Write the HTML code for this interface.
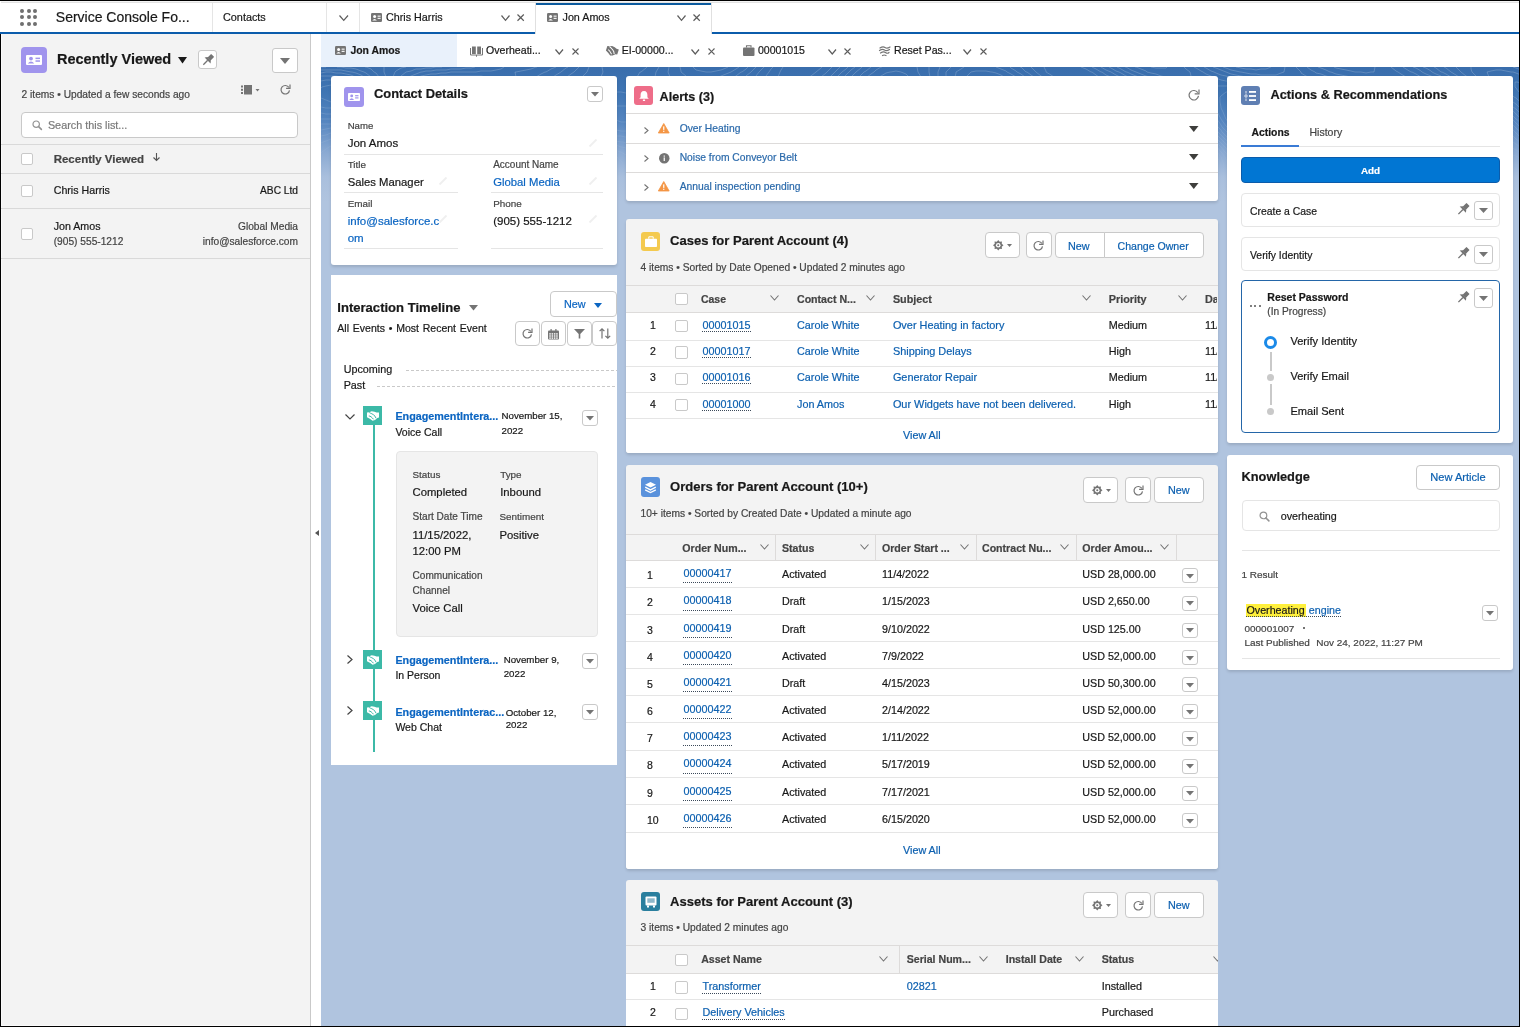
<!DOCTYPE html>
<html><head><meta charset="utf-8"><title>Service Console</title>
<style>
html,body{margin:0;padding:0}
body{width:1520px;height:1027px;overflow:hidden;position:relative;background:#fff;font-family:"Liberation Sans",sans-serif}
#w{position:absolute;left:0;top:0;width:1520px;height:1027px;will-change:transform}
.a{position:absolute}
.t{position:absolute;white-space:nowrap;line-height:1;-webkit-text-stroke:0.2px currentColor}
svg.a{overflow:visible}
</style></head><body>
<div id="w">
<div class="a" style="left:0px;top:0px;width:1520px;height:34px;background:#fff"></div>
<div class="a" style="left:0px;top:0px;width:1520px;height:1px;background:#000"></div>
<div class="a" style="left:1px;top:1px;width:1518px;height:1px;background:#f4f4f4"></div>
<div class="a" style="left:1px;top:2px;width:1518px;height:1px;background:#e2e2e2"></div>
<div class="a" style="left:20.00px;top:9.00px;width:3.8px;height:3.8px;border-radius:50%;background:#707070"></div>
<div class="a" style="left:27.10px;top:9.00px;width:3.8px;height:3.8px;border-radius:50%;background:#707070"></div>
<div class="a" style="left:33.10px;top:9.00px;width:3.8px;height:3.8px;border-radius:50%;background:#707070"></div>
<div class="a" style="left:20.00px;top:15.10px;width:3.8px;height:3.8px;border-radius:50%;background:#707070"></div>
<div class="a" style="left:27.10px;top:15.10px;width:3.8px;height:3.8px;border-radius:50%;background:#707070"></div>
<div class="a" style="left:33.10px;top:15.10px;width:3.8px;height:3.8px;border-radius:50%;background:#707070"></div>
<div class="a" style="left:20.00px;top:22.00px;width:3.8px;height:3.8px;border-radius:50%;background:#707070"></div>
<div class="a" style="left:27.10px;top:22.00px;width:3.8px;height:3.8px;border-radius:50%;background:#707070"></div>
<div class="a" style="left:33.10px;top:22.00px;width:3.8px;height:3.8px;border-radius:50%;background:#707070"></div>
<div class="t" style="left:55.8px;top:10.00px;font-size:14px;font-weight:400;color:#181818;">Service Console Fo...</div>
<div class="a" style="left:212px;top:3px;width:1px;height:29px;background:#e5e5e5"></div>
<div class="t" style="left:223.0px;top:12.00px;font-size:10.85px;font-weight:400;color:#181818;">Contacts</div>
<div class="a" style="left:326px;top:3px;width:1px;height:29px;background:#e5e5e5"></div>
<svg class="a" style="left:339px;top:15px;" width="9.5" height="6.3" viewBox="0 0 9.5 6.3"><path d="M0.5 0.5 L4.75 5.3 L9.0 0.5" fill="none" stroke="#5c5c5c" stroke-width="1.2"/></svg>
<div class="a" style="left:359px;top:3px;width:1px;height:29px;background:#e5e5e5"></div>
<svg class="a" style="left:371px;top:13px;" width="11" height="9" viewBox="0 0 11 9"><rect x="0" y="0" width="11" height="9" rx="1.2" fill="#747474"/><circle cx="3.6" cy="3.4" r="1.5" fill="#fff"/><path d="M1.3 7.6 Q3.6 4.6 5.9 7.6 Z" fill="#fff"/><rect x="6.6" y="2.6" width="3" height="1.1" fill="#fff"/><rect x="6.6" y="4.8" width="3" height="1.1" fill="#fff"/></svg>
<div class="t" style="left:386.0px;top:12.00px;font-size:10.75px;font-weight:400;color:#181818;">Chris Harris</div>
<svg class="a" style="left:500.5px;top:15px;" width="9" height="6.3" viewBox="0 0 9 6.3"><path d="M0.5 0.5 L4.5 5.3 L8.5 0.5" fill="none" stroke="#5c5c5c" stroke-width="1.2"/></svg>
<svg class="a" style="left:517px;top:14.3px;" width="7.3" height="7.3" viewBox="0 0 7.3 7.3"><path d="M0.5 0.5 L6.8 6.8 M6.8 0.5 L0.5 6.8" fill="none" stroke="#5c5c5c" stroke-width="1.2"/></svg>
<div class="a" style="left:0px;top:32px;width:536px;height:2px;background:#0b5cab"></div>
<div class="a" style="left:711px;top:32px;width:809px;height:2px;background:#0b5cab"></div>
<div class="a" style="left:535px;top:3px;width:177px;height:31px;background:#fff;border-left:1px solid #e0e0e0;border-right:1px solid #e0e0e0;box-sizing:border-box"></div>
<div class="a" style="left:536px;top:3px;width:175px;height:2px;background:#0b5a9e"></div>
<svg class="a" style="left:547px;top:13px;" width="11" height="9" viewBox="0 0 11 9"><rect x="0" y="0" width="11" height="9" rx="1.2" fill="#747474"/><circle cx="3.6" cy="3.4" r="1.5" fill="#fff"/><path d="M1.3 7.6 Q3.6 4.6 5.9 7.6 Z" fill="#fff"/><rect x="6.6" y="2.6" width="3" height="1.1" fill="#fff"/><rect x="6.6" y="4.8" width="3" height="1.1" fill="#fff"/></svg>
<div class="t" style="left:562.5px;top:12.00px;font-size:10.75px;font-weight:400;color:#181818;">Jon Amos</div>
<svg class="a" style="left:676.5px;top:15px;" width="9" height="6.3" viewBox="0 0 9 6.3"><path d="M0.5 0.5 L4.5 5.3 L8.5 0.5" fill="none" stroke="#5c5c5c" stroke-width="1.2"/></svg>
<svg class="a" style="left:693px;top:14.3px;" width="7.3" height="7.3" viewBox="0 0 7.3 7.3"><path d="M0.5 0.5 L6.8 6.8 M6.8 0.5 L0.5 6.8" fill="none" stroke="#5c5c5c" stroke-width="1.2"/></svg>
<div class="a" style="left:0px;top:34px;width:1px;height:993px;background:#000"></div>
<div class="a" style="left:1519px;top:0px;width:1px;height:1027px;background:#000"></div>
<div class="a" style="left:1px;top:34px;width:309px;height:993px;background:#f3f3f3"></div>
<div class="a" style="left:1px;top:34px;width:1px;height:991px;background:#fafafa"></div>
<div class="a" style="left:1px;top:1025px;width:309px;height:1px;background:#fafafa"></div>
<div class="a" style="left:310px;top:34px;width:1px;height:993px;background:#c9c9c9"></div>
<div class="a" style="left:311px;top:34px;width:10px;height:993px;background:#fff"></div>
<svg class="a" style="left:314.5px;top:530px;" width="4" height="6" viewBox="0 0 4 6"><path d="M4 0 L4 6 L0 3 Z" fill="#555"/></svg>
<div class="a" style="left:21px;top:47px;width:26px;height:26px;background:#a094ed;border-radius:4px"></div>
<svg class="a" style="left:26px;top:55px;" width="16" height="10" viewBox="0 0 16 10"><rect x="0" y="0" width="16" height="10" rx="1" fill="#fff"/><circle cx="5" cy="3.6" r="1.9" fill="#a094ed"/><path d="M1.8 8.6 Q5 4.6 8.2 8.6 Z" fill="#a094ed"/><rect x="9.5" y="2.6" width="4.5" height="1.5" fill="#a094ed"/><rect x="9.5" y="5.3" width="4.5" height="1.5" fill="#a094ed"/></svg>
<div class="t" style="left:57.0px;top:52.00px;font-size:14.5px;font-weight:700;color:#181818;">Recently Viewed</div>
<svg class="a" style="left:178px;top:57px;" width="9" height="6.5" viewBox="0 0 9 6.5"><path d="M0 0 L9 0 L4.5 6.5 Z" fill="#181818"/></svg>
<div class="a" style="left:198px;top:50px;width:19px;height:19px;background:#fff;border:1px solid #c9c9c9;border-radius:3px;box-sizing:border-box"></div>
<svg class="a" style="left:201.5px;top:53.5px;" width="12" height="12" viewBox="0 0 12 12"><g transform="scale(1.000) rotate(45 6 6)"><rect x="3.9" y="-0.5" width="4.2" height="5" rx="0.4" fill="#747474"/><path d="M1.8 6.6 L10.2 6.6 L8.4 4.3 L3.6 4.3 Z" fill="#747474"/><rect x="5.35" y="6.4" width="1.3" height="6.2" fill="#747474"/></g></svg>
<div class="a" style="left:272px;top:48px;width:26px;height:25px;background:#fff;border:1px solid #c9c9c9;border-radius:3px;box-sizing:border-box"></div>
<svg class="a" style="left:280.0px;top:58.0px;" width="10" height="6" viewBox="0 0 10 6"><path d="M0 0 L10 0 L5.0 6 Z" fill="#747474"/></svg>
<svg class="a" style="left:241px;top:85px;" width="20" height="10" viewBox="0 0 20 10"><rect x="0" y="0.5" width="2" height="2" fill="#747474"/><rect x="0" y="3.8" width="2" height="2" fill="#747474"/><rect x="0" y="7" width="2" height="2" fill="#747474"/><rect x="3" y="0" width="8" height="9.5" fill="#747474"/><path d="M14.5 4 L18.5 4 L16.5 6.5 Z" fill="#747474"/></svg>
<svg class="a" style="left:279.5px;top:84px;" width="10.5" height="10.5" viewBox="0 0 10.5 10.5"><path d="M8.86 3.41 A4.25 4.25 0 1 0 9.50 6.39" fill="none" stroke="#747474" stroke-width="1.2"/><path d="M10.0 0.5 L10.0 4.41 L6.09 4.41" fill="none" stroke="#747474" stroke-width="1.2"/></svg>
<div class="t" style="left:21.6px;top:90.00px;font-size:10.2px;font-weight:400;color:#444;">2 items • Updated a few seconds ago</div>
<div class="a" style="left:21px;top:112px;width:277px;height:26px;background:#fff;border:1px solid #c9c9c9;border-radius:4px;box-sizing:border-box"></div>
<svg class="a" style="left:31.5px;top:119.5px;" width="10" height="10" viewBox="0 0 10 10"><circle cx="4.20" cy="4.20" r="3.20" fill="none" stroke="#939393" stroke-width="1.2"/><path d="M6.60 6.60 L9.4 9.4" stroke="#939393" stroke-width="1.56" stroke-linecap="round"/></svg>
<div class="t" style="left:47.9px;top:120.00px;font-size:10.84px;font-weight:400;color:#7a7a7a;">Search this list...</div>
<div class="a" style="left:1px;top:144px;width:309px;height:1px;background:#d9d9d9"></div>
<div class="a" style="left:21px;top:153px;width:12px;height:12px;background:#fff;border:1px solid #c9c9c9;border-radius:2px;box-sizing:border-box"></div>
<div class="t" style="left:53.7px;top:154.00px;font-size:11.49px;font-weight:700;color:#444;">Recently Viewed</div>
<svg class="a" style="left:153px;top:153px;" width="7" height="8" viewBox="0 0 7 8"><path d="M3.5 0 L3.5 7.5 M0.5 4.5 L3.5 7.5 L6.5 4.5" fill="none" stroke="#555" stroke-width="1.1"/></svg>
<div class="a" style="left:1px;top:173px;width:309px;height:1px;background:#d9d9d9"></div>
<div class="a" style="left:21px;top:185px;width:12px;height:12px;background:#fff;border:1px solid #c9c9c9;border-radius:2px;box-sizing:border-box"></div>
<div class="t" style="left:53.7px;top:185.00px;font-size:10.67px;font-weight:400;color:#181818;">Chris Harris</div>
<div class="t" style="right:1222.0px;top:186.00px;font-size:10.2px;font-weight:400;color:#181818;">ABC Ltd</div>
<div class="a" style="left:1px;top:208px;width:309px;height:1px;background:#d9d9d9"></div>
<div class="a" style="left:21px;top:228px;width:12px;height:12px;background:#fff;border:1px solid #c9c9c9;border-radius:2px;box-sizing:border-box"></div>
<div class="t" style="left:53.7px;top:221.00px;font-size:10.67px;font-weight:400;color:#181818;">Jon Amos</div>
<div class="t" style="left:53.7px;top:237.00px;font-size:10.2px;font-weight:400;color:#444;">(905) 555-1212</div>
<div class="t" style="right:1222.0px;top:222.00px;font-size:10.2px;font-weight:400;color:#444;">Global Media</div>
<div class="t" style="right:1222.0px;top:237.00px;font-size:10.2px;font-weight:400;color:#444;">info@salesforce.com</div>
<div class="a" style="left:1px;top:258px;width:309px;height:1px;background:#d9d9d9"></div>
<div class="a" style="left:321px;top:34px;width:1198px;height:33px;background:#fff"></div>
<div class="a" style="left:321px;top:34px;width:136px;height:33px;background:#e9f1fb"></div>
<svg class="a" style="left:335px;top:46px;" width="11" height="9" viewBox="0 0 11 9"><rect x="0" y="0" width="11" height="9" rx="1.2" fill="#747474"/><circle cx="3.6" cy="3.4" r="1.5" fill="#fff"/><path d="M1.3 7.6 Q3.6 4.6 5.9 7.6 Z" fill="#fff"/><rect x="6.6" y="2.6" width="3" height="1.1" fill="#fff"/><rect x="6.6" y="4.8" width="3" height="1.1" fill="#fff"/></svg>
<div class="t" style="left:350.4px;top:46.00px;font-size:10.42px;font-weight:700;color:#181818;">Jon Amos</div>
<svg class="a" style="left:469.5px;top:45.5px;" width="13" height="10.5" viewBox="0 0 13 10.5"><path d="M0.5 2 L0.5 9 L6.5 9 L6.5 10.5 L6.5 9 L12.5 9 L12.5 2" fill="none" stroke="#747474" stroke-width="1"/><rect x="2" y="0.5" width="3.8" height="7.5" fill="#747474"/><rect x="7.2" y="0.5" width="3.8" height="7.5" fill="#747474"/></svg>
<div class="t" style="left:486.0px;top:45.00px;font-size:10.6px;font-weight:400;color:#181818;">Overheati...</div>
<svg class="a" style="left:555px;top:48.5px;" width="8.5" height="6" viewBox="0 0 8.5 6"><path d="M0.5 0.5 L4.25 5 L8.0 0.5" fill="none" stroke="#5c5c5c" stroke-width="1.2"/></svg>
<svg class="a" style="left:572px;top:47.5px;" width="7" height="7" viewBox="0 0 7 7"><path d="M0.5 0.5 L6.5 6.5 M6.5 0.5 L0.5 6.5" fill="none" stroke="#5c5c5c" stroke-width="1.1"/></svg>
<svg class="a" style="left:606px;top:45.5px;" width="12" height="10.5" viewBox="0 0 12 10.5"><g transform="rotate(18 6 5)"><path d="M0 1.6 L2.3 1.3 L4.6 0.3 L7.5 0.7 L9.6 1.4 L12 1.4 L12 6.6 L10.3 6.9 L8 9.1 L5.6 9.8 L2.8 7.8 L0 6.3 Z" fill="#747474"/><path d="M2.3 1.5 C3.8 2.7 5.6 2.4 8 5.2 L9 7.2" stroke="#fff" stroke-width="1" fill="none"/><path d="M1.8 5 C3.3 4.8 4.8 6.3 6.6 8.3" stroke="#fff" stroke-width="1" fill="none"/></g></svg>
<div class="t" style="left:621.7px;top:45.00px;font-size:10.6px;font-weight:400;color:#181818;">EI-00000...</div>
<svg class="a" style="left:691px;top:48.5px;" width="8.5" height="6" viewBox="0 0 8.5 6"><path d="M0.5 0.5 L4.25 5 L8.0 0.5" fill="none" stroke="#5c5c5c" stroke-width="1.2"/></svg>
<svg class="a" style="left:708px;top:47.5px;" width="7" height="7" viewBox="0 0 7 7"><path d="M0.5 0.5 L6.5 6.5 M6.5 0.5 L0.5 6.5" fill="none" stroke="#5c5c5c" stroke-width="1.1"/></svg>
<svg class="a" style="left:742.5px;top:45px;" width="11.5" height="11" viewBox="0 0 11.5 11"><rect x="0" y="2.5" width="11.5" height="8.5" rx="1" fill="#747474"/><path d="M3.5 2.5 L3.5 0.7 L8 0.7 L8 2.5" fill="none" stroke="#747474" stroke-width="1.1"/></svg>
<div class="t" style="left:758.0px;top:45.00px;font-size:10.56px;font-weight:400;color:#181818;">00001015</div>
<svg class="a" style="left:827.5px;top:48.5px;" width="8.5" height="6" viewBox="0 0 8.5 6"><path d="M0.5 0.5 L4.25 5 L8.0 0.5" fill="none" stroke="#5c5c5c" stroke-width="1.2"/></svg>
<svg class="a" style="left:844px;top:47.5px;" width="7" height="7" viewBox="0 0 7 7"><path d="M0.5 0.5 L6.5 6.5 M6.5 0.5 L0.5 6.5" fill="none" stroke="#5c5c5c" stroke-width="1.1"/></svg>
<svg class="a" style="left:879px;top:45.5px;" width="11.5" height="11" viewBox="0 0 11.5 11"><path d="M1 2 Q4 0 6 1.5 T11 1 M0.5 4.5 Q3.5 2.5 5.5 4 T10.5 3.5 M1.5 7 Q4.5 5 6.5 6.5 T10 6.5 M3.5 9.5 Q5 8.5 7 9.5" fill="none" stroke="#747474" stroke-width="1.2" stroke-linecap="round"/></svg>
<div class="t" style="left:894.0px;top:45.00px;font-size:10.6px;font-weight:400;color:#181818;">Reset Pas...</div>
<svg class="a" style="left:963px;top:48.5px;" width="8.5" height="6" viewBox="0 0 8.5 6"><path d="M0.5 0.5 L4.25 5 L8.0 0.5" fill="none" stroke="#5c5c5c" stroke-width="1.2"/></svg>
<svg class="a" style="left:980px;top:47.5px;" width="7" height="7" viewBox="0 0 7 7"><path d="M0.5 0.5 L6.5 6.5 M6.5 0.5 L0.5 6.5" fill="none" stroke="#5c5c5c" stroke-width="1.1"/></svg>
<div class="a" style="left:321px;top:67px;width:1198px;height:960px;background:linear-gradient(180deg,#396dac 0px,#3f75b3 25px,#5686c0 55px,#8aa9d2 85px,#a9bfdd 110px,#b0c4df 135px,#b0c4df 960px)"></div>
<svg class="a" style="left:321px;top:67px" width="1198" height="120" viewBox="0 0 1198 120"><defs><linearGradient id="cg" x1="0" y1="0" x2="0" y2="1"><stop offset="0" stop-color="#fff" stop-opacity="1"/><stop offset="0.45" stop-color="#fff" stop-opacity="0.6"/><stop offset="0.9" stop-color="#fff" stop-opacity="0"/></linearGradient><mask id="cm"><rect x="0" y="0" width="1198" height="120" fill="url(#cg)"/></mask></defs><path d="M975 95L973 95M980 94L975 95M985 95L980 94M965 98L963 100M970 96L965 98M973 95L970 96M985 95L985 95M990 97L985 95M995 99L990 97M996 100L995 99M960 104L960 105M963 100L960 104M996 100L998 105M960 105L959 110M998 105L996 110M959 110L960 114M960 115L960 114M990 115L989 115M995 111L990 115M996 110L995 111M960 115L965 118M970 119L965 118M975 119L970 119M980 118L975 119M985 117L980 118M989 115L985 117M965 93L962 95M970 92L965 93M975 91L970 92M980 91L975 91M985 92L980 91M990 93L985 92M995 95L990 93M995 95L995 95M960 97L957 100M962 95L960 97M995 95L1000 98M1002 100L1000 98M955 104L955 105M957 100L955 104M1002 100L1003 105M955 105L954 110M1003 105L1001 110M954 110L954 115M1000 111L995 115M1001 110L1000 111M954 115L955 117M958 120L955 117M985 120L985 120M990 118L985 120M995 115L990 118M995 115L995 115M705 54L704 55M710 52L705 54M715 52L710 52M720 52L715 52M725 53L720 52M730 55L725 53M730 55L730 55M704 55L702 60M730 55L735 60M702 60L704 65M735 60L735 61M735 65L735 61M704 65L705 66M710 68L705 66M714 70L710 68M730 70L729 70M735 65L730 70M735 65L735 65M714 70L715 70M720 71L715 70M725 71L720 71M729 70L725 71M965 89L963 90M970 88L965 89M975 88L970 88M980 88L975 88M985 89L980 88M989 90L985 89M960 92L956 95M963 90L960 92M989 90L990 90M995 92L990 90M1000 94L995 92M1002 95L1000 94M955 96L953 100M956 95L955 96M1002 95L1005 98M1006 100L1005 98M953 100L950 105M1006 100L1007 105M950 106L949 110M950 105L950 106M1007 105L1005 110M949 110L949 115M1005 110L1000 115M1005 110L1005 110M949 115L950 119M950 120L950 119M995 118L992 120M1000 115L995 118M1000 115L1000 115M700 50L700 50M705 48L700 50M710 47L705 48M715 47L710 47M720 47L715 47M725 48L720 47M730 49L725 48M732 50L730 49M695 54L695 55M700 50L695 54M732 50L735 52M739 55L735 52M695 55L693 60M739 55L740 56M742 60L740 56M693 60L695 64M695 65L695 64M742 60L743 65M695 65L700 69M702 70L700 69M743 65L741 70M702 70L705 71M710 73L705 71M715 74L710 73M718 75L715 74M735 74L733 75M740 71L735 74M741 70L740 71M718 75L720 75M725 76L720 75M730 76L725 76M733 75L730 76M960 87L955 90M965 86L960 87M970 85L965 86M975 85L970 85M980 86L975 85M985 87L980 86M990 88L985 87M995 89L990 88M997 90L995 89M955 90L951 95M955 90L955 90M997 90L1000 91M1005 94L1000 91M1007 95L1005 94M950 97L948 100M951 95L950 97M1007 95L1010 99M1011 100L1010 99M948 100L947 105M1011 100L1011 105M947 105L945 110M1010 108L1009 110M1011 105L1010 108M945 112L945 115M945 110L945 112M1005 115L1005 115M1009 110L1005 115M945 115L945 120M1000 118L997 120M1005 115L1000 118M5 19L1 20M10 18L5 19M15 19L10 18M20 20L15 19M1 20L0 21M20 20L20 20M24 25L20 20M24 25L23 30M5 33L0 31M10 35L5 33M15 34L10 35M20 32L15 34M23 30L20 32M700 44L698 45M705 43L700 44M710 43L705 43M715 43L710 43M720 43L715 43M725 44L720 43M730 45L725 44M695 47L691 50M698 45L695 47M730 45L730 45M735 47L730 45M740 50L735 47M740 50L740 50M1120 48L1117 50M1125 46L1120 48M1130 46L1125 46M1135 48L1130 46M1140 50L1135 48M1141 50L1140 50M690 51L688 55M691 50L690 51M740 50L745 54M746 55L745 54M1117 50L1117 55M1141 50L1145 53M1147 55L1145 53M688 55L687 60M746 55L748 60M1117 55L1120 60M1120 60L1120 60M1147 55L1148 60M687 60L689 65M748 60L749 65M1120 60L1125 62M1130 64L1125 62M1133 65L1130 64M1145 64L1142 65M1148 60L1145 64M689 65L690 66M694 70L690 66M749 65L748 70M1133 65L1135 65M1140 65L1135 65M1142 65L1140 65M694 70L695 71M700 73L695 71M704 75L700 73M748 70L745 75M704 75L705 75M710 77L705 75M715 78L710 77M720 79L715 78M725 80L720 79M730 80L725 80M735 80L730 80M740 78L735 80M745 75L740 78M745 75L745 75M955 84L954 85M960 82L955 84M965 82L960 82M970 82L965 82M975 82L970 82M980 83L975 82M985 84L980 83M989 85L985 84M950 89L949 90M954 85L950 89M989 85L990 85M995 87L990 85M1000 89L995 87M1004 90L1000 89M949 90L947 95M1004 90L1005 91M1010 94L1005 91M1011 95L1010 94M945 99L945 100M947 95L945 99M1011 95L1014 100M945 100L943 105M1014 100L1015 105M943 105L942 110M1015 105L1013 110M942 110L941 115M1010 113L1008 115M1013 110L1010 113M65 119L63 120M70 118L65 119M75 118L70 118M80 118L75 118M82 120L80 118M941 115L940 120M1005 118L1002 120M1008 115L1005 118M5 13L0 14M10 13L5 13M15 13L10 13M20 14L15 13M24 15L20 14M24 15L25 16M30 19L25 16M31 20L30 19M31 20L34 25M34 25L34 30M34 30L31 35M25 38L21 40M30 35L25 38M31 35L30 35M700 40L699 40M705 39L700 40M710 39L705 39M715 39L710 39M720 40L715 39M722 40L720 40M5 41L0 40M10 41L5 41M15 41L10 41M20 40L15 41M21 40L20 40M690 44L688 45M695 41L690 44M699 40L695 41M722 40L725 40M730 42L725 40M735 43L730 42M739 45L735 43M1115 42L1111 45M1120 41L1115 42M1125 40L1120 41M1130 41L1125 40M1135 42L1130 41M1140 44L1135 42M1142 45L1140 44M685 48L684 50M688 45L685 48M739 45L740 46M745 49L740 46M747 50L745 49M1110 47L1109 50M1111 45L1110 47M1142 45L1145 47M1150 50L1145 47M684 50L682 55M747 50L750 54M751 55L750 54M1109 50L1109 55M1150 50L1150 50M1155 55L1150 50M682 55L681 60M751 55L753 60M1109 55L1110 57M1112 60L1110 57M1155 55L1155 56M1157 60L1155 56M681 60L683 65M753 60L754 65M1112 60L1115 63M1119 65L1115 63M1157 60L1157 65M683 65L685 67M687 70L685 67M754 65L754 70M1119 65L1120 66M1125 67L1120 66M1130 69L1125 67M1135 70L1130 69M1137 70L1135 70M1155 68L1150 70M1157 65L1155 68M687 70L690 72M695 74L690 72M696 75L695 74M754 70L752 75M1137 70L1140 70M1145 70L1140 70M1150 70L1145 70M1150 70L1150 70M696 75L700 76M705 78L700 76M710 80L705 78M711 80L710 80M750 80L750 80M752 75L750 80M955 78L950 80M960 77L955 78M965 78L960 77M970 79L965 78M975 80L970 79M977 80L975 80M711 80L715 81M720 82L715 81M725 83L720 82M730 84L725 83M735 84L730 84M740 84L735 84M745 83L740 84M750 80L745 83M950 80L947 85M950 80L950 80M977 80L980 81M985 82L980 81M990 83L985 82M995 85L990 83M997 85L995 85M945 88L944 90M947 85L945 88M997 85L1000 86M1005 88L1000 86M1009 90L1005 88M944 90L943 95M1009 90L1010 91M1015 95L1010 91M1015 95L1015 95M943 95L941 100M1015 95L1018 100M940 104L940 105M941 100L940 104M1018 100L1018 105M80 110L78 110M85 109L80 110M90 108L85 109M95 108L90 108M100 108L95 108M102 110L100 108M940 105L938 110M1018 105L1016 110M65 114L61 115M70 112L65 114M75 111L70 112M78 110L75 111M100 114L100 115M102 110L100 114M938 110L937 115M1015 111L1012 115M1016 110L1015 111M50 120L50 120M55 118L50 120M60 115L55 118M61 115L60 115M95 120L95 120M100 115L95 120M937 115L936 120M1010 117L1006 120M1012 115L1010 117M5 9L0 9M10 9L5 9M15 9L10 9M20 10L15 9M22 10L20 10M22 10L25 11M30 13L25 11M34 15L30 13M34 15L35 16M39 20L35 16M39 20L40 22M41 25L40 22M41 25L41 30M40 33L39 35M41 30L40 33M35 39L34 40M39 35L35 39M690 38L686 40M695 36L690 38M700 35L695 36M705 35L700 35M710 35L705 35M715 36L710 35M720 36L715 36M725 37L720 36M730 39L725 37M735 40L730 39M920 36L916 40M925 35L920 36M930 35L925 35M935 36L930 35M940 39L935 36M942 40L940 39M1110 38L1107 40M1115 36L1110 38M1120 36L1115 36M1125 36L1120 36M1130 37L1125 36M1135 38L1130 37M1140 40L1135 38M25 44L23 45M30 42L25 44M34 40L30 42M685 40L681 45M686 40L685 40M735 40L735 40M740 42L735 40M745 44L740 42M746 45L745 44M915 44L915 45M916 40L915 44M942 40L945 43M947 45L945 43M1105 42L1104 45M1107 40L1105 42M1140 40L1140 40M1145 42L1140 40M1150 45L1145 42M5 47L0 46M10 47L5 47M15 47L10 47M20 46L15 47M23 45L20 46M680 46L678 50M681 45L680 46M746 45L750 48M752 50L750 48M915 45L915 45M917 50L915 45M947 45L949 50M1104 45L1103 50M1150 45L1150 45M1155 49L1150 45M1156 50L1155 49M678 50L676 55M752 50L755 54M756 55L755 54M917 50L920 55M949 50L950 55M1103 50L1103 55M1156 50L1160 54M1161 55L1160 54M676 55L676 60M756 55L757 60M920 55L920 55M925 60L920 55M950 55L950 57M950 60L950 57M1103 55L1105 59M1105 60L1105 59M1161 55L1164 60M676 60L678 65M757 60L758 65M925 60L925 60M930 64L925 60M932 65L930 64M950 60L952 65M1105 60L1110 64M1111 65L1110 64M1164 60L1165 64M1165 65L1165 64M678 65L680 68M682 70L680 68M758 65L758 70M932 65L935 68M938 70L935 68M952 65L955 68M957 70L955 68M1111 65L1115 67M1120 69L1115 67M1122 70L1120 69M1165 69L1165 70M1165 65L1165 69M682 70L685 72M689 75L685 72M758 70L758 75M938 70L940 73M941 75L940 73M957 70L960 71M965 73L960 71M970 75L965 73M1122 70L1125 71M1130 72L1125 71M1135 73L1130 72M1140 74L1135 73M1145 75L1140 74M1149 75L1145 75M1160 74L1156 75M1165 70L1160 74M689 75L690 75M695 77L690 75M700 79L695 77M702 80L700 79M758 75L757 80M941 75L941 80M970 75L970 75M975 77L970 75M980 78L975 77M985 79L980 78M987 80L985 79M1149 75L1150 75M1155 75L1150 75M1156 75L1155 75M702 80L705 81M710 82L705 81M715 84L710 82M719 85L715 84M757 80L757 85M941 80L941 85M987 80L990 81M995 82L990 81M1000 84L995 82M1003 85L1000 84M719 85L720 85M725 86L720 85M730 88L725 86M735 89L730 88M739 90L735 89M757 85L756 90M941 85L940 90M1003 85L1005 86M1010 88L1005 86M1014 90L1010 88M739 90L740 90M745 92L740 90M750 94L745 92M754 95L750 94M756 90L757 95M940 90L939 95M940 90L940 90M1014 90L1015 91M1019 95L1015 91M100 100L99 100M105 99L100 100M110 98L105 99M115 97L110 98M120 97L115 97M125 98L120 97M127 100L125 98M754 95L754 100M757 95L760 96M765 98L760 96M768 100L765 98M939 95L938 100M1019 95L1020 97M1021 100L1020 97M1190 97L1185 100M1195 97L1190 97M1200 99L1195 97M85 104L81 105M90 102L85 104M95 101L90 102M99 100L95 101M125 102L122 105M127 100L125 102M754 100L754 105M768 100L770 101M775 104L770 101M776 105L775 104M938 100L937 105M1021 100L1021 105M1185 101L1184 105M1185 100L1185 101M65 110L64 110M70 108L65 110M75 107L70 108M80 105L75 107M81 105L80 105M120 107L116 110M122 105L120 107M754 105L754 110M776 105L778 110M937 105L935 110M1020 108L1019 110M1021 105L1020 108M1184 105L1185 107M1186 110L1185 107M55 113L51 115M60 112L55 113M64 110L60 112M110 114L109 115M115 111L110 114M116 110L115 111M754 110L755 115M778 110L777 115M935 110L934 115M935 110L935 110M1019 110L1015 115M1186 110L1190 112M1195 113L1190 112M1200 112L1195 113M45 118L41 120M50 115L45 118M51 115L50 115M105 118L103 120M109 115L105 118M755 115L755 116M759 120L755 116M770 120L768 120M775 117L770 120M777 115L775 117M934 115L932 120M1010 120L1010 120M1015 115L1010 120M1015 115L1015 115M5 5L0 6M10 5L5 5M15 6L10 5M20 6L15 6M25 7L20 6M30 8L25 7M34 10L30 8M34 10L35 10M40 14L35 10M42 15L40 14M42 15L45 19M46 20L45 19M46 20L47 25M47 25L47 30M915 30L914 30M920 29L915 30M925 29L920 29M930 30L925 29M933 30L930 30M47 30L46 35M685 33L682 35M690 32L685 33M695 31L690 32M700 31L695 31M705 31L700 31M710 32L705 31M715 33L710 32M720 33L715 33M725 34L720 33M728 35L725 34M910 32L908 35M914 30L910 32M933 30L935 30M940 32L935 30M945 34L940 32M946 35L945 34M1105 34L1103 35M1110 32L1105 34M1115 32L1110 32M1120 32L1115 32M1125 32L1120 32M1130 33L1125 32M1135 35L1130 33M1136 35L1135 35M45 36L42 40M46 35L45 36M680 36L677 40M682 35L680 36M728 35L730 36M735 37L730 36M740 39L735 37M743 40L740 39M908 35L907 40M946 35L950 39M951 40L950 39M1100 39L1099 40M1103 35L1100 39M1136 35L1140 37M1145 39L1140 37M1147 40L1145 39M40 42L36 45M42 40L40 42M675 43L674 45M677 40L675 43M743 40L745 41M750 44L745 41M752 45L750 44M907 40L907 45M951 40L954 45M1099 40L1098 45M1147 40L1150 41M1155 45L1150 41M1156 45L1155 45M25 49L22 50M30 47L25 49M35 45L30 47M36 45L35 45M674 45L672 50M752 45L755 48M757 50L755 48M907 45L909 50M954 45L955 48M956 50L955 48M1098 45L1097 50M1156 45L1160 49M1162 50L1160 49M5 52L0 52M10 52L5 52M15 51L10 52M20 50L15 51M22 50L20 50M672 50L671 55M757 50L760 55M909 50L910 51M913 55L910 51M956 50L957 55M1097 50L1098 55M1162 50L1165 54M1166 55L1165 54M671 55L671 60M760 55L760 55M762 60L760 55M913 55L915 58M917 60L915 58M957 55L959 60M1098 55L1100 60M1100 60L1100 60M1166 55L1169 60M671 60L672 65M762 60L762 65M917 60L920 63M922 65L920 63M959 60L960 62M962 65L960 62M1100 60L1105 65M1169 60L1170 61M1172 65L1170 61M672 65L675 69M676 70L675 69M762 65L763 70M922 65L925 68M928 70L925 68M962 65L965 68M968 70L965 68M1105 65L1105 65M1110 68L1105 65M1114 70L1110 68M1172 65L1174 70M676 70L680 73M683 75L680 73M763 70L763 75M928 70L930 72M932 75L930 72M968 70L970 71M975 73L970 71M979 75L975 73M1114 70L1115 71M1120 72L1115 71M1125 74L1120 72M1130 75L1125 74M1174 70L1175 75M683 75L685 76M690 78L685 76M694 80L690 78M763 75L764 80M932 75L935 80M979 75L980 75M985 77L980 75M990 79L985 77M994 80L990 79M1130 75L1130 75M1135 76L1130 75M1140 77L1135 76M1145 78L1140 77M1150 79L1145 78M1154 80L1150 79M1175 75L1175 77M1176 80L1175 77M694 80L695 80M700 82L695 80M705 84L700 82M710 85L705 84M764 80L765 85M765 85L765 85M935 80L935 81M936 85L935 81M994 80L995 80M1000 82L995 80M1005 84L1000 82M1009 85L1005 84M1154 80L1155 80M1160 81L1155 80M1165 82L1160 81M1170 84L1165 82M1173 85L1170 84M1176 80L1180 84M1181 85L1180 84M710 85L710 85M715 87L710 85M720 88L715 87M725 90L720 88M725 90L725 90M765 85L768 90M936 85L936 90M1009 85L1010 86M1015 88L1010 86M1018 90L1015 88M1173 85L1174 90M1181 85L1185 86M1190 88L1185 86M1195 89L1190 88M1197 90L1195 89M105 94L101 95M110 93L105 94M115 92L110 93M120 91L115 92M125 90L120 91M130 90L125 90M135 90L130 90M140 92L135 90M143 95L140 92M725 90L730 92M735 94L730 92M736 95L735 94M768 90L770 92M774 95L770 92M936 90L936 95M1018 90L1020 92M1023 95L1020 92M1174 90L1174 95M1197 90L1200 91M85 100L84 100M90 98L85 100M95 97L90 98M100 95L95 97M101 95L100 95M140 100L140 100M143 95L140 100M736 95L740 98M741 100L740 98M774 95L775 96M780 100L775 96M780 100L780 100M935 98L935 100M936 95L935 98M1023 95L1025 100M1174 95L1175 100M70 105L69 105M75 103L70 105M80 102L75 103M84 100L80 102M135 103L133 105M140 100L135 103M520 104L518 105M525 103L520 104M530 102L525 103M535 101L530 102M540 100L535 101M545 101L540 100M550 102L545 101M555 104L550 102M556 105L555 104M741 100L744 105M780 100L785 105M785 105L785 105M935 100L933 105M1025 100L1024 105M1175 100L1175 105M55 110L55 110M60 108L55 110M65 106L60 108M69 105L65 106M125 110L125 110M130 107L125 110M133 105L130 107M510 109L508 110M515 107L510 109M518 105L515 107M556 105L556 110M744 105L744 110M785 105L787 110M933 105L932 110M1024 105L1022 110M1175 105L1175 106M1176 110L1175 106M45 114L43 115M50 112L45 114M55 110L50 112M120 113L117 115M125 110L120 113M505 112L500 115M508 110L505 112M555 111L552 115M556 110L555 111M744 110L745 115M787 110L786 115M932 110L930 115M1020 113L1018 115M1022 110L1020 113M1176 110L1178 115M35 119L34 120M40 117L35 119M43 115L40 117M110 120L110 120M115 116L110 120M117 115L115 116M495 119L493 120M500 115L495 119M500 115L500 115M550 117L546 120M552 115L550 117M745 115L745 117M745 120L745 117M785 117L783 120M786 115L785 117M930 116L928 120M930 115L930 116M1015 118L1013 120M1018 115L1015 118M1178 115L1180 117M1185 120L1180 117M1187 120L1185 120M1200 120L1198 120M5 3L0 3M10 3L5 3M15 3L10 3M20 3L15 3M25 4L20 3M30 5L25 4M31 5L30 5M460 3L459 5M462 0L460 3M500 1L495 5M501 0L500 1M830 0L830 0M835 1L830 0M840 1L835 1M845 1L840 1M846 0L845 1M31 5L35 6M40 8L35 6M43 10L40 8M459 5L457 10M490 9L488 10M495 5L490 9M495 5L495 5M43 10L45 12M48 15L45 12M457 10L458 15M485 12L480 15M488 10L485 12M48 15L50 18M51 20L50 18M458 15L460 17M465 19L460 17M470 18L465 19M475 17L470 18M480 15L475 17M480 15L480 15M51 20L53 25M910 24L906 25M915 24L910 24M920 24L915 24M925 24L920 24M930 25L925 24M53 25L53 30M675 29L674 30M680 26L675 29M685 26L680 26M690 26L685 26M695 26L690 26M700 27L695 26M705 28L700 27M710 28L705 28M715 29L710 28M718 30L715 29M900 29L899 30M905 25L900 29M906 25L905 25M930 25L930 25M935 26L930 25M940 27L935 26M945 29L940 27M947 30L945 29M1100 29L1098 30M1105 27L1100 29M1110 27L1105 27M1115 27L1110 27M1120 28L1115 27M1125 29L1120 28M1130 30L1125 29M53 30L52 35M674 30L671 35M718 30L720 30M725 31L720 30M730 33L725 31M735 34L730 33M738 35L735 34M899 30L899 35M947 30L950 32M954 35L950 32M1095 34L1095 35M1098 30L1095 34M1130 30L1130 30M1135 32L1130 30M1140 33L1135 32M1144 35L1140 33M50 39L49 40M52 35L50 39M295 39L293 40M300 39L295 39M305 39L300 39M310 40L305 39M311 40L310 40M670 39L670 40M671 35L670 39M738 35L740 36M745 38L740 36M750 40L745 38M899 35L900 40M954 35L955 36M958 40L955 36M1095 35L1093 40M1144 35L1145 36M1150 38L1145 36M1153 40L1150 38M45 44L44 45M49 40L45 44M290 42L286 45M293 40L290 42M311 40L315 41M320 44L315 41M322 45L320 44M670 40L668 45M750 40L750 40M755 43L750 40M757 45L755 43M900 40L900 41M902 45L900 41M958 40L960 45M960 45L960 45M1093 40L1093 45M1153 40L1155 41M1160 44L1155 41M1161 45L1160 44M40 48L35 50M44 45L40 48M286 45L288 50M322 45L324 50M668 45L667 50M757 45L760 48M761 50L760 48M902 45L904 50M960 45L961 50M1093 45L1093 50M1161 45L1165 49M1166 50L1165 49M20 55L19 55M25 54L20 55M30 52L25 54M35 50L30 52M35 50L35 50M288 50L290 51M295 53L290 51M300 55L295 53M303 55L300 55M315 54L311 55M320 52L315 54M324 50L320 52M667 50L666 55M761 50L764 55M904 50L905 52M907 55L905 52M961 50L963 55M1093 50L1093 55M1166 50L1170 54M1171 55L1170 54M5 57L0 57M10 57L5 57M15 56L10 57M19 55L15 56M303 55L305 55M310 55L305 55M311 55L310 55M666 55L666 60M764 55L765 58M765 60L765 58M907 55L910 59M911 60L910 59M963 55L965 60M1093 55L1095 59M1095 60L1095 59M1171 55L1175 60M666 60L667 65M765 60L766 65M911 60L915 64M916 65L915 64M965 60L965 60M968 65L965 60M1095 60L1099 65M1175 60L1175 61M1178 65L1175 61M667 65L670 69M671 70L670 69M766 65L767 70M916 65L920 69M921 70L920 69M968 65L970 66M975 70L970 66M975 70L975 70M1099 65L1100 66M1105 69L1100 66M1107 70L1105 69M1178 65L1180 69M1181 70L1180 69M671 70L675 74M677 75L675 74M767 70L768 75M921 70L925 74M926 75L925 74M975 70L980 72M985 74L980 72M986 75L985 74M1107 70L1110 71M1115 73L1110 71M1120 75L1115 73M1120 75L1120 75M1181 70L1184 75M677 75L680 77M685 79L680 77M687 80L685 79M768 75L769 80M926 75L929 80M986 75L990 76M995 78L990 76M1000 80L995 78M1001 80L1000 80M1120 75L1125 76M1130 78L1125 76M1135 79L1130 78M1139 80L1135 79M1184 75L1185 76M1190 80L1185 76M687 80L690 81M695 83L690 81M700 84L695 83M702 85L700 84M769 80L770 82M771 85L770 82M929 80L930 81M931 85L930 81M1001 80L1005 81M1010 83L1005 81M1014 85L1010 83M1139 80L1140 80M1145 82L1140 80M1150 83L1145 82M1155 85L1150 83M1155 85L1155 85M1190 80L1190 80M1195 83L1190 80M1199 85L1195 83M105 90L105 90M110 89L105 90M115 88L110 89M120 87L115 88M125 86L120 87M130 86L125 86M135 86L130 86M140 86L135 86M145 87L140 86M150 88L145 87M154 90L150 88M702 85L705 86M710 88L705 86M715 89L710 88M717 90L715 89M771 85L775 89M776 90L775 89M931 85L932 90M1014 85L1015 85M1020 88L1015 85M1022 90L1020 88M1155 85L1160 88M1163 90L1160 88M1199 85L1200 86M90 95L89 95M95 93L90 95M100 91L95 93M105 90L100 91M154 90L154 95M535 95L535 95M540 95L535 95M545 95L540 95M546 95L545 95M717 90L720 91M725 94L720 91M728 95L725 94M776 90L780 94M781 95L780 94M932 90L932 95M1022 90L1025 93M1026 95L1025 93M1163 90L1165 93M1166 95L1165 93M75 100L74 100M80 98L75 100M85 96L80 98M89 95L85 96M150 99L149 100M154 95L150 99M515 99L513 100M520 98L515 99M525 96L520 98M530 96L525 96M535 95L530 96M546 95L550 95M555 96L550 95M560 98L555 96M565 100L560 98M728 95L730 97M734 100L730 97M781 95L785 98M787 100L785 98M932 95L932 100M1026 95L1028 100M1166 95L1168 100M60 105L60 105M65 103L60 105M70 101L65 103M74 100L70 101M145 102L141 105M149 100L145 102M505 103L502 105M510 101L505 103M513 100L510 101M565 100L565 100M568 105L565 100M734 100L735 102M737 105L735 102M787 100L790 103M791 105L790 103M932 100L930 105M1028 100L1027 105M1168 100L1169 105M50 109L46 110M55 107L50 109M60 105L55 107M135 108L132 110M140 106L135 108M141 105L140 106M495 109L492 110M500 106L495 109M502 105L500 106M568 105L567 110M737 105L738 110M791 105L793 110M930 107L929 110M930 105L930 107M1025 110L1025 110M1027 105L1025 110M1169 105L1169 110M40 113L35 115M45 111L40 113M46 110L45 111M125 114L124 115M130 111L125 114M132 110L130 111M485 114L483 115M490 111L485 114M492 110L490 111M565 113L563 115M567 110L565 113M738 110L738 115M793 110L793 115M929 110L927 115M1025 110L1021 115M1169 110L1170 114M1170 115L1170 114M30 118L28 120M35 115L30 118M35 115L35 115M120 117L116 120M124 115L120 117M475 120L474 120M480 117L475 120M483 115L480 117M560 118L557 120M563 115L560 118M738 115L738 120M793 115L790 120M925 119L925 120M927 115L925 119M1020 117L1017 120M1021 115L1020 117M1170 115L1172 120M5 0L0 0M16 0L20 0M25 1L20 0M30 1L25 1M35 2L30 1M40 4L35 2M43 5L40 4M450 2L448 5M452 0L450 2M510 1L506 5M511 0L510 1M814 0L815 0M820 2L815 0M825 4L820 2M826 5L825 4M863 0L865 2M869 5L865 2M1013 0L1015 1M1020 2L1015 1M1025 3L1020 2M1030 4L1025 3M1034 5L1030 4M1054 0L1053 5M43 5L45 6M50 10L45 6M50 10L50 10M445 9L444 10M448 5L445 9M505 6L500 10M506 5L505 6M826 5L830 6M835 7L830 6M840 9L835 7M845 10L840 9M847 10L845 10M869 5L870 9M871 10L870 9M1034 5L1035 5M1040 5L1035 5M1045 6L1040 5M1050 5L1045 6M1053 5L1050 5M50 10L54 15M444 10L441 15M495 15L495 15M500 10L495 15M500 10L500 10M665 14L662 15M670 14L665 14M675 15L670 14M676 15L675 15M847 10L850 11M855 11L850 11M860 11L855 11M865 12L860 11M870 11L865 12M871 10L870 11M54 15L55 16M57 20L55 16M440 17L439 20M441 15L440 17M490 19L488 20M495 15L490 19M662 15L661 20M676 15L680 16M685 18L680 16M690 20L685 18M691 20L690 20M890 19L889 20M895 19L890 19M900 19L895 19M905 19L900 19M910 19L905 19M915 19L910 19M920 20L915 19M921 20L920 20M57 20L58 25M439 20L437 25M485 22L480 25M488 20L485 22M661 20L662 25M691 20L695 21M700 22L695 21M705 24L700 22M710 25L705 24M710 25L710 25M889 20L888 25M921 20L925 20M930 21L925 20M935 22L930 21M940 23L935 22M945 25L940 23M946 25L945 25M1090 25L1090 25M1095 22L1090 25M1100 22L1095 22M1105 22L1100 22M1110 22L1105 22M1115 23L1110 22M1120 24L1115 23M1123 25L1120 24M58 25L58 30M280 29L278 30M285 27L280 29M290 25L285 27M295 25L290 25M300 25L295 25M305 26L300 25M310 27L305 26M315 28L310 27M320 30L315 28M320 30L320 30M437 25L437 30M475 28L470 30M480 25L475 28M480 25L480 25M662 25L663 30M710 25L715 26M720 27L715 26M725 29L720 27M730 30L725 29M730 30L730 30M888 25L890 30M890 30L890 30M946 25L950 26M955 29L950 26M956 30L955 29M1090 25L1088 30M1123 25L1125 25M1130 27L1125 25M1135 29L1130 27M1139 30L1135 29M58 30L57 35M275 32L271 35M278 30L275 32M320 30L325 32M330 34L325 32M334 35L330 34M437 30L440 33M444 35L440 33M455 35L451 35M460 33L455 35M465 32L460 33M470 30L465 32M470 30L470 30M663 30L663 35M730 30L735 31M740 33L735 31M745 35L740 33M746 35L745 35M890 30L892 35M956 30L960 34M961 35L960 34M1088 30L1088 35M1139 30L1140 30M1145 32L1140 30M1150 35L1145 32M1150 35L1150 35M57 35L55 40M270 37L268 40M271 35L270 37M334 35L335 35M340 38L335 35M345 40L340 38M346 40L345 40M444 35L445 35M450 35L445 35M451 35L450 35M663 35L663 40M746 35L750 37M755 39L750 37M756 40L755 39M892 35L894 40M961 35L964 40M1088 35L1088 40M1150 35L1155 38M1159 40L1155 38M55 40L51 45M55 40L55 40M268 40L266 45M346 40L350 42M354 45L350 42M663 40L662 45M756 40L760 43M762 45L760 43M894 40L895 42M896 45L895 42M964 40L965 44M965 45L965 44M1088 40L1088 45M1159 40L1160 41M1165 45L1160 41M1166 45L1165 45M45 50L45 50M50 46L45 50M51 45L50 46M266 45L267 50M354 45L355 46M357 50L355 46M662 45L662 50M762 45L765 49M766 50L765 49M896 45L899 50M965 45L966 50M1088 45L1088 50M1166 45L1170 49M1171 50L1170 49M35 55L34 55M40 53L35 55M45 50L40 53M267 50L270 55M355 54L354 55M357 50L355 54M662 50L661 55M766 50L768 55M899 50L900 52M902 55L900 52M966 50L968 55M1088 50L1089 55M1171 50L1175 54M1176 55L1175 54M20 59L16 60M25 58L20 59M30 57L25 58M34 55L30 57M270 55L270 55M275 58L270 55M280 60L275 58M280 60L280 60M350 57L345 60M354 55L350 57M661 55L661 60M768 55L769 60M902 55L905 59M906 60L905 59M968 55L970 60M970 60L970 60M1089 55L1090 58M1091 60L1090 58M1176 55L1180 60M5 62L0 63M10 61L5 62M15 60L10 61M16 60L15 60M280 60L285 61M290 62L285 61M295 63L290 62M300 64L295 63M305 64L300 64M310 64L305 64M315 65L310 64M320 65L315 65M325 64L320 65M330 64L325 64M335 63L330 64M340 62L335 63M345 60L340 62M345 60L345 60M661 60L663 65M769 60L770 65M770 65L770 65M906 60L910 65M910 65L910 65M970 60L974 65M1091 60L1094 65M1180 60L1180 61M1183 65L1180 61M663 65L665 69M665 70L665 69M770 65L771 70M910 65L915 69M916 70L915 69M974 65L975 66M980 69L975 66M982 70L980 69M1094 65L1095 66M1100 70L1095 66M1101 70L1100 70M1183 65L1185 67M1187 70L1185 67M665 70L670 74M671 75L670 74M771 70L772 75M916 70L920 74M920 75L920 74M982 70L985 72M990 74L985 72M993 75L990 74M1101 70L1105 72M1110 74L1105 72M1112 75L1110 74M1187 70L1190 73M1192 75L1190 73M671 75L675 77M680 80L675 77M681 80L680 80M772 75L774 80M920 75L925 80M993 75L995 76M1000 77L995 76M1005 79L1000 77M1007 80L1005 79M1112 75L1115 76M1120 77L1115 76M1125 79L1120 77M1130 80L1125 79M1192 75L1195 77M1199 80L1195 77M115 84L112 85M120 84L115 84M125 83L120 84M130 83L125 83M135 82L130 83M140 82L135 82M145 82L140 82M150 83L145 82M155 84L150 83M160 85L155 84M161 85L160 85M681 80L685 82M690 83L685 82M695 85L690 83M774 80L775 82M777 85L775 82M925 80L925 81M927 85L925 81M1007 80L1010 81M1015 83L1010 81M1019 85L1015 83M1130 80L1130 80M1135 81L1130 80M1140 83L1135 81M1145 85L1140 83M1146 85L1145 85M1199 80L1200 81M95 89L93 90M100 88L95 89M105 87L100 88M110 85L105 87M112 85L110 85M161 85L165 90M695 85L695 85M700 87L695 85M705 89L700 87M709 90L705 89M777 85L780 88M782 90L780 88M927 85L929 90M1019 85L1020 85M1025 89L1020 85M1027 90L1025 89M1146 85L1150 87M1155 90L1150 87M1155 90L1155 90M80 95L79 95M85 93L80 95M90 91L85 93M93 90L90 91M165 90L162 95M515 94L510 95M520 92L515 94M525 92L520 92M530 91L525 92M535 91L530 91M540 91L535 91M545 91L540 91M550 91L545 91M555 92L550 91M560 93L555 92M565 94L560 93M568 95L565 94M709 90L710 90M715 92L710 90M720 95L715 92M721 95L720 95M782 90L785 93M787 95L785 93M929 90L929 95M1027 90L1030 95M1030 95L1030 95M1155 90L1160 95M70 98L65 100M75 96L70 98M79 95L75 96M160 97L157 100M162 95L160 97M500 99L498 100M505 97L500 99M510 95L505 97M510 95L510 95M568 95L570 96M575 100L570 96M576 100L575 100M721 95L725 98M727 100L725 98M787 95L790 97M793 100L790 97M929 95L929 100M1030 95L1031 100M1160 95L1160 95M1162 100L1160 95M55 104L51 105M60 102L55 104M65 100L60 102M65 100L65 100M150 104L148 105M155 101L150 104M157 100L155 101M490 104L488 105M495 102L490 104M498 100L495 102M576 100L577 105M727 100L730 104M731 105L730 104M793 100L795 103M797 105L795 103M929 100L927 105M1031 100L1030 105M1162 100L1163 105M40 109L38 110M45 107L40 109M50 105L45 107M51 105L50 105M140 109L139 110M145 107L140 109M148 105L145 107M480 109L478 110M485 107L480 109M488 105L485 107M577 105L575 110M731 105L732 110M797 105L799 110M927 105L926 110M1030 105L1028 110M1030 105L1030 105M1163 105L1164 110M30 114L28 115M35 111L30 114M38 110L35 111M130 115L130 115M135 112L130 115M139 110L135 112M470 114L467 115M475 111L470 114M478 110L475 111M575 110L571 115M575 110L575 110M732 110L732 115M799 110L799 115M925 112L924 115M926 110L925 112M1025 114L1025 115M1028 110L1025 114M1164 110L1164 115M25 117L21 120M28 115L25 117M125 118L121 120M130 115L125 118M460 118L457 120M465 116L460 118M467 115L465 116M570 116L566 120M571 115L570 116M732 115L732 120M799 115L796 120M924 115L921 120M1020 120L1020 120M1025 115L1020 120M1164 115L1165 120M44 0L45 0M50 2L45 0M53 5L50 2M281 0L282 5M320 5L319 5M325 1L320 5M326 0L325 1M440 3L438 5M443 0L440 3M515 4L514 5M519 0L515 4M655 4L650 5M660 4L655 4M665 4L660 4M670 5L665 4M671 5L670 5M804 0L805 0M810 3L805 0M815 5L810 3M873 0L875 1M880 4L875 1M882 5L880 4M997 0L1000 1M1005 3L1000 1M1009 5L1005 3M1070 0L1070 0M1075 4L1070 0M1077 5L1075 4M53 5L55 6M58 10L55 6M282 5L280 10M319 5L316 10M435 9L434 10M438 5L435 9M510 9L509 10M514 5L510 9M645 10L645 10M650 5L645 10M650 5L650 5M671 5L675 6M680 8L675 6M683 10L680 8M815 5L815 5M820 7L815 5M825 9L820 7M829 10L825 9M882 5L885 7M890 9L885 7M892 10L890 9M1009 5L1010 5M1015 7L1010 5M1020 8L1015 7M1025 9L1020 8M1030 10L1025 9M1032 10L1030 10M1077 5L1080 7M1085 10L1080 7M1085 10L1085 10M58 10L60 15M60 15L60 15M275 15L275 15M280 10L275 15M280 10L280 10M316 10L317 15M430 14L429 15M434 10L430 14M505 14L504 15M509 10L505 14M645 10L645 15M683 10L685 11M690 13L685 11M693 15L690 13M829 10L830 10M835 12L830 10M840 13L835 12M845 14L840 13M849 15L845 14M892 10L895 11M900 13L895 11M905 14L900 13M910 14L905 14M913 15L910 14M1032 10L1035 10M1040 11L1035 10M1045 12L1040 11M1050 13L1045 12M1055 14L1050 13M1060 15L1055 14M1061 15L1060 15M1085 10L1090 12M1095 14L1090 12M1099 15L1095 14M60 15L62 20M270 19L268 20M275 15L270 19M317 15L320 18M323 20L320 18M425 19L424 20M429 15L425 19M500 19L499 20M504 15L500 19M645 15L645 15M648 20L645 15M693 15L695 16M700 18L695 16M705 20L700 18M706 20L705 20M849 15L850 15M855 16L850 15M860 18L855 16M865 19L860 18M867 20L865 19M913 15L915 15M920 16L915 15M925 17L920 16M930 18L925 17M935 18L930 18M940 19L935 18M943 20L940 19M1061 15L1065 16M1070 18L1065 16M1073 20L1070 18M1099 15L1100 15M1105 17L1100 15M1110 18L1105 17M1115 19L1110 18M1118 20L1115 19M62 20L63 25M265 23L263 25M268 20L265 23M323 20L325 21M330 24L325 21M333 25L330 24M420 24L419 25M424 20L420 24M495 23L493 25M499 20L495 23M648 20L650 23M651 25L650 23M706 20L710 21M715 23L710 21M720 24L715 23M723 25L720 24M867 20L870 21M875 24L870 21M877 25L875 24M943 20L945 20M950 22L945 20M955 24L950 22M958 25L955 24M1073 20L1075 21M1078 25L1075 21M1118 20L1120 21M1125 22L1120 21M1130 24L1125 22M1134 25L1130 24M63 25L63 30M260 29L259 30M263 25L260 29M333 25L335 26M340 28L335 26M345 30L340 28M346 30L345 30M415 28L412 30M419 25L415 28M490 27L486 30M493 25L490 27M651 25L654 30M723 25L725 26M730 27L725 26M735 28L730 27M740 30L735 28M740 30L740 30M877 25L880 28M882 30L880 28M958 25L960 27M964 30L960 27M1078 25L1080 29M1081 30L1080 29M1134 25L1135 25M1140 27L1135 25M1145 29L1140 27M1146 30L1145 29M63 30L63 35M259 30L257 35M346 30L350 31M355 33L350 31M360 34L355 33M365 35L360 34M405 34L400 35M410 31L405 34M412 30L410 31M480 34L479 35M485 31L480 34M486 30L485 31M654 30L655 33M656 35L655 33M740 30L745 32M750 34L745 32M753 35L750 34M882 30L885 34M886 35L885 34M964 30L965 32M967 35L965 32M1081 30L1082 35M1146 30L1150 32M1155 34L1150 32M1156 35L1155 34M63 35L61 40M255 40L255 40M257 35L255 40M365 35L365 35M370 36L365 35M375 37L370 36M380 37L375 37M385 38L380 37M390 37L385 38M395 37L390 37M400 35L395 37M400 35L400 35M475 37L471 40M479 35L475 37M656 35L657 40M753 35L755 36M760 39L755 36M761 40L760 39M886 35L889 40M967 35L969 40M1082 35L1083 40M1156 35L1160 37M1164 40L1160 37M60 42L58 45M61 40L60 42M255 40L254 45M465 43L460 45M470 40L465 43M471 40L470 40M657 40L657 45M761 40L765 43M767 45L765 43M889 40L890 42M891 45L890 42M969 40L970 45M1083 40L1084 45M1164 40L1165 41M1170 45L1165 41M1170 45L1170 45M55 48L53 50M58 45L55 48M254 45L254 50M445 50L445 50M450 49L445 50M455 47L450 49M460 45L455 47M460 45L460 45M657 45L657 50M767 45L770 50M891 45L894 50M970 45L970 45M971 50L970 45M1084 45L1084 50M1170 45L1175 49M1176 50L1175 49M50 52L45 55M53 50L50 52M254 50L255 55M405 54L401 55M410 54L405 54M415 53L410 54M420 53L415 53M425 52L420 53M430 52L425 52M435 52L430 52M440 51L435 52M445 50L440 51M657 50L657 55M770 50L770 51M772 55L770 51M894 50L895 51M898 55L895 51M971 50L973 55M1084 50L1085 55M1085 55L1085 55M1176 50L1180 55M1180 55L1180 55M35 59L33 60M40 57L35 59M45 55L40 57M45 55L45 55M255 55L255 55M260 60L255 55M260 60L260 60M385 59L382 60M390 57L385 59M395 56L390 57M400 55L395 56M401 55L400 55M657 55L657 60M772 55L773 60M898 55L900 58M901 60L900 58M973 55L975 60M975 60L975 60M1085 55L1086 60M1180 55L1184 60M20 64L15 65M25 62L20 64M30 61L25 62M33 60L30 61M260 60L265 62M270 64L265 62M274 65L270 64M370 65L370 65M375 63L370 65M380 61L375 63M382 60L380 61M657 60L658 65M773 60L774 65M901 60L905 64M906 65L905 64M975 60L980 65M1086 60L1089 65M1184 60L1185 61M1189 65L1185 61M5 68L0 69M10 66L5 68M15 65L10 66M15 65L15 65M274 65L275 65M280 66L275 65M285 67L280 66M290 68L285 67M295 69L290 68M300 69L295 69M304 70L300 69M360 69L357 70M365 67L360 69M370 65L365 67M658 65L660 70M660 70L660 70M774 65L775 70M906 65L910 69M911 70L910 69M980 65L980 65M985 69L980 65M987 70L985 69M1089 65L1090 66M1095 70L1090 66M1189 65L1190 67M1193 70L1190 67M304 70L305 70M310 71L305 70M315 71L310 71M320 72L315 71M325 72L320 72M330 73L325 72M335 73L330 73M340 73L335 73M345 73L340 73M350 72L345 73M355 71L350 72M357 70L355 71M660 70L665 75M665 75L665 75M775 70L775 71M776 75L775 71M911 70L915 74M916 75L915 74M987 70L990 71M995 73L990 71M999 75L995 73M1095 70L1095 70M1100 73L1095 70M1105 75L1100 73M1105 75L1105 75M1193 70L1195 72M1199 75L1195 72M125 80L124 80M130 79L125 80M135 79L130 79M140 79L135 79M145 79L140 79M150 79L145 79M155 79L150 79M160 80L155 79M161 80L160 80M665 75L670 78M674 80L670 78M776 75L778 80M916 75L920 80M920 80L920 80M999 75L1000 75M1005 77L1000 75M1010 79L1005 77M1013 80L1010 79M1105 75L1110 77M1115 78L1110 77M1120 80L1115 78M1122 80L1120 80M1199 75L1200 76M100 85L98 85M105 83L100 85M110 82L105 83M115 81L110 82M120 81L115 81M124 80L120 81M161 80L165 81M170 83L165 81M173 85L170 83M674 80L675 80M680 82L675 80M685 84L680 82M687 85L685 84M778 80L780 83M782 85L780 83M920 80L923 85M1013 80L1015 81M1020 83L1015 81M1024 85L1020 83M1122 80L1125 81M1130 82L1125 81M1135 84L1130 82M1138 85L1135 84M85 89L83 90M90 88L85 89M95 86L90 88M98 85L95 86M173 85L174 90M510 90L508 90M515 88L510 90M520 88L515 88M525 87L520 88M530 87L525 87M535 87L530 87M540 87L535 87M545 87L540 87M550 88L545 87M555 88L550 88M560 89L555 88M565 90L560 89M566 90L565 90M687 85L690 86M695 88L690 86M700 89L695 88M702 90L700 89M782 85L785 88M787 90L785 88M923 85L925 90M925 90L925 90M1024 85L1025 85M1030 89L1025 85M1031 90L1030 89M1138 85L1140 86M1145 88L1140 86M1148 90L1145 88M70 95L70 95M75 93L70 95M80 91L75 93M83 90L80 91M170 95L170 95M174 90L170 95M495 95L495 95M500 93L495 95M505 91L500 93M508 90L505 91M566 90L570 91M575 93L570 91M579 95L575 93M702 90L705 91M710 93L705 91M714 95L710 93M787 90L790 93M793 95L790 93M925 90L926 95M1031 90L1034 95M1148 90L1150 91M1154 95L1150 91M60 99L56 100M65 97L60 99M70 95L65 97M165 99L164 100M170 95L165 99M485 100L485 100M490 97L485 100M495 95L490 97M579 95L580 96M584 100L580 96M714 95L715 96M720 99L715 96M722 100L720 99M793 95L795 97M798 100L795 97M926 95L926 100M1034 95L1034 100M1154 95L1155 96M1157 100L1155 96M45 104L42 105M50 102L45 104M55 100L50 102M56 100L55 100M160 102L155 105M164 100L160 102M475 105L474 105M480 102L475 105M485 100L480 102M584 100L585 105M722 100L725 104M725 105L725 104M798 100L800 103M801 105L800 103M925 103L925 105M926 100L925 103M1034 100L1033 105M1157 100L1159 105M35 108L30 110M40 106L35 108M42 105L40 106M150 108L145 110M155 105L150 108M155 105L155 105M465 109L462 110M470 107L465 109M474 105L470 107M585 105L582 110M725 105L727 110M801 105L803 110M925 105L923 110M1033 105L1031 110M1159 105L1159 110M25 113L21 115M30 110L25 113M30 110L30 110M140 113L136 115M145 110L140 113M145 110L145 110M450 114L448 115M455 113L450 114M460 111L455 113M462 110L460 111M580 113L578 115M582 110L580 113M727 110L727 115M803 110L804 115M923 110L921 115M1030 111L1028 115M1031 110L1030 111M1159 110L1159 115M15 120L15 120M20 116L15 120M21 115L20 116M130 118L127 120M135 115L130 118M136 115L135 115M440 119L437 120M445 116L440 119M448 115L445 116M575 118L573 120M578 115L575 118M727 115L726 120M804 115L802 120M920 116L917 120M921 115L920 116M1025 118L1023 120M1028 115L1025 118M1159 115L1158 120M63 0L63 5M268 0L266 5M335 5L335 5M338 0L335 5M430 5L430 5M435 0L430 5M435 0L435 0M525 2L521 5M527 0L525 2M640 2L635 5M643 0L640 2M675 0L675 0M680 2L675 0M685 4L680 2M686 5L685 4M796 0L800 2M805 5L800 2M806 5L805 5M883 0L885 1M890 4L885 1M893 5L890 4M986 0L990 3M994 5L990 3M1082 0L1085 2M1090 5L1085 2M1091 5L1090 5M63 5L65 10M265 6L261 10M266 5L265 6M335 5L334 10M425 9L424 10M430 5L425 9M520 6L516 10M521 5L520 6M635 6L634 10M635 5L635 6M686 5L690 7M695 10L690 7M806 5L810 7M815 9L810 7M818 10L815 9M893 5L895 6M900 8L895 6M905 9L900 8M908 10L905 9M994 5L995 6M1000 7L995 6M1005 9L1000 7M1009 10L1005 9M1091 5L1095 7M1100 10L1095 7M1101 10L1100 10M65 10L65 12M66 15L65 12M260 11L256 15M261 10L260 11M334 10L335 12M336 15L335 12M420 13L418 15M424 10L420 13M515 12L512 15M516 10L515 12M634 10L635 15M635 15L635 15M695 10L695 10M700 13L695 10M704 15L700 13M818 10L820 11M825 12L820 11M830 14L825 12M834 15L830 14M908 10L910 10M915 12L910 10M920 12L915 12M925 13L920 12M930 14L925 13M935 15L930 14M936 15L935 15M1009 10L1010 10M1015 11L1010 10M1020 12L1015 11M1025 13L1020 12M1030 14L1025 13M1035 14L1030 14M1038 15L1035 14M1101 10L1105 12M1110 14L1105 12M1114 15L1110 14M66 15L67 20M255 16L251 20M256 15L255 16M336 15L340 18M344 20L340 18M410 20L410 20M415 17L410 20M418 15L415 17M510 17L507 20M512 15L510 17M635 15L638 20M704 15L705 15M710 17L705 15M715 19L710 17M717 20L715 19M834 15L835 15M840 17L835 15M845 18L840 17M850 19L845 18M853 20L850 19M936 15L940 16M945 17L940 16M950 18L945 17M955 19L950 18M959 20L955 19M1038 15L1040 15M1045 16L1040 15M1050 17L1045 16M1055 19L1050 17M1059 20L1055 19M1114 15L1115 15M1120 17L1115 15M1125 19L1120 17M1128 20L1125 19M67 20L68 25M250 22L248 25M251 20L250 22M344 20L345 21M350 23L345 21M355 24L350 23M357 25L355 24M400 25L398 25M405 23L400 25M410 20L405 23M505 22L502 25M507 20L505 22M638 20L640 22M642 25L640 22M717 20L720 21M725 23L720 21M730 24L725 23M733 25L730 24M853 20L855 21M860 22L855 21M865 24L860 22M867 25L865 24M959 20L960 21M965 23L960 21M967 25L965 23M1059 20L1060 20M1065 23L1060 20M1068 25L1065 23M1128 20L1130 21M1135 22L1130 21M1140 24L1135 22M1141 25L1140 24M68 25L68 30M248 25L247 30M357 25L360 26M365 27L360 26M370 27L365 27M375 28L370 27M380 28L375 28M385 28L380 28M390 27L385 28M395 26L390 27M398 25L395 26M500 27L497 30M502 25L500 27M642 25L645 28M646 30L645 28M733 25L735 26M740 27L735 26M745 29L740 27M749 30L745 29M867 25L870 27M875 30L870 27M967 25L970 29M971 30L970 29M1068 25L1070 26M1074 30L1070 26M1141 25L1145 27M1150 29L1145 27M1152 30L1150 29M68 30L68 35M247 30L246 35M495 32L491 35M497 30L495 32M646 30L649 35M749 30L750 30M755 32L750 30M760 35L755 32M875 30L875 30M880 35L875 30M971 30L973 35M1074 30L1075 32M1077 35L1075 32M1152 30L1155 31M1160 34L1155 31M1161 35L1160 34M68 35L66 40M245 38L245 40M246 35L245 38M490 36L485 40M491 35L490 36M649 35L650 38M651 40L650 38M760 35L760 35M765 38L760 35M767 40L765 38M880 35L880 35M884 40L880 35M973 35L974 40M1077 35L1078 40M1161 35L1165 38M1168 40L1165 38M65 43L64 45M66 40L65 43M245 40L244 45M480 44L479 45M485 40L480 44M485 40L485 40M651 40L651 45M767 40L770 44M771 45L770 44M884 40L885 42M887 45L885 42M974 40L974 45M1078 40L1079 45M1168 40L1170 41M1175 45L1170 41M64 45L60 50M244 45L243 50M475 48L472 50M479 45L475 48M651 45L652 50M771 45L774 50M887 45L890 50M890 50L890 50M974 45L975 48M975 50L975 48M1079 45L1080 49M1080 50L1080 49M1175 45L1175 45M1180 50L1175 45M55 54L54 55M60 50L55 54M60 50L60 50M243 50L243 55M465 54L463 55M470 51L465 54M472 50L470 51M652 50L652 55M774 50L775 54M775 55L775 54M890 50L893 55M975 50L977 55M1080 50L1081 55M1180 50L1180 50M1185 55L1180 50M45 60L45 60M50 58L45 60M54 55L50 58M243 55L245 60M245 60L245 60M450 59L446 60M455 58L450 59M460 56L455 58M463 55L460 56M652 55L652 60M775 55L776 60M893 55L895 57M897 60L895 57M977 55L980 60M1081 55L1082 60M1185 55L1185 55M1189 60L1185 55M35 64L31 65M40 62L35 64M45 60L40 62M245 60L250 63M253 65L250 63M415 64L412 65M420 64L415 64M425 63L420 64M430 62L425 63M435 62L430 62M440 61L435 62M445 60L440 61M446 60L445 60M652 60L653 65M776 60L777 65M897 60L900 63M901 65L900 63M980 60L980 60M985 65L980 60M1082 60L1084 65M1189 60L1190 61M1194 65L1190 61M20 69L16 70M25 67L20 69M30 65L25 67M31 65L30 65M253 65L255 66M260 67L255 66M265 68L260 67M270 69L265 68M274 70L270 69M395 69L393 70M400 68L395 69M405 66L400 68M410 65L405 66M412 65L410 65M653 65L655 70M777 65L778 70M901 65L905 69M906 70L905 69M985 65L985 65M990 68L985 65M993 70L990 68M1084 65L1085 66M1089 70L1085 66M1194 65L1195 66M1199 70L1195 66M5 74L2 75M10 72L5 74M15 70L10 72M16 70L15 70M274 70L275 70M280 71L275 70M285 72L280 71M290 73L285 72M295 74L290 73M300 75L295 74M302 75L300 75M385 74L383 75M390 71L385 74M393 70L390 71M655 70L655 71M659 75L655 71M778 70L780 75M906 70L910 74M911 75L910 74M993 70L995 71M1000 73L995 71M1005 75L1000 73M1005 75L1005 75M1089 70L1090 71M1095 73L1090 71M1098 75L1095 73M1199 70L1200 71M2 75L0 76M110 79L105 80M115 78L110 79M120 78L115 78M125 77L120 78M130 77L125 77M135 76L130 77M140 76L135 76M145 76L140 76M150 76L145 76M155 76L150 76M160 76L155 76M165 77L160 76M170 77L165 77M175 79L170 77M180 80L175 79M302 75L305 76M310 77L305 76M315 78L310 77M320 79L315 78M323 80L320 79M380 77L376 80M383 75L380 77M659 75L660 76M665 79L660 76M667 80L665 79M780 75L780 75M782 80L780 75M911 75L915 79M916 80L915 79M1005 75L1010 77M1015 78L1010 77M1019 80L1015 78M1098 75L1100 76M1105 77L1100 76M1110 79L1105 77M1114 80L1110 79M90 84L87 85M95 82L90 84M100 81L95 82M105 80L100 81M105 80L105 80M180 80L180 80M184 85L180 80M323 80L325 81M330 82L325 81M335 84L330 82M337 85L335 84M375 81L371 85M376 80L375 81M510 84L505 85M515 84L510 84M520 83L515 84M525 83L520 83M530 83L525 83M535 83L530 83M540 83L535 83M545 84L540 83M550 84L545 84M555 85L550 84M556 85L555 85M667 80L670 81M675 83L670 81M680 85L675 83M680 85L680 85M782 80L785 83M786 85L785 83M916 80L919 85M1019 80L1020 80M1025 83L1020 80M1030 85L1025 83M1114 80L1115 80M1120 82L1115 80M1125 83L1120 82M1130 85L1125 83M1131 85L1130 85M75 89L73 90M80 87L75 89M85 86L80 87M87 85L85 86M184 85L182 90M337 85L340 86M345 88L340 86M349 90L345 88M370 86L366 90M371 85L370 86M495 88L490 90M500 86L495 88M505 85L500 86M505 85L505 85M556 85L560 86M565 86L560 86M570 87L565 86M575 89L570 87M579 90L575 89M680 85L685 87M690 88L685 87M695 90L690 88M695 90L695 90M786 85L790 88M792 90L790 88M919 85L920 86M922 90L920 86M1030 85L1030 85M1035 90L1030 85M1131 85L1135 87M1140 89L1135 87M1142 90L1140 89M65 93L60 95M70 91L65 93M73 90L70 91M180 92L177 95M182 90L180 92M349 90L350 90M355 92L350 90M360 92L355 92M365 90L360 92M366 90L365 90M485 92L480 95M490 90L485 92M490 90L490 90M579 90L580 90M585 93L580 90M588 95L585 93M695 90L700 92M705 94L700 92M708 95L705 94M792 90L795 93M797 95L795 93M922 90L923 95M1035 90L1035 90M1037 95L1035 90M1142 90L1145 92M1149 95L1145 92M50 99L46 100M55 97L50 99M60 95L55 97M60 95L60 95M175 96L170 100M177 95L175 96M475 98L470 100M480 95L475 98M480 95L480 95M588 95L590 97M591 100L590 97M708 95L710 96M715 99L710 96M716 100L715 99M797 95L800 98M802 100L800 98M923 95L923 100M1037 95L1037 100M1149 95L1150 96M1153 100L1150 96M35 104L32 105M40 102L35 104M45 100L40 102M46 100L45 100M165 103L162 105M170 100L165 103M170 100L170 100M460 104L457 105M465 102L460 104M470 100L465 102M470 100L470 100M591 100L591 105M716 100L720 104M720 105L720 104M802 100L805 104M806 105L805 104M923 100L922 105M1037 100L1036 105M1153 100L1154 105M25 108L21 110M30 106L25 108M32 105L30 106M155 108L152 110M160 106L155 108M162 105L160 106M440 110L440 110M445 109L440 110M450 107L445 109M455 106L450 107M457 105L455 106M590 107L589 110M591 105L590 107M720 105L722 110M806 105L808 110M920 110L920 110M922 105L920 110M1035 107L1034 110M1036 105L1035 107M1154 105L1155 110M15 114L13 115M20 111L15 114M21 110L20 111M145 113L142 115M150 111L145 113M152 110L150 111M425 114L423 115M430 113L425 114M435 111L430 113M440 110L435 111M585 115L585 115M589 110L585 115M722 110L722 115M808 110L808 115M920 110L917 115M1034 110L1030 115M1155 110L1154 115M10 118L8 120M13 115L10 118M135 118L132 120M140 116L135 118M142 115L140 116M415 119L413 120M420 116L415 119M423 115L420 116M580 120L580 120M585 115L580 120M722 115L721 120M808 115L807 120M915 118L914 120M917 115L915 118M1030 116L1026 120M1030 115L1030 116M1154 115L1153 120M75 4L74 5M80 1L75 4M85 0L80 1M85 0L85 0M255 3L253 5M258 0L255 3M348 0L347 5M425 2L421 5M427 0L425 2M530 3L528 5M534 0L530 3M630 0L625 5M689 0L690 1M695 4L690 1M696 5L695 4M788 0L790 1M795 4L790 1M798 5L795 4M892 0L895 1M900 3L895 1M905 5L900 3M975 0L980 5M1092 0L1095 1M1100 4L1095 1M1101 5L1100 4M74 5L72 10M250 7L246 10M253 5L250 7M347 5L349 10M415 9L413 10M420 5L415 9M421 5L420 5M525 8L523 10M528 5L525 8M625 9L625 10M625 5L625 9M696 5L700 7M704 10L700 7M798 5L800 6M805 9L800 6M808 10L805 9M905 5L905 5M910 7L905 5M915 8L910 7M920 9L915 8M925 10L920 9M927 10L925 10M980 5L980 6M985 9L980 6M987 10L985 9M1101 5L1105 7M1110 9L1105 7M1112 10L1110 9M72 10L72 15M245 11L241 15M246 10L245 11M349 10L350 11M354 15L350 11M405 14L404 15M410 12L405 14M413 10L410 12M520 14L519 15M523 10L520 14M625 10L625 10M627 15L625 10M704 10L705 11M710 13L705 11M714 15L710 13M808 10L810 11M815 13L810 11M820 14L815 13M822 15L820 14M927 10L930 11M935 11L930 11M940 12L935 11M945 12L940 12M950 13L945 12M955 14L950 13M960 15L955 14M962 15L960 15M987 10L990 11M995 12L990 11M1000 13L995 12M1005 14L1000 13M1010 15L1005 14M1013 15L1010 15M1112 10L1115 11M1120 13L1115 11M1124 15L1120 13M72 15L72 20M240 16L238 20M241 15L240 16M354 15L355 15M360 17L355 15M365 19L360 17M370 20L365 19M371 20L370 20M390 19L386 20M395 18L390 19M400 17L395 18M404 15L400 17M515 20L515 20M519 15L515 20M627 15L630 20M630 20L630 20M714 15L715 16M720 18L715 16M725 19L720 18M727 20L725 19M822 15L825 16M830 17L825 16M835 19L830 17M840 20L835 19M840 20L840 20M962 15L965 16M970 17L965 16M974 20L970 17M1013 15L1015 15M1020 16L1015 15M1025 16L1020 16M1030 17L1025 16M1035 18L1030 17M1040 19L1035 18M1045 20L1040 19M1124 15L1125 15M1130 17L1125 15M1135 19L1130 17M1137 20L1135 19M72 20L73 25M238 20L237 25M371 20L375 20M380 20L375 20M385 20L380 20M386 20L385 20M515 20L510 25M630 20L635 25M727 20L730 21M735 23L730 21M740 24L735 23M743 25L740 24M840 20L845 21M850 23L845 21M855 24L850 23M857 25L855 24M974 20L975 22M977 25L975 22M1045 20L1045 20M1050 21L1045 20M1055 23L1050 21M1059 25L1055 23M1137 20L1140 21M1145 24L1140 21M1148 25L1145 24M73 25L73 30M237 25L236 30M510 25L506 30M510 25L510 25M635 25L635 25M639 30L635 25M743 25L745 26M750 27L745 26M755 29L750 27M757 30L755 29M857 25L860 26M865 29L860 26M867 30L865 29M977 25L978 30M1059 25L1060 25M1065 28L1060 25M1067 30L1065 28M1148 25L1150 26M1155 28L1150 26M1158 30L1155 28M73 30L73 35M236 30L236 35M505 31L501 35M506 30L505 31M639 30L640 32M642 35L640 32M757 30L760 31M765 34L760 31M767 35L765 34M867 30L870 32M874 35L870 32M978 30L978 35M1067 30L1070 33M1071 35L1070 33M1158 30L1160 31M1165 34L1160 31M1166 35L1165 34M73 35L72 40M236 35L236 40M500 36L496 40M501 35L500 36M642 35L645 40M767 35L770 38M772 40L770 38M874 35L875 36M879 40L875 36M978 35L978 40M1071 35L1074 40M1166 35L1170 38M1173 40L1170 38M70 45L70 45M72 40L70 45M235 43L235 45M236 40L235 43M495 41L491 45M496 40L495 41M645 40L645 41M646 45L645 41M772 40L775 44M776 45L775 44M879 40L880 42M882 45L880 42M978 40L979 45M1074 40L1075 44M1075 45L1075 44M1173 40L1175 42M1179 45L1175 42M70 45L67 50M235 45L233 50M490 46L486 50M491 45L490 46M646 45L647 50M776 45L778 50M882 45L885 49M886 50L885 49M979 45L980 50M1075 45L1076 50M1179 45L1180 46M1184 50L1180 46M65 53L63 55M67 50L65 53M233 50L232 55M485 52L482 55M486 50L485 52M647 50L647 55M778 50L779 55M886 50L889 55M980 50L980 51M981 55L980 51M1076 50L1077 55M1184 50L1185 51M1189 55L1185 51M60 57L56 60M63 55L60 57M232 55L232 60M480 57L477 60M482 55L480 57M647 55L647 60M779 55L780 60M889 55L890 56M893 60L890 56M981 55L984 60M1077 55L1078 60M1189 55L1190 56M1194 60L1190 56M50 63L46 65M55 61L50 63M56 60L55 61M232 60L234 65M470 65L469 65M475 62L470 65M477 60L475 62M647 60L647 65M780 60L780 61M781 65L780 61M893 60L895 62M897 65L895 62M984 60L985 61M990 65L985 61M1078 60L1080 65M1194 60L1195 61M1199 65L1195 61M35 69L32 70M40 67L35 69M45 65L40 67M46 65L45 65M234 65L235 65M240 68L235 65M245 69L240 68M248 70L245 69M445 70L444 70M450 69L445 70M455 69L450 69M460 68L455 69M465 67L460 68M469 65L465 67M647 65L649 70M781 65L782 70M897 65L900 68M902 70L900 68M990 65L990 65M995 68L990 65M999 70L995 68M1080 65L1080 66M1083 70L1080 66M1199 65L1200 66M20 74L18 75M25 72L20 74M30 71L25 72M32 70L30 71M120 75L118 75M125 74L120 75M130 74L125 74M135 74L130 74M140 73L135 74M145 73L140 73M150 73L145 73M155 73L150 73M160 73L155 73M165 73L160 73M170 73L165 73M175 74L170 73M180 74L175 74M185 75L180 74M185 75L185 75M248 70L250 70M255 71L250 70M260 72L255 71M265 73L260 72M270 74L265 73M275 74L270 74M278 75L275 74M420 74L416 75M425 73L420 74M430 72L425 73M435 71L430 72M440 71L435 71M444 70L440 71M649 70L650 72M652 75L650 72M782 70L784 75M902 70L905 73M907 75L905 73M999 70L1000 71M1005 73L1000 71M1010 74L1005 73M1011 75L1010 74M1083 70L1085 71M1090 74L1085 71M1091 75L1090 74M10 79L8 80M15 76L10 79M18 75L15 76M95 79L90 80M100 78L95 79M105 77L100 78M110 76L105 77M115 75L110 76M118 75L115 75M185 75L190 77M194 80L190 77M278 75L280 75M285 76L280 75M290 77L285 76M295 78L290 77M300 80L295 78M301 80L300 80M410 78L405 80M415 75L410 78M416 75L415 75M495 80L493 80M500 79L495 80M505 79L500 79M510 78L505 79M515 79L510 78M520 79L515 79M525 79L520 79M530 79L525 79M535 80L530 79M539 80L535 80M652 75L655 77M660 80L655 77M784 75L785 77M787 80L785 77M907 75L910 78M912 80L910 78M1011 75L1015 76M1020 78L1015 76M1025 80L1020 78M1025 80L1025 80M1091 75L1095 76M1100 78L1095 76M1105 80L1100 78M1106 80L1105 80M5 82L1 85M8 80L5 82M80 83L75 85M85 81L80 83M90 80L85 81M90 80L90 80M194 80L193 85M301 80L305 81M310 83L305 81M315 85L310 83M405 80L401 85M405 80L405 80M485 82L480 85M490 81L485 82M493 80L490 81M539 80L540 80M545 81L540 80M550 81L545 81M555 82L550 81M560 82L555 82M565 83L560 82M570 84L565 83M575 85L570 84M660 80L660 80M665 82L660 80M670 84L665 82M673 85L670 84M787 80L790 84M791 85L790 84M912 80L915 84M916 85L915 84M1025 80L1030 82M1035 85L1030 82M1106 80L1110 81M1115 82L1110 81M1120 84L1115 82M1124 85L1120 84M1 85L0 86M65 89L63 90M70 87L65 89M75 85L70 87M75 85L75 85M190 89L189 90M193 85L190 89M315 85L315 85M320 88L315 85M323 90L320 88M400 89L400 90M401 85L400 89M475 88L472 90M480 85L475 88M480 85L480 85M575 85L575 85M580 86L575 85M585 88L580 86M590 90L585 88M590 90L590 90M673 85L675 86M680 87L675 86M685 89L680 87M688 90L685 89M791 85L795 89M796 90L795 89M916 85L918 90M1035 85L1035 85M1039 90L1035 85M1124 85L1125 85M1130 87L1125 85M1135 89L1130 87M1137 90L1135 89M50 95L49 95M55 93L50 95M60 91L55 93M63 90L60 91M185 94L184 95M189 90L185 94M323 90L325 92M328 95L325 92M400 90L400 92M401 95L400 92M465 94L462 95M470 91L465 94M472 90L470 91M590 90L595 93M597 95L595 93M688 90L690 91M695 92L690 91M700 94L695 92M702 95L700 94M796 90L800 93M802 95L800 93M918 90L919 95M1039 90L1040 92M1041 95L1040 92M1137 90L1140 92M1144 95L1140 92M35 100L34 100M40 98L35 100M45 96L40 98M49 95L45 96M180 98L177 100M184 95L180 98M328 95L330 98M332 100L330 98M401 95L405 100M450 100L448 100M455 98L450 100M460 96L455 98M462 95L460 96M597 95L598 100M702 95L705 97M710 100L705 97M711 100L710 100M802 95L805 98M807 100L805 98M919 95L919 100M1041 95L1040 100M1144 95L1145 96M1148 100L1145 96M25 103L20 105M30 101L25 103M34 100L30 101M170 104L168 105M175 101L170 104M177 100L175 101M332 100L335 103M338 105L335 103M405 100L405 100M410 102L405 100M415 103L410 102M420 103L415 103M425 103L420 103M430 103L425 103M435 103L430 103M440 102L435 103M445 101L440 102M448 100L445 101M598 100L597 105M711 100L715 104M715 105L715 104M807 100L810 105M810 105L810 105M919 100L919 105M1040 101L1039 105M1040 100L1040 101M1148 100L1150 105M1150 105L1150 105M15 107L10 110M20 105L15 107M20 105L20 105M160 109L158 110M165 106L160 109M168 105L165 106M338 105L340 107M345 109L340 107M349 110L345 109M595 109L595 110M597 105L595 109M715 105L718 110M810 105L812 110M919 105L917 110M1039 105L1036 110M1150 105L1150 110M5 114L4 115M10 110L5 114M10 110L10 110M150 114L147 115M155 111L150 114M158 110L155 111M349 110L350 110M355 112L350 110M360 113L355 112M365 114L360 113M370 115L365 114M371 115L370 115M595 110L591 115M718 110L718 115M812 110L813 115M915 113L914 115M917 110L915 113M1035 112L1033 115M1036 110L1035 112M1150 114L1150 115M1150 110L1150 114M4 115L0 120M140 119L138 120M145 116L140 119M147 115L145 116M371 115L375 116M380 119L375 116M381 120L380 119M590 116L586 120M591 115L590 116M718 115L716 120M813 115L812 120M914 115L910 120M1030 119L1030 120M1033 115L1030 119M1150 115L1148 120M90 4L85 5M95 2L90 4M100 2L95 2M105 1L100 2M110 1L105 1M115 0L110 1M120 0L115 0M121 0L120 0M240 5L240 5M245 1L240 5M247 0L245 1M359 0L360 4M360 5L360 4M410 5L410 5M415 2L410 5M418 0L415 2M540 1L535 5M541 0L540 1M619 0L617 5M699 0L700 0M705 5L700 0M706 5L705 5M780 0L780 0M785 3L780 0M790 5L785 3M902 0L905 1M910 3L905 1M915 4L910 3M919 5L915 4M964 0L963 5M1102 0L1105 1M1110 4L1105 1M1111 5L1110 4M80 9L79 10M85 5L80 9M85 5L85 5M235 8L232 10M240 5L235 8M360 5L365 9M366 10L365 9M400 9L398 10M405 7L400 9M410 5L405 7M535 5L530 10M535 5L535 5M617 5L617 10M706 5L710 8M713 10L710 8M790 5L790 5M795 8L790 5M799 10L795 8M919 5L920 5M925 6L920 5M930 7L925 6M935 7L930 7M940 8L935 7M945 8L940 8M950 8L945 8M955 8L950 8M960 6L955 8M963 5L960 6M1111 5L1115 7M1120 9L1115 7M1121 10L1120 9M79 10L78 15M230 12L227 15M232 10L230 12M366 10L370 11M375 12L370 11M380 13L375 12M385 13L380 13M390 12L385 13M395 11L390 12M398 10L395 11M530 11L526 15M530 10L530 11M617 10L619 15M713 10L715 11M720 14L715 11M723 15L720 14M799 10L800 10M805 13L800 10M810 15L805 13M811 15L810 15M1121 10L1125 12M1130 14L1125 12M1132 15L1130 14M78 15L78 20M227 15L226 20M525 16L522 20M526 15L525 16M619 15L620 16M623 20L620 16M723 15L725 16M730 18L725 16M735 19L730 18M737 20L735 19M811 15L815 16M820 18L815 16M825 19L820 18M828 20L825 19M995 20L993 20M1000 19L995 20M1005 19L1000 19M1010 19L1005 19M1015 19L1010 19M1020 19L1015 19M1025 20L1020 19M1026 20L1025 20M1132 15L1135 16M1140 18L1135 16M1144 20L1140 18M78 20L78 25M226 20L226 25M520 22L518 25M522 20L520 22M623 20L625 23M627 25L625 23M737 20L740 21M745 22L740 21M750 24L745 22M753 25L750 24M828 20L830 21M835 22L830 21M840 23L835 22M845 24L840 23M847 25L845 24M990 21L987 25M993 20L990 21M1026 20L1030 20M1035 21L1030 20M1040 22L1035 21M1045 24L1040 22M1050 25L1045 24M1144 20L1145 21M1150 23L1145 21M1154 25L1150 23M78 25L78 30M226 25L227 30M515 28L514 30M518 25L515 28M627 25L630 28M632 30L630 28M753 25L755 26M760 27L755 26M765 30L760 27M766 30L765 30M847 25L850 26M855 28L850 26M860 30L855 28M985 29L985 30M987 25L985 29M1050 25L1050 25M1055 27L1050 25M1060 30L1055 27M1060 30L1060 30M1154 25L1155 25M1160 28L1155 25M1163 30L1160 28M78 30L78 35M227 30L227 35M510 34L509 35M514 30L510 34M632 30L635 34M636 35L635 34M766 30L770 33M773 35L770 33M860 30L860 30M865 33L860 30M868 35L865 33M985 30L984 35M1060 30L1065 34M1066 35L1065 34M1163 30L1165 31M1170 34L1165 31M1171 35L1170 34M78 35L77 40M227 35L227 40M509 35L505 40M636 35L639 40M773 35L775 37M777 40L775 37M868 35L870 37M874 40L870 37M984 35L983 40M1066 35L1069 40M1171 35L1175 38M1178 40L1175 38M77 40L76 45M227 40L226 45M505 40L501 45M505 40L505 40M639 40L640 43M641 45L640 43M777 40L780 45M780 45L780 45M874 40L875 41M878 45L875 41M983 40L983 45M1069 40L1070 42M1071 45L1070 42M1178 40L1180 42M1183 45L1180 42M75 47L74 50M76 45L75 47M225 49L224 50M226 45L225 49M500 47L498 50M501 45L500 47M641 45L641 50M780 45L782 50M878 45L880 48M882 50L880 48M983 45L984 50M1071 45L1072 50M1183 45L1185 46M1189 50L1185 46M74 50L71 55M224 50L222 55M498 50L496 55M641 50L642 55M782 50L783 55M882 50L885 54M885 55L885 54M984 50L985 53M986 55L985 53M1072 50L1073 55M1189 50L1190 51M1194 55L1190 51M70 56L67 60M71 55L70 56M220 58L219 60M222 55L220 58M495 58L495 60M496 55L495 58M642 55L642 60M783 55L783 60M885 55L889 60M986 55L989 60M1073 55L1074 60M1194 55L1195 56M1199 60L1195 56M65 62L60 65M67 60L65 62M215 64L214 65M219 60L215 64M495 60L495 63M496 65L495 63M642 60L642 65M783 60L784 65M889 60L890 61M893 65L890 61M989 60L990 61M995 65L990 61M1074 60L1075 65M1199 60L1200 61M50 70L50 70M55 68L50 70M60 65L55 68M60 65L60 65M175 70L170 70M180 70L175 70M185 70L180 70M190 70L185 70M195 70L190 70M200 69L195 70M205 69L200 69M210 68L205 69M214 65L210 68M496 65L500 69M503 70L500 69M642 65L643 70M784 65L785 68M785 70L785 68M893 65L895 67M898 70L895 67M995 65L995 65M1000 68L995 65M1004 70L1000 68M1075 65L1075 66M1077 70L1075 66M40 74L36 75M45 72L40 74M50 70L45 72M95 75L93 75M100 74L95 75M105 73L100 74M110 73L105 73M115 72L110 73M120 72L115 72M125 71L120 72M130 71L125 71M135 71L130 71M140 71L135 71M145 71L140 71M150 70L145 71M155 70L150 70M160 70L155 70M165 70L160 70M170 70L165 70M170 70L170 70M220 75L219 75M225 74L220 75M230 74L225 74M235 74L230 74M240 74L235 74M245 75L240 74M248 75L245 75M503 70L505 71M510 72L505 71M515 73L510 72M520 74L515 73M525 75L520 74M528 75L525 75M643 70L645 75M785 70L787 75M898 70L900 72M903 75L900 72M1004 70L1005 70M1010 72L1005 70M1015 74L1010 72M1018 75L1015 74M1077 70L1080 72M1084 75L1080 72M25 80L24 80M30 78L25 80M35 75L30 78M36 75L35 75M75 79L74 80M80 78L75 79M85 77L80 78M90 76L85 77M93 75L90 76M210 79L209 80M215 76L210 79M219 75L215 76M248 75L250 75M255 76L250 75M260 76L255 76M265 77L260 76M270 78L265 77M275 78L270 78M280 79L275 78M283 80L280 79M528 75L530 75M535 76L530 75M540 77L535 76M545 77L540 77M550 78L545 77M555 79L550 78M560 79L555 79M564 80L560 79M645 75L645 75M650 79L645 75M651 80L650 79M787 75L790 79M791 80L790 79M903 75L905 77M908 80L905 77M1018 75L1020 76M1025 77L1020 76M1030 79L1025 77M1032 80L1030 79M1084 75L1085 75M1090 77L1085 75M1095 79L1090 77M1098 80L1095 79M20 83L16 85M24 80L20 83M65 83L61 85M70 81L65 83M74 80L70 81M205 83L203 85M209 80L205 83M283 80L285 81M290 82L285 81M295 83L290 82M299 85L295 83M564 80L565 80M570 81L565 80M575 82L570 81M580 83L575 82M585 84L580 83M589 85L585 84M651 80L655 82M660 84L655 82M664 85L660 84M791 80L795 85M795 85L795 85M908 80L910 83M912 85L910 83M1032 80L1035 81M1040 84L1035 81M1041 85L1040 84M1098 80L1100 80M1105 82L1100 80M1110 83L1105 82M1115 84L1110 83M1117 85L1115 84M15 86L11 90M16 85L15 86M50 89L48 90M55 87L50 89M60 85L55 87M61 85L60 85M200 88L197 90M203 85L200 88M299 85L300 85M305 88L300 85M308 90L305 88M589 85L590 85M595 87L590 85M600 89L595 87M601 90L600 89M664 85L665 85M670 87L665 85M675 88L670 87M680 90L675 88M681 90L680 90M795 85L800 90M800 90L800 90M912 85L915 90M1041 85L1044 90M1117 85L1120 86M1125 88L1120 86M1130 90L1125 88M1131 90L1130 90M10 93L9 95M11 90L10 93M35 94L32 95M40 92L35 94M45 91L40 92M48 90L45 91M195 92L191 95M197 90L195 92M308 90L310 92M313 95L310 92M601 90L605 95M681 90L685 91M690 93L685 91M695 95L690 93M695 95L695 95M800 90L805 94M806 95L805 94M915 90L915 91M916 95L915 91M1044 90L1044 95M1131 90L1135 92M1139 95L1135 92M9 95L10 96M15 98L10 96M20 97L15 98M25 96L20 97M30 95L25 96M32 95L30 95M185 99L183 100M190 96L185 99M191 95L190 96M313 95L315 98M316 100L315 98M605 95L605 100M695 95L700 97M705 100L700 97M705 100L705 100M806 95L810 99M811 100L810 99M916 95L916 100M1044 95L1043 100M1139 95L1140 96M1144 100L1140 96M175 105L174 105M180 102L175 105M183 100L180 102M316 100L317 105M605 100L603 105M705 100L710 104M711 105L710 104M811 100L814 105M916 100L916 105M1043 100L1042 105M1144 100L1145 102M1146 105L1145 102M165 110L164 110M170 107L165 110M174 105L170 107M317 105L318 110M603 105L600 110M711 105L713 110M814 105L815 107M816 110L815 107M915 107L914 110M916 105L915 107M1040 109L1039 110M1042 105L1040 109M1146 105L1147 110M155 114L153 115M160 112L155 114M164 110L160 112M318 110L320 115M600 110L596 115M600 110L600 110M713 110L713 115M816 110L817 115M914 110L911 115M1039 110L1036 115M1147 110L1146 115M145 119L143 120M150 117L145 119M153 115L150 117M320 115L320 116M323 120L320 116M595 116L592 120M596 115L595 116M713 115L711 120M817 115L816 120M910 116L906 120M911 115L910 116M1035 117L1033 120M1036 115L1035 117M1145 117L1143 120M1146 115L1145 117M105 4L101 5M110 4L105 4M115 3L110 4M120 3L115 3M125 3L120 3M130 2L125 3M135 2L130 2M140 2L135 2M145 1L140 2M150 1L145 1M154 0L150 1M225 5L224 5M230 2L225 5M235 0L230 2M372 0L375 3M380 4L375 3M385 5L380 4M390 5L385 5M395 4L390 5M400 3L395 4M405 1L400 3M407 0L405 1M545 4L543 5M550 0L545 4M608 0L608 5M710 0L715 5M771 0L775 2M780 5L775 2M781 5L780 5M915 0L920 1M925 2L920 1M930 2L925 2M935 3L930 2M940 2L935 3M945 2L940 2M950 0L945 2M1113 0L1115 1M1120 5L1115 1M1121 5L1120 5M90 9L88 10M95 7L90 9M100 5L95 7M101 5L100 5M220 7L215 10M224 5L220 7M540 8L538 10M543 5L540 8M608 5L609 10M715 5L715 5M720 9L715 5M722 10L720 9M781 5L785 8M790 10L785 8M1121 5L1125 7M1130 10L1125 7M85 14L84 15M88 10L85 14M215 11L213 15M215 10L215 11M535 13L533 15M538 10L535 13M609 10L610 12M611 15L610 12M722 10L725 11M730 14L725 11M733 15L730 14M790 10L790 10M795 13L790 10M799 15L795 13M1130 10L1130 10M1135 12L1130 10M1140 15L1135 12M1140 15L1140 15M84 15L83 20M213 15L214 20M530 19L529 20M533 15L530 19M611 15L615 20M615 20L615 20M733 15L735 16M740 17L735 16M745 19L740 17M749 20L745 19M799 15L800 15M805 17L800 15M810 19L805 17M814 20L810 19M1140 15L1145 17M1150 20L1145 17M1151 20L1150 20M83 20L83 25M214 20L215 23M216 25L215 23M529 20L525 25M615 20L620 25M749 20L750 20M755 22L750 20M760 23L755 22M765 25L760 23M814 20L815 20M820 21L815 20M825 23L820 21M830 24L825 23M835 25L830 24M835 25L835 25M1000 25L999 25M1005 23L1000 25M1010 23L1005 23M1015 23L1010 23M1020 23L1015 23M1025 23L1020 23M1030 24L1025 23M1035 24L1030 24M1037 25L1035 24M1151 20L1155 22M1160 25L1155 22M1160 25L1160 25M83 25L83 30M216 25L218 30M525 26L521 30M525 25L525 26M620 25L620 25M625 30L620 25M765 25L765 25M770 27L765 25M775 30L770 27M835 25L840 26M845 28L840 26M850 29L845 28M852 30L850 29M995 27L992 30M999 25L995 27M1037 25L1040 26M1045 27L1040 26M1050 29L1045 27M1052 30L1050 29M1160 25L1165 28M1169 30L1165 28M83 30L83 35M218 30L219 35M520 32L517 35M521 30L520 32M625 30L625 30M629 35L625 30M775 30L775 30M780 35L775 30M852 30L855 31M860 34L855 31M862 35L860 34M990 34L990 35M992 30L990 34M1052 30L1055 31M1060 35L1055 31M1169 30L1170 31M1175 34L1170 31M1176 35L1175 34M83 35L82 40M219 35L219 40M515 38L514 40M517 35L515 38M629 35L630 36M633 40L630 36M780 35L780 35M783 40L780 35M862 35L865 37M869 40L865 37M990 35L988 40M1060 35L1060 35M1064 40L1060 35M1176 35L1180 38M1182 40L1180 38M82 40L82 45M219 40L218 45M514 40L510 45M633 40L635 45M783 40L785 45M869 40L870 41M874 45L870 41M988 40L988 45M1064 40L1065 42M1067 45L1065 42M1182 40L1185 42M1188 45L1185 42M82 45L81 50M218 45L216 50M510 46L508 50M510 45L510 46M635 45L635 46M636 50L635 46M785 45L785 47M786 50L785 47M874 45L875 47M878 50L875 47M988 45L988 50M1067 45L1068 50M1188 45L1190 47M1193 50L1190 47M80 53L79 55M81 50L80 53M215 51L212 55M216 50L215 51M508 50L507 55M636 50L636 55M786 50L786 55M878 50L880 53M881 55L880 53M988 50L990 55M1068 50L1069 55M1193 50L1195 52M1199 55L1195 52M79 55L78 60M210 57L205 60M212 55L210 57M507 55L508 60M636 55L636 60M786 55L787 60M881 55L885 60M885 60L885 60M990 55L990 55M994 60L990 55M1069 55L1069 60M1199 55L1200 56M78 60L77 65M190 65L189 65M195 64L190 65M200 62L195 64M205 60L200 62M205 60L205 60M508 60L510 62M513 65L510 62M636 60L636 65M787 60L788 65M885 60L889 65M994 60L995 61M1000 65L995 61M1069 60L1070 65M77 65L80 68M85 69L80 68M90 70L85 69M95 70L90 70M100 70L95 70M105 69L100 70M110 69L105 69M115 69L110 69M120 69L115 69M125 69L120 69M130 68L125 69M135 68L130 68M140 68L135 68M145 68L140 68M150 68L145 68M155 67L150 68M160 67L155 67M165 67L160 67M170 67L165 67M175 66L170 67M180 66L175 66M185 66L180 66M189 65L185 66M513 65L515 66M520 68L515 66M525 70L520 68M526 70L525 70M636 65L636 70M788 65L789 70M889 65L890 66M894 70L890 66M1000 65L1000 65M1005 67L1000 65M1010 70L1005 67M1011 70L1010 70M1070 65L1070 67M1071 70L1070 67M526 70L530 71M535 72L530 71M540 73L535 72M545 74L540 73M550 75L545 74M552 75L550 75M636 70L636 75M789 70L790 72M791 75L790 72M894 70L895 71M899 75L895 71M1011 70L1015 71M1020 73L1015 71M1025 75L1020 73M1026 75L1025 75M1071 70L1075 74M1076 75L1075 74M235 80L232 80M240 79L235 80M245 79L240 79M250 79L245 79M255 80L250 79M258 80L255 80M552 75L555 76M560 76L555 76M565 77L560 76M570 78L565 77M575 79L570 78M580 79L575 79M583 80L580 79M636 75L640 80M640 80L640 80M791 75L795 80M899 75L900 76M904 80L900 76M1026 75L1030 76M1035 78L1030 76M1040 80L1035 78M1041 80L1040 80M1076 75L1080 77M1085 79L1080 77M1089 80L1085 79M215 85L215 85M220 83L215 85M225 81L220 83M230 80L225 81M232 80L230 80M258 80L260 80M265 81L260 80M270 82L265 81M275 83L270 82M280 84L275 83M285 85L280 84M583 80L585 80M590 81L585 80M595 82L590 81M600 84L595 82M605 85L600 84M640 80L645 82M650 84L645 82M652 85L650 84M795 80L795 80M799 85L795 80M904 80L905 81M908 85L905 81M1041 80L1045 83M1047 85L1045 83M1089 80L1090 80M1095 81L1090 80M1100 83L1095 81M1105 84L1100 83M1109 85L1105 84M210 87L206 90M215 85L210 87M285 85L285 85M290 87L285 85M295 90L290 87M296 90L295 90M605 85L605 85M610 88L605 85M612 90L610 88M652 85L655 86M660 87L655 86M665 88L660 87M670 89L665 88M672 90L670 89M799 85L800 86M805 90L800 86M908 85L910 88M911 90L910 88M1047 85L1049 90M1109 85L1110 85M1115 87L1110 85M1120 88L1115 87M1125 90L1120 88M1125 90L1125 90M200 94L198 95M205 91L200 94M206 90L205 91M296 90L300 94M301 95L300 94M612 90L613 95M672 90L675 91M680 92L675 91M685 94L680 92M689 95L685 94M805 90L805 90M810 95L805 90M810 95L810 95M911 90L913 95M1049 90L1048 95M1125 90L1130 92M1135 95L1130 92M195 97L190 100M198 95L195 97M301 95L303 100M613 95L612 100M689 95L690 96M695 98L690 96M700 100L695 98M810 95L815 100M913 95L913 100M1048 95L1047 100M1135 95L1135 95M1140 100L1135 95M185 103L181 105M190 100L185 103M190 100L190 100M303 100L303 105M610 103L609 105M612 100L610 103M700 100L700 100M705 104L700 100M706 105L705 104M815 100L815 100M818 105L815 100M913 100L913 105M1045 104L1045 105M1047 100L1045 104M1140 100L1140 100M1142 105L1140 100M175 108L171 110M180 106L175 108M181 105L180 106M303 105L301 110M609 105L606 110M706 105L708 110M818 105L820 109M820 110L820 109M913 105L911 110M1045 105L1042 110M1142 105L1143 110M160 115L160 115M165 113L160 115M170 110L165 113M171 110L170 110M295 115L294 115M300 111L295 115M301 110L300 111M605 111L602 115M606 110L605 111M708 110L708 115M820 110L821 115M910 111L907 115M911 110L910 111M1040 114L1039 115M1042 110L1040 114M1143 110L1142 115M150 120L149 120M155 117L150 120M160 115L155 117M285 119L282 120M290 117L285 119M294 115L290 117M600 117L597 120M602 115L600 117M708 115L706 120M821 115L821 120M905 117L902 120M907 115L905 117M1039 115L1036 120M1140 118L1139 120M1142 115L1140 118M145 5L141 5M150 5L145 5M155 5L150 5M160 4L155 5M165 4L160 4M170 4L165 4M175 3L170 4M180 2L175 3M183 0L180 2M195 5L194 5M200 4L195 5M205 3L200 4M210 2L205 3M215 0L210 2M216 0L215 0M555 3L553 5M560 0L555 3M561 0L560 0M596 0L597 5M723 0L725 4M725 5L725 4M760 0L760 0M765 2L760 0M770 5L765 2M771 5L770 5M1123 0L1125 1M1130 5L1125 1M100 9L98 10M105 8L100 9M110 7L105 8M115 7L110 7M120 6L115 7M125 6L120 6M130 5L125 6M135 5L130 5M140 5L135 5M141 5L140 5M194 5L195 10M550 7L546 10M553 5L550 7M597 5L600 10M725 5L730 8M733 10L730 8M771 5L775 8M778 10L775 8M1130 5L1130 5M1135 8L1130 5M1138 10L1135 8M95 12L91 15M98 10L95 12M195 10L195 10M198 15L195 10M545 11L541 15M546 10L545 11M600 10L600 10M603 15L600 10M733 10L735 11M740 13L735 11M745 14L740 13M747 15L745 14M778 10L780 12M785 15L780 12M1138 10L1140 11M1145 13L1140 11M1148 15L1145 13M90 18L89 20M91 15L90 18M198 15L200 17M202 20L200 17M540 17L537 20M541 15L540 17M603 15L605 17M607 20L605 17M747 15L750 16M755 17L750 16M760 18L755 17M765 20L760 18M766 20L765 20M785 15L785 15M790 18L785 15M795 20L790 18M795 20L795 20M1148 15L1150 16M1155 19L1150 16M1157 20L1155 19M89 20L88 25M202 20L205 24M206 25L205 24M535 23L533 25M537 20L535 23M607 20L610 23M612 25L610 23M766 20L770 21M775 22L770 21M780 25L775 22M795 20L800 21M805 22L800 21M810 23L805 22M815 24L810 23M820 25L815 24M1157 20L1160 21M1165 24L1160 21M1166 25L1165 24M88 25L88 30M206 25L209 30M530 29L529 30M533 25L530 29M612 25L615 28M617 30L615 28M780 25L780 25M785 30L780 25M820 25L820 25M825 26L820 25M830 27L825 26M835 28L830 27M840 29L835 28M842 30L840 29M1005 28L1001 30M1010 27L1005 28M1015 26L1010 27M1020 26L1015 26M1025 26L1020 26M1030 27L1025 26M1035 28L1030 27M1040 29L1035 28M1043 30L1040 29M1166 25L1170 27M1174 30L1170 27M88 30L88 35M209 30L210 33M211 35L210 33M529 30L526 35M617 30L620 33M622 35L620 33M785 30L785 30M787 35L785 30M842 30L845 31M850 33L845 31M855 35L850 33M855 35L855 35M1000 31L996 35M1001 30L1000 31M1043 30L1045 31M1050 33L1045 31M1054 35L1050 33M1174 30L1175 31M1180 34L1175 31M1181 35L1180 34M88 35L88 40M211 35L211 40M525 36L522 40M526 35L525 36M622 35L625 39M626 40L625 39M787 35L789 40M855 35L860 38M863 40L860 38M995 36L993 40M996 35L995 36M1054 35L1055 36M1059 40L1055 36M1181 35L1185 38M1187 40L1185 38M88 40L88 45M210 44L210 45M211 40L210 44M520 44L519 45M522 40L520 44M626 40L629 45M789 40L789 45M863 40L865 41M869 45L865 41M993 40L992 45M1059 40L1060 41M1062 45L1060 41M1187 40L1190 42M1193 45L1190 42M88 45L88 50M210 45L207 50M519 45L518 50M629 45L630 49M630 50L630 49M789 45L790 50M869 45L870 46M873 50L870 46M992 45L993 50M1062 45L1064 50M1193 45L1195 47M1198 50L1195 47M88 50L88 55M205 52L201 55M207 50L205 52M518 50L518 55M630 50L631 55M790 50L790 54M790 55L790 54M873 50L875 52M878 55L875 52M993 50L995 55M1064 50L1064 55M1198 50L1200 52M88 55L90 59M91 60L90 59M195 58L190 60M200 56L195 58M201 55L200 56M518 55L520 59M521 60L520 59M631 55L630 60M790 55L790 60M878 55L880 58M881 60L880 58M995 55L995 56M998 60L995 56M1064 55L1064 60M91 60L95 63M100 64L95 63M105 65L100 64M106 65L105 65M150 65L148 65M155 65L150 65M160 64L155 65M165 64L160 64M170 64L165 64M175 63L170 64M180 62L175 63M185 61L180 62M190 60L185 61M190 60L190 60M521 60L525 63M528 65L525 63M630 61L629 65M630 60L630 61M790 60L791 65M881 60L885 64M886 65L885 64M998 60L1000 61M1005 65L1000 61M1006 65L1005 65M1064 60L1064 65M106 65L110 65M115 65L110 65M120 66L115 65M125 66L120 66M130 65L125 66M135 65L130 65M140 65L135 65M145 65L140 65M148 65L145 65M528 65L530 66M535 67L530 66M540 69L535 67M544 70L540 69M629 65L627 70M791 65L793 70M886 65L890 70M890 70L890 70M1006 65L1010 67M1015 69L1010 67M1018 70L1015 69M1064 65L1063 70M544 70L545 70M550 71L545 70M555 72L550 71M560 73L555 72M565 74L560 73M570 75L565 74M572 75L570 75M625 75L625 75M627 70L625 75M793 70L795 75M890 70L895 75M1018 70L1020 71M1025 72L1020 71M1030 73L1025 72M1035 74L1030 73M1037 75L1035 74M1063 70L1064 75M572 75L575 75M580 76L575 75M585 77L580 76M590 77L585 77M595 78L590 77M600 79L595 78M605 79L600 79M610 79L605 79M615 80L610 79M620 79L615 80M625 75L620 79M795 75L795 75M799 80L795 75M895 75L895 75M900 80L895 75M1037 75L1040 76M1045 77L1040 76M1050 79L1045 77M1053 80L1050 79M1064 75L1065 76M1070 78L1065 76M1075 80L1070 78M1076 80L1075 80M235 84L231 85M240 84L235 84M245 83L240 84M250 83L245 83M255 84L250 83M260 84L255 84M265 85L260 84M266 85L265 85M799 80L800 82M803 85L800 82M900 80L900 80M904 85L900 80M1053 80L1055 85M1076 80L1080 81M1085 82L1080 81M1090 83L1085 82M1095 84L1090 83M1100 85L1095 84M1101 85L1100 85M220 88L216 90M225 86L220 88M230 85L225 86M231 85L230 85M266 85L270 86M275 87L270 86M280 89L275 87M283 90L280 89M630 88L627 90M635 87L630 88M640 87L635 87M645 88L640 87M650 88L645 88M655 89L650 88M659 90L655 89M803 85L805 86M809 90L805 86M904 85L905 86M908 90L905 86M1055 85L1054 90M1101 85L1105 86M1110 87L1105 86M1115 89L1110 87M1119 90L1115 89M210 93L206 95M215 90L210 93M216 90L215 90M283 90L285 91M290 95L285 91M625 91L622 95M627 90L625 91M659 90L660 90M665 91L660 90M670 92L665 91M675 93L670 92M680 95L675 93M681 95L680 95M809 90L810 91M814 95L810 91M908 90L910 95M1054 90L1052 95M1119 90L1120 90M1125 93L1120 90M1130 95L1125 93M200 99L198 100M205 96L200 99M206 95L205 96M290 95L290 96M292 100L290 96M620 98L619 100M622 95L620 98M681 95L685 96M690 98L685 96M693 100L690 98M814 95L815 96M819 100L815 96M910 95L910 99M910 100L910 99M1052 95L1050 100M1130 95L1130 95M1135 99L1130 95M1136 100L1135 99M190 104L188 105M195 101L190 104M198 100L195 101M292 100L291 105M619 100L615 105M693 100L695 101M700 105L695 101M700 105L700 105M819 100L820 102M822 105L820 102M910 101L909 105M910 100L910 101M1050 100L1048 105M1050 100L1050 100M1136 100L1138 105M180 109L178 110M185 107L180 109M188 105L185 107M290 106L286 110M291 105L290 106M615 105L612 110M615 105L615 105M700 105L703 110M822 105L824 110M909 105L907 110M1048 105L1045 110M1138 105L1139 110M170 114L167 115M175 111L170 114M178 110L175 111M280 113L276 115M285 110L280 113M286 110L285 110M610 112L607 115M612 110L610 112M703 110L703 115M824 110L825 113M826 115L825 113M905 113L904 115M907 110L905 113M1045 111L1043 115M1045 110L1045 111M1139 110L1138 115M160 118L156 120M165 116L160 118M167 115L165 116M265 119L262 120M270 117L265 119M275 115L270 117M276 115L275 115M605 118L603 120M607 115L605 118M703 115L701 120M826 115L826 120M900 119L898 120M904 115L900 119M1040 119L1040 120M1043 115L1040 119M1135 119L1135 120M1138 115L1135 119M570 5L569 5M575 4L570 5M580 5L575 4M1135 0L1135 0M1140 5L1135 0M115 10L114 10M120 9L115 10M125 9L120 9M130 9L125 9M135 9L130 9M140 9L135 9M145 9L140 9M150 9L145 9M155 9L150 9M160 9L155 9M165 10L160 9M560 9L558 10M565 6L560 9M569 5L565 6M580 5L580 5M585 7L580 5M588 10L585 7M1140 5L1140 5M1145 9L1140 5M1147 10L1145 9M105 13L100 15M110 11L105 13M114 10L110 11M165 10L165 10M170 11L165 10M175 12L170 11M180 14L175 12M182 15L180 14M555 12L551 15M558 10L555 12M588 10L590 12M593 15L590 12M1147 10L1150 12M1155 15L1150 12M1155 15L1155 15M100 15L96 20M100 15L100 15M182 15L185 16M190 20L185 16M190 20L190 20M550 16L546 20M551 15L550 16M593 15L595 17M598 20L595 17M1155 15L1160 17M1164 20L1160 17M95 22L94 25M96 20L95 22M190 20L195 24M196 25L195 24M545 21L542 25M546 20L545 21M598 20L600 22M603 25L600 22M1164 20L1165 20M1170 23L1165 20M1172 25L1170 23M94 25L94 30M196 25L200 30M540 27L538 30M542 25L540 27M603 25L605 26M609 30L605 26M800 30L800 30M805 29L800 30M810 28L805 29M815 28L810 28M820 29L815 28M825 29L820 29M828 30L825 29M1020 30L1019 30M1025 30L1020 30M1027 30L1025 30M1172 25L1175 27M1180 30L1175 27M94 30L94 35M200 30L200 30M202 35L200 30M535 34L534 35M538 30L535 34M609 30L610 31M615 35L610 31M800 30L796 35M828 30L830 30M835 31L830 30M840 33L835 31M845 34L840 33M847 35L845 34M1005 34L1003 35M1010 32L1005 34M1015 30L1010 32M1019 30L1015 30M1027 30L1030 30M1035 31L1030 30M1040 33L1035 31M1045 34L1040 33M1046 35L1045 34M1180 30L1180 30M1185 34L1180 30M1186 35L1185 34M94 35L94 40M202 35L203 40M534 35L531 40M615 35L615 35M619 40L615 35M795 38L795 40M796 35L795 38M847 35L850 36M855 39L850 36M857 40L855 39M1000 39L999 40M1003 35L1000 39M1046 35L1050 37M1053 40L1050 37M1186 35L1190 38M1192 40L1190 38M94 40L94 45M203 40L202 45M530 42L528 45M531 40L530 42M619 40L620 42M622 45L620 42M795 40L794 45M857 40L860 42M864 45L860 42M999 40L997 45M1053 40L1055 42M1057 45L1055 42M1192 40L1195 42M1198 45L1195 42M94 45L95 48M96 50L95 48M200 47L198 50M202 45L200 47M528 45L527 50M622 45L624 50M794 45L794 50M864 45L865 46M869 50L865 46M997 45L998 50M1057 45L1059 50M1198 45L1200 47M96 50L98 55M190 55L190 55M195 52L190 55M198 50L195 52M527 50L528 55M624 50L624 55M794 50L794 55M869 50L870 51M873 55L870 51M998 50L999 55M1059 50L1060 55M98 55L100 57M105 59L100 57M107 60L105 59M175 59L171 60M180 58L175 59M185 57L180 58M190 55L185 57M528 55L530 57M533 60L530 57M624 55L623 60M794 55L794 60M873 55L875 57M877 60L875 57M999 55L1000 56M1004 60L1000 56M1060 55L1059 60M107 60L110 61M115 61L110 61M120 62L115 61M125 62L120 62M130 62L125 62M135 62L130 62M140 62L135 62M145 62L140 62M150 62L145 62M155 62L150 62M160 61L155 62M165 61L160 61M170 60L165 61M171 60L170 60M533 60L535 61M540 64L535 61M543 65L540 64M623 60L621 65M794 60L795 65M877 60L880 63M882 65L880 63M1004 60L1005 61M1010 64L1005 61M1012 65L1010 64M1059 60L1057 65M543 65L545 66M550 67L545 66M555 68L550 67M560 70L555 68M562 70L560 70M620 67L617 70M621 65L620 67M795 65L795 65M796 70L795 65M882 65L885 69M886 70L885 69M1012 65L1015 66M1020 68L1015 66M1025 69L1020 68M1029 70L1025 69M1055 68L1053 70M1057 65L1055 68M562 70L565 70M570 71L565 70M575 72L570 71M580 73L575 72M585 73L580 73M590 74L585 73M595 74L590 74M600 74L595 74M605 74L600 74M610 73L605 74M615 71L610 73M617 70L615 71M796 70L799 75M886 70L890 74M891 75L890 74M1029 70L1030 70M1035 71L1030 70M1040 72L1035 71M1045 72L1040 72M1050 71L1045 72M1053 70L1050 71M799 75L800 77M803 80L800 77M891 75L895 79M896 80L895 79M803 80L805 82M808 85L805 82M896 80L900 85M900 85L900 85M1070 84L1068 85M1075 84L1070 84M1080 84L1075 84M1085 85L1080 84M1087 85L1085 85M230 90L229 90M235 89L230 90M240 88L235 89M245 88L240 88M250 88L245 88M255 88L250 88M260 89L255 88M265 90L260 89M267 90L265 90M808 85L810 87M813 90L810 87M900 85L904 90M1060 90L1060 90M1065 86L1060 90M1068 85L1065 86M1087 85L1090 85M1095 86L1090 85M1100 87L1095 86M1105 88L1100 87M1110 89L1105 88M1112 90L1110 89M220 93L216 95M225 91L220 93M229 90L225 91M267 90L270 91M275 94L270 91M277 95L275 94M635 94L634 95M640 93L635 94M645 92L640 93M650 92L645 92M655 93L650 92M660 93L655 93M665 94L660 93M670 95L665 94M671 95L670 95M813 90L815 92M818 95L815 92M904 90L905 92M906 95L905 92M1060 90L1056 95M1112 90L1115 91M1120 93L1115 91M1125 95L1120 93M210 98L206 100M215 95L210 98M216 95L215 95M277 95L280 100M280 100L280 100M630 97L626 100M634 95L630 97M671 95L675 96M680 98L675 96M685 99L680 98M687 100L685 99M818 95L820 97M823 100L820 97M906 95L907 100M1055 97L1054 100M1056 95L1055 97M1125 95L1125 95M1130 99L1125 95M1131 100L1130 99M200 103L197 105M205 101L200 103M206 100L205 101M280 101L278 105M280 100L280 101M625 101L622 105M626 100L625 101M687 100L690 102M695 105L690 102M823 100L825 103M826 105L825 103M907 100L906 105M1054 100L1051 105M1131 100L1134 105M190 108L186 110M195 106L190 108M197 105L195 106M275 108L272 110M278 105L275 108M620 107L617 110M622 105L620 107M695 105L695 105M698 110L695 105M826 105L828 110M905 107L904 110M906 105L905 107M1050 107L1048 110M1051 105L1050 107M1134 105L1135 110M175 115L175 115M180 113L175 115M185 111L180 113M186 110L185 111M265 113L260 115M270 111L265 113M272 110L270 111M615 113L613 115M617 110L615 113M698 110L699 115M828 110L830 115M830 115L830 115M900 115L900 115M904 110L900 115M1048 110L1046 115M1135 110L1134 115M165 119L164 120M170 117L165 119M175 115L170 117M250 118L246 120M255 117L250 118M260 115L255 117M260 115L260 115M610 119L609 120M613 115L610 119M699 115L696 120M830 115L831 120M895 119L894 120M900 115L895 119M1045 117L1043 120M1046 115L1045 117M1134 115L1130 120M1150 0L1150 2M1151 5L1150 2M1192 0L1195 1M1200 3L1195 1M1151 5L1155 9M1156 10L1155 9M115 14L112 15M120 13L115 14M125 13L120 13M130 12L125 13M135 12L130 12M140 12L135 12M145 12L140 12M150 13L145 12M155 13L150 13M160 14L155 13M164 15L160 14M1156 10L1160 12M1164 15L1160 12M105 19L104 20M110 16L105 19M112 15L110 16M164 15L165 15M170 17L165 15M175 19L170 17M178 20L175 19M560 19L559 20M565 17L560 19M570 16L565 17M575 16L570 16M580 17L575 16M585 20L580 17M1164 15L1165 16M1170 19L1165 16M1172 20L1170 19M104 20L101 25M178 20L180 21M185 25L180 21M186 25L185 25M555 23L553 25M559 20L555 23M585 20L585 20M590 23L585 20M592 25L590 23M1172 20L1175 22M1179 25L1175 22M100 30L100 30M101 25L100 30M186 25L190 29M191 30L190 29M550 28L548 30M553 25L550 28M592 25L595 27M599 30L595 27M1179 25L1180 26M1185 29L1180 26M1186 30L1185 29M100 30L100 35M191 30L194 35M545 33L544 35M548 30L545 33M599 30L600 30M605 34L600 30M606 35L605 34M810 34L807 35M815 33L810 34M820 33L815 33M825 33L820 33M830 34L825 33M835 35L830 34M836 35L835 35M1015 35L1014 35M1020 34L1015 35M1025 34L1020 34M1030 34L1025 34M1035 35L1030 34M1036 35L1035 35M1186 30L1190 33M1192 35L1190 33M100 35L100 36M100 40L100 36M194 35L194 40M544 35L540 40M606 35L610 39M611 40L610 39M805 36L802 40M807 35L805 36M836 35L840 36M845 38L840 36M850 40L845 38M850 40L850 40M1010 37L1006 40M1014 35L1010 37M1036 35L1040 37M1045 39L1040 37M1047 40L1045 39M1192 35L1195 37M1198 40L1195 37M100 40L102 45M194 40L193 45M540 40L538 45M540 40L540 40M611 40L615 45M800 44L800 45M802 40L800 44M850 40L855 43M859 45L855 43M1005 41L1003 45M1006 40L1005 41M1047 40L1050 43M1052 45L1050 43M1198 40L1200 42M102 45L104 50M190 48L188 50M193 45L190 48M538 45L537 50M615 45L615 46M617 50L615 46M800 45L799 50M859 45L860 46M864 50L860 46M1003 45L1003 50M1052 45L1054 50M104 50L105 51M110 55L105 51M110 55L110 55M180 54L176 55M185 51L180 54M188 50L185 51M537 50L539 55M617 50L617 55M799 50L798 55M864 50L865 51M869 55L865 51M1003 50L1005 55M1054 50L1054 55M110 55L115 57M120 58L115 57M125 58L120 58M130 59L125 58M135 59L130 59M140 59L135 59M145 59L140 59M150 59L145 59M155 58L150 59M160 58L155 58M165 57L160 58M170 56L165 57M175 55L170 56M176 55L175 55M539 55L540 56M545 60L540 56M545 60L545 60M617 55L615 60M798 55L798 60M869 55L870 56M873 60L870 56M1005 55L1005 55M1010 60L1005 55M1010 60L1010 60M1054 55L1053 60M545 60L550 62M555 64L550 62M558 65L555 64M615 61L611 65M615 60L615 61M798 60L799 65M873 60L875 62M878 65L875 62M1010 60L1015 62M1020 65L1015 62M1021 65L1020 65M1050 64L1048 65M1053 60L1050 64M558 65L560 65M565 66L560 65M570 67L565 66M575 68L570 67M580 69L575 68M585 69L580 69M590 69L585 69M595 69L590 69M600 69L595 69M605 68L600 69M610 66L605 68M611 65L610 66M799 65L800 69M800 70L800 69M878 65L880 68M882 70L880 68M1021 65L1025 66M1030 67L1025 66M1035 67L1030 67M1040 67L1035 67M1045 66L1040 67M1048 65L1045 66M800 70L803 75M882 70L885 73M887 75L885 73M803 75L805 78M807 80L805 78M887 75L890 78M892 80L890 78M807 80L810 83M812 85L810 83M892 80L895 84M896 85L895 84M812 85L815 88M818 90L815 88M896 85L900 90M900 90L900 90M1070 89L1068 90M1075 88L1070 89M1080 87L1075 88M1085 87L1080 87M1090 88L1085 87M1095 88L1090 88M1100 89L1095 88M1104 90L1100 89M230 95L230 95M235 94L230 95M240 93L235 94M245 93L240 93M250 93L245 93M255 94L250 93M260 95L255 94M261 95L260 95M818 90L820 92M823 95L820 92M900 90L902 95M1065 91L1061 95M1068 90L1065 91M1104 90L1105 90M1110 92L1105 90M1115 93L1110 92M1119 95L1115 93M220 99L217 100M225 97L220 99M230 95L225 97M261 95L265 98M267 100L265 98M640 98L635 100M645 97L640 98M650 96L645 97M655 96L650 96M660 96L655 96M665 97L660 96M670 98L665 97M675 99L670 98M678 100L675 99M823 95L825 98M827 100L825 98M902 95L903 100M1060 96L1057 100M1061 95L1060 96M1119 95L1120 95M1125 99L1120 95M1127 100L1125 99M210 103L207 105M215 101L210 103M217 100L215 101M265 105L265 105M267 100L265 105M630 104L629 105M635 100L630 104M635 100L635 100M678 100L680 101M685 103L680 101M688 105L685 103M827 100L830 105M830 105L830 105M903 100L902 105M1055 104L1054 105M1057 100L1055 104M1127 100L1130 104M1130 105L1130 104M200 108L197 110M205 106L200 108M207 105L205 106M260 108L257 110M265 105L260 108M625 108L624 110M629 105L625 108M688 105L690 107M693 110L690 107M830 105L833 110M900 110L900 110M902 105L900 110M1054 105L1052 110M1130 105L1131 110M190 113L185 115M195 111L190 113M197 110L195 111M245 115L244 115M250 113L245 115M255 111L250 113M257 110L255 111M620 114L619 115M624 110L620 114M693 110L693 115M833 110L835 115M900 110L895 115M1050 113L1049 115M1052 110L1050 113M1130 113L1129 115M1131 110L1130 113M175 119L173 120M180 117L175 119M185 115L180 117M185 115L185 115M230 120L230 120M235 118L230 120M240 116L235 118M244 115L240 116M619 115L615 120M693 115L691 120M835 115L835 115M837 120L835 115M890 119L888 120M895 115L890 119M895 115L895 115M1049 115L1047 120M1129 115L1126 120M1170 4L1166 5M1175 3L1170 4M1180 3L1175 3M1185 4L1180 3M1190 5L1185 4M1192 5L1190 5M1166 5L1168 10M1192 5L1195 6M1200 8L1195 6M1168 10L1170 12M1173 15L1170 12M115 20L114 20M120 18L115 20M125 17L120 18M130 16L125 17M135 16L130 16M140 16L135 16M145 17L140 16M150 17L145 17M155 18L150 17M160 19L155 18M163 20L160 19M1173 15L1175 16M1180 20L1175 16M1180 20L1180 20M110 24L109 25M114 20L110 24M163 20L165 21M170 23L165 21M174 25L170 23M1180 20L1185 23M1187 25L1185 23M109 25L107 30M174 25L175 26M180 29L175 26M181 30L180 29M565 29L563 30M570 28L565 29M575 28L570 28M580 29L575 28M584 30L580 29M1187 25L1190 27M1193 30L1190 27M107 30L107 35M181 30L185 35M560 32L556 35M563 30L560 32M584 30L585 30M590 33L585 30M594 35L590 33M1193 30L1195 31M1199 35L1195 31M107 35L108 40M185 35L185 38M185 40L185 38M555 36L551 40M556 35L555 36M594 35L595 36M600 39L595 36M601 40L600 39M815 39L812 40M820 38L815 39M825 37L820 38M830 38L825 37M835 38L830 38M840 40L835 38M841 40L840 40M1020 39L1016 40M1025 38L1020 39M1030 38L1025 38M1035 39L1030 38M1037 40L1035 39M1199 35L1200 36M108 40L110 45M185 41L183 45M185 40L185 41M550 43L549 45M551 40L550 43M601 40L605 44M605 45L605 44M810 41L806 45M812 40L810 41M841 40L845 41M850 44L845 41M852 45L850 44M1010 45L1010 45M1015 40L1010 45M1016 40L1015 40M1037 40L1040 42M1045 45L1040 42M110 45L110 45M115 50L110 45M180 47L176 50M183 45L180 47M549 45L548 50M605 45L608 50M805 47L804 50M806 45L805 47M852 45L855 47M859 50L855 47M1010 45L1009 50M1045 45L1045 45M1048 50L1045 45M115 50L115 50M120 52L115 50M125 54L120 52M130 55L125 54M131 55L130 55M155 55L154 55M160 54L155 55M165 53L160 54M170 52L165 53M175 50L170 52M176 50L175 50M548 50L550 53M551 55L550 53M608 50L608 55M804 50L803 55M859 50L860 51M865 55L860 51M1009 50L1010 52M1011 55L1010 52M1048 50L1048 55M131 55L135 55M140 56L135 55M145 56L140 56M150 55L145 56M154 55L150 55M551 55L555 57M560 60L555 57M605 59L604 60M608 55L605 59M803 55L802 60M865 55L865 55M869 60L865 55M1011 55L1015 58M1019 60L1015 58M1045 60L1045 60M1048 55L1045 60M560 60L560 60M565 61L560 60M570 63L565 61M575 64L570 63M580 64L575 64M585 64L580 64M590 64L585 64M595 64L590 64M600 62L595 64M604 60L600 62M802 60L803 65M869 60L870 61M873 65L870 61M1019 60L1020 61M1025 62L1020 61M1030 63L1025 62M1035 63L1030 63M1040 62L1035 63M1045 60L1040 62M803 65L804 70M873 65L875 67M878 70L875 67M804 70L805 71M807 75L805 71M878 70L880 73M882 75L880 73M807 75L810 79M811 80L810 79M882 75L885 78M887 80L885 78M811 80L815 84M816 85L815 84M887 80L890 83M892 85L890 83M816 85L820 88M822 90L820 88M892 85L895 89M896 90L895 89M822 90L825 93M827 95L825 93M896 90L899 95M1070 93L1067 95M1075 91L1070 93M1080 90L1075 91M1085 90L1080 90M1090 90L1085 90M1095 91L1090 90M1100 92L1095 91M1105 93L1100 92M1110 94L1105 93M1113 95L1110 94M655 100L652 100M660 100L655 100M663 100L660 100M827 95L830 98M831 100L830 98M899 95L900 100M1065 96L1062 100M1067 95L1065 96M1113 95L1115 96M1120 99L1115 96M1122 100L1120 99M225 105L224 105M230 103L225 105M235 102L230 103M240 102L235 102M245 105L240 102M640 103L637 105M645 101L640 103M650 100L645 101M652 100L650 100M663 100L665 100M670 101L665 100M675 103L670 101M680 105L675 103M681 105L680 105M831 100L835 105M900 100L899 105M1060 102L1058 105M1062 100L1060 102M1122 100L1125 103M1126 105L1125 103M215 110L215 110M220 108L215 110M224 105L220 108M240 107L235 110M245 105L240 107M635 106L630 110M637 105L635 106M681 105L685 108M686 110L685 108M835 105L835 106M838 110L835 106M899 105L896 110M1058 105L1055 110M1126 105L1127 110M205 115L205 115M210 113L205 115M215 110L210 113M220 115L220 115M225 113L220 115M230 111L225 113M235 110L230 111M235 110L235 110M630 110L626 115M630 110L630 110M686 110L687 115M838 110L840 115M840 115L840 115M895 111L891 115M896 110L895 111M1055 110L1053 115M1055 110L1055 110M1127 110L1125 115M195 119L193 120M200 118L195 119M205 115L200 118M210 117L206 120M215 116L210 117M220 115L215 116M625 116L622 120M626 115L625 116M685 120L685 120M687 115L685 120M840 115L844 120M885 119L882 120M890 116L885 119M891 115L890 116M1053 115L1051 120M1125 115L1121 120M1125 115L1125 115M1195 15L1194 15M1196 15L1195 15M1194 15L1194 20M1196 15L1200 16M125 23L120 25M130 22L125 23M135 21L130 22M140 21L135 21M145 22L140 21M150 22L145 22M155 24L150 22M160 25L155 24M1194 20L1195 21M1198 25L1195 21M120 25L116 30M120 25L120 25M160 25L160 25M165 28L160 25M169 30L165 28M1198 25L1200 26M116 30L115 35M169 30L170 31M174 35L170 31M115 35L117 40M174 35L175 40M575 40L574 40M580 40L575 40M580 40L580 40M117 40L120 45M120 45L120 45M175 40L171 45M565 45L565 45M570 41L565 45M574 40L570 41M580 40L585 42M590 44L585 42M591 45L590 44M815 45L815 45M820 43L815 45M825 42L820 43M830 42L825 42M835 42L830 42M840 44L835 42M844 45L840 44M1025 44L1022 45M1030 44L1025 44M1033 45L1030 44M120 45L125 48M130 50L125 48M131 50L130 50M160 49L158 50M165 48L160 49M170 46L165 48M171 45L170 46M565 45L564 50M591 45L594 50M810 50L810 50M815 45L810 50M844 45L845 45M850 48L845 45M853 50L850 48M1020 47L1018 50M1022 45L1020 47M1033 45L1035 46M1039 50L1035 46M131 50L135 51M140 51L135 51M145 51L140 51M150 51L145 51M155 50L150 51M158 50L155 50M564 50L565 51M570 55L565 51M594 50L592 55M810 50L808 55M853 50L855 51M859 55L855 51M1018 50L1020 53M1022 55L1020 53M1039 50L1037 55M570 55L570 55M575 56L570 55M580 57L575 56M585 57L580 57M590 56L585 57M592 55L590 56M808 55L807 60M859 55L860 55M864 60L860 55M1022 55L1025 56M1030 57L1025 56M1035 56L1030 57M1037 55L1035 56M807 60L807 65M864 60L865 61M869 65L865 61M807 65L809 70M869 65L870 66M873 70L870 66M809 70L810 72M812 75L810 72M873 70L875 72M878 75L875 72M812 75L815 79M816 80L815 79M878 75L880 77M883 80L880 77M816 80L820 84M821 85L820 84M883 80L885 82M888 85L885 82M821 85L825 88M827 90L825 88M888 85L890 88M892 90L890 88M827 90L830 93M832 95L830 93M892 90L895 95M1075 95L1074 95M1080 93L1075 95M1085 93L1080 93M1090 93L1085 93M1095 93L1090 93M1100 94L1095 93M1105 95L1100 94M1105 95L1105 95M832 95L835 99M836 100L835 99M895 95L895 97M896 100L895 97M1070 97L1066 100M1074 95L1070 97M1105 95L1110 97M1115 99L1110 97M1117 100L1115 99M650 105L649 105M655 104L650 105M660 104L655 104M665 104L660 104M669 105L665 104M836 100L839 105M895 103L894 105M896 100L895 103M1065 101L1062 105M1066 100L1065 101M1117 100L1120 103M1122 105L1120 103M640 109L639 110M645 107L640 109M649 105L645 107M669 105L670 105M675 108L670 105M679 110L675 108M839 105L840 106M843 110L840 106M894 105L891 110M1060 108L1059 110M1062 105L1060 108M1122 105L1123 110M635 113L633 115M639 110L635 113M679 110L680 114M680 115L680 114M843 110L845 113M847 115L845 113M885 115L885 115M890 111L885 115M891 110L890 111M1059 110L1057 115M1123 110L1121 115M630 119L629 120M633 115L630 119M680 115L677 120M680 115L680 115M847 115L850 118M854 120L850 118M875 119L872 120M880 117L875 119M885 115L880 117M1055 120L1055 120M1057 115L1055 120M1120 116L1116 120M1121 115L1120 116M135 29L132 30M140 29L135 29M145 29L140 29M150 30L145 29M151 30L150 30M130 32L128 35M132 30L130 32M151 30L155 32M159 35L155 32M128 35L130 40M159 35L160 40M130 40L130 40M135 43L130 40M140 44L135 43M145 45L140 44M150 44L145 45M155 43L150 44M160 40L155 43M820 49L818 50M825 47L820 49M830 46L825 47M835 47L830 46M840 48L835 47M845 50L840 48M845 50L845 50M815 53L814 55M818 50L815 53M845 50L850 53M853 55L850 53M814 55L812 60M853 55L855 56M859 60L855 56M812 60L812 65M859 60L860 61M864 65L860 61M812 65L814 70M864 65L865 67M868 70L865 67M814 70L815 72M817 75L815 72M868 70L870 72M873 75L870 72M817 75L820 79M821 80L820 79M873 75L875 78M877 80L875 78M821 80L825 83M827 85L825 83M877 80L880 83M882 85L880 83M827 85L830 88M832 90L830 88M882 85L885 88M887 90L885 88M832 90L835 93M837 95L835 93M887 90L890 95M837 95L840 99M841 100L840 99M890 95L890 96M891 100L890 96M1075 98L1072 100M1080 97L1075 98M1085 96L1080 97M1090 95L1085 96M1095 96L1090 95M1100 97L1095 96M1105 98L1100 97M1110 100L1105 98M1111 100L1110 100M841 100L845 105M890 104L890 105M891 100L890 104M1070 101L1066 105M1072 100L1070 101M1111 100L1115 103M1117 105L1115 103M655 110L654 110M660 109L655 110M664 110L660 109M845 105L845 105M849 110L845 105M890 105L886 110M1065 107L1063 110M1066 105L1065 107M1117 105L1118 110M645 114L644 115M650 111L645 114M654 110L650 111M664 110L665 110M670 115L665 110M670 115L670 115M849 110L850 111M855 115L850 111M855 115L855 115M880 113L876 115M885 110L880 113M886 110L885 110M1063 110L1061 115M1118 110L1116 115M644 115L640 120M670 115L667 120M670 115L670 115M855 115L860 116M865 117L860 116M870 117L865 117M875 115L870 117M876 115L875 115M1060 119L1060 120M1061 115L1060 119M1115 116L1111 120M1116 115L1115 116M825 53L822 55M830 52L825 53M835 52L830 52M840 53L835 52M845 55L840 53M845 55L845 55M820 58L819 60M822 55L820 58M845 55L850 58M852 60L850 58M819 60L818 65M852 60L855 62M858 65L855 62M818 65L819 70M858 65L860 68M862 70L860 68M819 70L820 71M823 75L820 71M862 70L865 73M867 75L865 73M823 75L825 78M827 80L825 78M867 75L870 79M871 80L870 79M827 80L830 82M833 85L830 82M871 80L875 84M876 85L875 84M833 85L835 87M838 90L835 87M876 85L880 89M881 90L880 89M838 90L840 92M843 95L840 92M881 90L884 95M843 95L845 97M847 100L845 97M884 95L885 98M885 100L885 98M1080 100L1080 100M1085 99L1080 100M1090 98L1085 99M1095 99L1090 98M1100 99L1095 99M1102 100L1100 99M847 100L850 104M851 105L850 104M885 101L883 105M885 100L885 101M1075 103L1072 105M1080 100L1075 103M1102 100L1105 101M1110 104L1105 101M1111 105L1110 104M851 105L855 108M858 110L855 108M880 108L877 110M883 105L880 108M1070 107L1068 110M1072 105L1070 107M1111 105L1113 110M858 110L860 111M865 112L860 111M870 112L865 112M875 111L870 112M877 110L875 111M1068 110L1066 115M1113 110L1111 115M1066 115L1066 120M1105 119L1104 120M1110 116L1105 119M1111 115L1110 116M830 60L830 60M835 59L830 60M840 60L835 59M841 60L840 60M830 60L826 65M841 60L845 62M849 65L845 62M826 65L827 70M849 65L850 66M854 70L850 66M827 70L830 75M830 75L830 75M854 70L855 71M859 75L855 71M830 75L835 80M835 80L835 80M859 75L860 76M863 80L860 76M835 80L840 84M841 85L840 84M863 80L865 82M868 85L865 82M841 85L845 88M847 90L845 88M868 85L870 87M873 90L870 87M847 90L850 94M851 95L850 94M873 90L875 93M876 95L875 93M851 95L855 100M855 100L855 100M876 95L877 100M855 100L860 104M863 105L860 104M875 103L872 105M877 100L875 103M1080 104L1079 105M1085 103L1080 104M1090 102L1085 103M1095 102L1090 102M1100 104L1095 102M1103 105L1100 104M863 105L865 106M870 106L865 106M872 105L870 106M1075 108L1074 110M1079 105L1075 108M1103 105L1105 107M1107 110L1105 107M1074 110L1072 115M1105 113L1104 115M1107 110L1105 113M1072 115L1075 120M1095 120L1095 120M1100 117L1095 120M1104 115L1100 117M1085 109L1084 110M1090 108L1085 109M1095 109L1090 108M1096 110L1095 109M1084 110L1084 115M1095 112L1091 115M1096 110L1095 112M1084 115L1085 115M1090 115L1085 115M1091 115L1090 115" fill="none" stroke="rgba(255,255,255,0.2)" stroke-width="1" mask="url(#cm)"/></svg>
<div class="a" style="left:331px;top:76px;width:286px;height:189px;background:#fff;border-radius:3px;box-shadow:0 2px 3px rgba(0,0,0,0.13)"></div>
<div class="a" style="left:344px;top:87px;width:20px;height:20px;background:#a094ed;border-radius:3px"></div>
<svg class="a" style="left:348px;top:92.5px;" width="12" height="8" viewBox="0 0 12 8"><rect x="0" y="0" width="12" height="8" rx="0.8" fill="#fff"/><circle cx="3.7" cy="2.9" r="1.45" fill="#a094ed"/><path d="M1.3 6.9 Q3.7 3.7 6.1 6.9 Z" fill="#a094ed"/><rect x="7.1" y="2.1" width="3.4" height="1.2" fill="#a094ed"/><rect x="7.1" y="4.3" width="3.4" height="1.2" fill="#a094ed"/></svg>
<div class="t" style="left:374.0px;top:88.00px;font-size:12.91px;font-weight:700;color:#181818;">Contact Details</div>
<div class="a" style="left:587px;top:86px;width:16px;height:16px;background:#fff;border:1px solid #c9c9c9;border-radius:3px;box-sizing:border-box"></div>
<svg class="a" style="left:591.0px;top:92.25px;" width="8" height="4.5" viewBox="0 0 8 4.5"><path d="M0 0 L8 0 L4.0 4.5 Z" fill="#747474"/></svg>
<div class="t" style="left:347.7px;top:121.00px;font-size:9.6px;font-weight:400;color:#444;">Name</div>
<div class="t" style="left:347.7px;top:138.00px;font-size:11.5px;font-weight:400;color:#181818;">Jon Amos</div>
<div class="a" style="left:344px;top:154px;width:259px;height:1px;background:#e5e5e5"></div>
<div class="t" style="left:347.7px;top:160.00px;font-size:9.9px;font-weight:400;color:#444;">Title</div>
<div class="t" style="left:347.7px;top:177.00px;font-size:11.3px;font-weight:400;color:#181818;">Sales Manager</div>
<div class="a" style="left:344px;top:192px;width:114px;height:1px;background:#e5e5e5"></div>
<div class="t" style="left:493.2px;top:160.00px;font-size:9.99px;font-weight:400;color:#444;">Account Name</div>
<div class="t" style="left:493.2px;top:177.00px;font-size:11.3px;font-weight:400;color:#0b65c2;">Global Media</div>
<div class="a" style="left:490.5px;top:192px;width:112px;height:1px;background:#e5e5e5"></div>
<div class="t" style="left:347.7px;top:199.00px;font-size:9.9px;font-weight:400;color:#444;">Email</div>
<div class="t" style="left:347.7px;top:216.00px;font-size:11.5px;font-weight:400;color:#0b65c2;">info@salesforce.c</div>
<div class="t" style="left:347.7px;top:233.00px;font-size:11.5px;font-weight:400;color:#0b65c2;">om</div>
<div class="a" style="left:344px;top:248px;width:114px;height:1px;background:#e5e5e5"></div>
<div class="t" style="left:493.2px;top:199.00px;font-size:9.9px;font-weight:400;color:#444;">Phone</div>
<div class="t" style="left:493.2px;top:216.00px;font-size:11.5px;font-weight:400;color:#181818;">(905) 555-1212</div>
<div class="a" style="left:490.5px;top:248px;width:112px;height:1px;background:#e5e5e5"></div>
<svg class="a" style="left:589px;top:139px;" width="8" height="8" viewBox="0 0 8 8"><path d="M0.5 7.5 L7.5 0.5" stroke="#efefef" stroke-width="1.8"/></svg>
<svg class="a" style="left:439px;top:177px;" width="8" height="8" viewBox="0 0 8 8"><path d="M0.5 7.5 L7.5 0.5" stroke="#efefef" stroke-width="1.8"/></svg>
<svg class="a" style="left:589px;top:177px;" width="8" height="8" viewBox="0 0 8 8"><path d="M0.5 7.5 L7.5 0.5" stroke="#efefef" stroke-width="1.8"/></svg>
<svg class="a" style="left:439px;top:215px;" width="8" height="8" viewBox="0 0 8 8"><path d="M0.5 7.5 L7.5 0.5" stroke="#efefef" stroke-width="1.8"/></svg>
<svg class="a" style="left:589px;top:215px;" width="8" height="8" viewBox="0 0 8 8"><path d="M0.5 7.5 L7.5 0.5" stroke="#efefef" stroke-width="1.8"/></svg>
<div class="a" style="left:331px;top:275px;width:286px;height:490px;background:#fff"></div>
<div class="t" style="left:337.3px;top:301.00px;font-size:13.07px;font-weight:700;color:#181818;">Interaction Timeline</div>
<svg class="a" style="left:469px;top:305px;" width="9" height="5.5" viewBox="0 0 9 5.5"><path d="M0 0 L9 0 L4.5 5.5 Z" fill="#747474"/></svg>
<div class="t" style="left:337.3px;top:323.00px;font-size:10.5px;font-weight:400;color:#181818;word-spacing:0.9px">All Events • Most Recent Event</div>
<div class="a" style="left:550px;top:291px;width:67px;height:26px;background:#fff;border:1px solid #c9c9c9;border-radius:4px;box-sizing:border-box"></div>
<div class="t" style="left:564.0px;top:299.00px;font-size:10.8px;font-weight:400;color:#0b65c2;">New</div>
<svg class="a" style="left:593.7px;top:303px;" width="8" height="5" viewBox="0 0 8 5"><path d="M0 0 L8 0 L4.0 5 Z" fill="#0b65c2"/></svg>
<div class="a" style="left:514.5px;top:321px;width:25.5px;height:25px;background:#fff;border:1px solid #c9c9c9;border-radius:4px;box-sizing:border-box"></div>
<div class="a" style="left:540.5px;top:321px;width:25.5px;height:25px;background:#fff;border:1px solid #c9c9c9;border-radius:4px;box-sizing:border-box"></div>
<div class="a" style="left:566.5px;top:321px;width:25.5px;height:25px;background:#fff;border:1px solid #c9c9c9;border-radius:4px;box-sizing:border-box"></div>
<div class="a" style="left:591.5px;top:321px;width:25.5px;height:25px;background:#fff;border:1px solid #c9c9c9;border-radius:4px;box-sizing:border-box"></div>
<svg class="a" style="left:522px;top:328px;" width="10.5" height="10.5" viewBox="0 0 10.5 10.5"><path d="M8.86 3.41 A4.25 4.25 0 1 0 9.50 6.39" fill="none" stroke="#747474" stroke-width="1.2"/><path d="M10.0 0.5 L10.0 4.41 L6.09 4.41" fill="none" stroke="#747474" stroke-width="1.2"/></svg>
<svg class="a" style="left:547.5px;top:328.5px;" width="11" height="10.5" viewBox="0 0 11 10.5"><rect x="0" y="1.5" width="11" height="9" rx="1" fill="#747474"/><rect x="2.5" y="0" width="1.2" height="2.5" fill="#747474"/><rect x="7.3" y="0" width="1.2" height="2.5" fill="#747474"/><rect x="1.3" y="4.2" width="1.5" height="1.4" fill="#fff"/><rect x="1.3" y="6.3" width="1.5" height="1.4" fill="#fff"/><rect x="1.3" y="8.4" width="1.5" height="1.4" fill="#fff"/><rect x="3.6" y="4.2" width="1.5" height="1.4" fill="#fff"/><rect x="3.6" y="6.3" width="1.5" height="1.4" fill="#fff"/><rect x="3.6" y="8.4" width="1.5" height="1.4" fill="#fff"/><rect x="5.9" y="4.2" width="1.5" height="1.4" fill="#fff"/><rect x="5.9" y="6.3" width="1.5" height="1.4" fill="#fff"/><rect x="5.9" y="8.4" width="1.5" height="1.4" fill="#fff"/><rect x="8.2" y="4.2" width="1.5" height="1.4" fill="#fff"/><rect x="8.2" y="6.3" width="1.5" height="1.4" fill="#fff"/><rect x="8.2" y="8.4" width="1.5" height="1.4" fill="#fff"/></svg>
<svg class="a" style="left:573.5px;top:328.5px;" width="11" height="10" viewBox="0 0 11 10"><path d="M0 0 L11 0 L6.3 5 L6.3 9.5 L4.7 9.5 L4.7 5 Z" fill="#747474"/></svg>
<svg class="a" style="left:598.5px;top:328px;" width="12" height="11" viewBox="0 0 12 11"><path d="M3 10.5 L3 0.8 M0.6 3.2 L3 0.8 L5.4 3.2 M8.8 0.5 L8.8 10.2 M6.4 7.8 L8.8 10.2 L11.2 7.8" fill="none" stroke="#747474" stroke-width="1.2"/></svg>
<div class="t" style="left:343.7px;top:364.00px;font-size:10.77px;font-weight:400;color:#181818;">Upcoming</div>
<svg class="a" style="left:406px;top:370px;" width="211" height="1" viewBox="0 0 211 1"><line x1="0" y1="0.5" x2="211" y2="0.5" stroke="#c9c9c9" stroke-dasharray="3 2"/></svg>
<div class="t" style="left:343.7px;top:380.00px;font-size:10.77px;font-weight:400;color:#181818;">Past</div>
<svg class="a" style="left:377px;top:386px;" width="240" height="1" viewBox="0 0 240 1"><line x1="0" y1="0.5" x2="240" y2="0.5" stroke="#c9c9c9" stroke-dasharray="3 2"/></svg>
<div class="a" style="left:373px;top:424px;width:2px;height:328px;background:#3cb9a7"></div>
<svg class="a" style="left:345px;top:414px;" width="10" height="6" viewBox="0 0 10 6"><path d="M0.5 0.5 L5.0 5 L9.5 0.5" fill="none" stroke="#444" stroke-width="1.2"/></svg>
<div class="a" style="left:363px;top:406px;width:19px;height:19px;background:#3cb9a7"></div>
<svg class="a" style="left:366.5px;top:410.5px;" width="12" height="10" viewBox="0 0 12 10"><path d="M0 1.6 L2.3 1.3 L4.6 0.3 L7.5 0.7 L9.6 1.4 L12 1.4 L12 6.6 L10.3 6.9 L8 9.1 L5.6 9.8 L2.8 7.8 L0 6.3 Z" fill="#fff"/><path d="M2.3 1.5 C3.8 2.7 5.6 2.4 8 5.2 L9 7.2" stroke="#3cb9a7" stroke-width="1" fill="none"/><path d="M1.8 5 C3.3 4.8 4.8 6.3 6.6 8.3" stroke="#3cb9a7" stroke-width="1" fill="none"/></svg>
<div class="t" style="left:395.4px;top:411.00px;font-size:10.78px;font-weight:700;color:#0b65c2;">EngagementIntera...</div>
<div class="t" style="left:501.5px;top:411.00px;font-size:9.71px;font-weight:400;color:#181818;">November 15,</div>
<div class="t" style="left:501.5px;top:426.00px;font-size:9.71px;font-weight:400;color:#181818;">2022</div>
<div class="a" style="left:582px;top:410px;width:16px;height:16px;background:#fff;border:1px solid #c9c9c9;border-radius:3px;box-sizing:border-box"></div>
<svg class="a" style="left:586.0px;top:416.25px;" width="8" height="4.5" viewBox="0 0 8 4.5"><path d="M0 0 L8 0 L4.0 4.5 Z" fill="#747474"/></svg>
<div class="t" style="left:395.4px;top:427.00px;font-size:10.5px;font-weight:400;color:#181818;">Voice Call</div>
<div class="a" style="left:395.5px;top:451px;width:202px;height:186px;background:#f3f3f3;border:1px solid #e5e5e5;border-radius:4px;box-sizing:border-box"></div>
<div class="t" style="left:412.5px;top:470.00px;font-size:9.9px;font-weight:400;color:#444;">Status</div>
<div class="t" style="left:412.5px;top:487.00px;font-size:11.3px;font-weight:400;color:#181818;">Completed</div>
<div class="t" style="left:500.2px;top:470.00px;font-size:9.9px;font-weight:400;color:#444;">Type</div>
<div class="t" style="left:500.2px;top:487.00px;font-size:11.3px;font-weight:400;color:#181818;">Inbound</div>
<div class="t" style="left:412.5px;top:512.00px;font-size:10.08px;font-weight:400;color:#444;">Start Date Time</div>
<div class="t" style="left:412.5px;top:530.00px;font-size:11.3px;font-weight:400;color:#181818;">11/15/2022,</div>
<div class="t" style="left:412.5px;top:546.00px;font-size:11.3px;font-weight:400;color:#181818;">12:00 PM</div>
<div class="t" style="left:499.5px;top:512.00px;font-size:9.9px;font-weight:400;color:#444;">Sentiment</div>
<div class="t" style="left:499.5px;top:530.00px;font-size:11.3px;font-weight:400;color:#181818;">Positive</div>
<div class="t" style="left:412.5px;top:571.00px;font-size:10.08px;font-weight:400;color:#444;">Communication</div>
<div class="t" style="left:412.5px;top:586.00px;font-size:10.08px;font-weight:400;color:#444;">Channel</div>
<div class="t" style="left:412.5px;top:603.00px;font-size:11.3px;font-weight:400;color:#181818;">Voice Call</div>
<svg class="a" style="left:347px;top:655px;" width="6" height="9" viewBox="0 0 6 9"><path d="M0.5 0.5 L5 4.5 L0.5 8.5" fill="none" stroke="#444" stroke-width="1.2"/></svg>
<div class="a" style="left:363px;top:650px;width:19px;height:19px;background:#3cb9a7"></div>
<svg class="a" style="left:366.5px;top:654.5px;" width="12" height="10" viewBox="0 0 12 10"><path d="M0 1.6 L2.3 1.3 L4.6 0.3 L7.5 0.7 L9.6 1.4 L12 1.4 L12 6.6 L10.3 6.9 L8 9.1 L5.6 9.8 L2.8 7.8 L0 6.3 Z" fill="#fff"/><path d="M2.3 1.5 C3.8 2.7 5.6 2.4 8 5.2 L9 7.2" stroke="#3cb9a7" stroke-width="1" fill="none"/><path d="M1.8 5 C3.3 4.8 4.8 6.3 6.6 8.3" stroke="#3cb9a7" stroke-width="1" fill="none"/></svg>
<div class="t" style="left:395.4px;top:655.00px;font-size:10.78px;font-weight:700;color:#0b65c2;">EngagementIntera...</div>
<div class="t" style="left:503.7px;top:655.00px;font-size:9.71px;font-weight:400;color:#181818;">November 9,</div>
<div class="t" style="left:503.7px;top:669.00px;font-size:9.71px;font-weight:400;color:#181818;">2022</div>
<div class="a" style="left:582px;top:653px;width:16px;height:16px;background:#fff;border:1px solid #c9c9c9;border-radius:3px;box-sizing:border-box"></div>
<svg class="a" style="left:586.0px;top:659.25px;" width="8" height="4.5" viewBox="0 0 8 4.5"><path d="M0 0 L8 0 L4.0 4.5 Z" fill="#747474"/></svg>
<div class="t" style="left:395.4px;top:670.00px;font-size:10.5px;font-weight:400;color:#181818;">In Person</div>
<svg class="a" style="left:347px;top:706px;" width="6" height="9" viewBox="0 0 6 9"><path d="M0.5 0.5 L5 4.5 L0.5 8.5" fill="none" stroke="#444" stroke-width="1.2"/></svg>
<div class="a" style="left:363px;top:701px;width:19px;height:19px;background:#3cb9a7"></div>
<svg class="a" style="left:366.5px;top:705.5px;" width="12" height="10" viewBox="0 0 12 10"><path d="M0 1.6 L2.3 1.3 L4.6 0.3 L7.5 0.7 L9.6 1.4 L12 1.4 L12 6.6 L10.3 6.9 L8 9.1 L5.6 9.8 L2.8 7.8 L0 6.3 Z" fill="#fff"/><path d="M2.3 1.5 C3.8 2.7 5.6 2.4 8 5.2 L9 7.2" stroke="#3cb9a7" stroke-width="1" fill="none"/><path d="M1.8 5 C3.3 4.8 4.8 6.3 6.6 8.3" stroke="#3cb9a7" stroke-width="1" fill="none"/></svg>
<div class="t" style="left:395.4px;top:707.00px;font-size:10.78px;font-weight:700;color:#0b65c2;">EngagementInterac...</div>
<div class="t" style="left:505.7px;top:708.00px;font-size:9.71px;font-weight:400;color:#181818;">October 12,</div>
<div class="t" style="left:505.7px;top:720.00px;font-size:9.71px;font-weight:400;color:#181818;">2022</div>
<div class="a" style="left:582px;top:704px;width:16px;height:16px;background:#fff;border:1px solid #c9c9c9;border-radius:3px;box-sizing:border-box"></div>
<svg class="a" style="left:586.0px;top:710.25px;" width="8" height="4.5" viewBox="0 0 8 4.5"><path d="M0 0 L8 0 L4.0 4.5 Z" fill="#747474"/></svg>
<div class="t" style="left:395.4px;top:722.00px;font-size:10.5px;font-weight:400;color:#181818;">Web Chat</div>
<div class="a" style="left:626px;top:76px;width:592px;height:125px;background:#fff;border-radius:3px;box-shadow:0 2px 3px rgba(0,0,0,0.13)"></div>
<div class="a" style="left:634px;top:86px;width:19px;height:19px;background:#ee6d89;border-radius:3px"></div>
<svg class="a" style="left:637.5px;top:89.5px;" width="12" height="12" viewBox="0 0 12 12"><path d="M6 1 C3.5 1 2.6 3 2.6 5 L2.6 7.2 L1.2 8.8 L10.8 8.8 L9.4 7.2 L9.4 5 C9.4 3 8.5 1 6 1 Z" fill="#fff"/><rect x="4.8" y="9.6" width="2.4" height="1.3" rx="0.6" fill="#fff"/></svg>
<div class="t" style="left:659.6px;top:91.00px;font-size:12.6px;font-weight:700;color:#181818;">Alerts (3)</div>
<svg class="a" style="left:1188px;top:88.5px;" width="11.5" height="11.5" viewBox="0 0 11.5 11.5"><path d="M9.79 3.64 A4.75 4.75 0 1 0 10.50 6.96" fill="none" stroke="#747474" stroke-width="1.2"/><path d="M11.0 0.5 L11.0 4.83 L6.67 4.83" fill="none" stroke="#747474" stroke-width="1.2"/></svg>
<div class="a" style="left:626px;top:113px;width:592px;height:1px;background:#dddbda"></div>
<svg class="a" style="left:644.4px;top:126.5px;" width="5" height="7" viewBox="0 0 5 7"><path d="M0.5 0.5 L4 3.5 L0.5 6.5" fill="none" stroke="#747474" stroke-width="1.1"/></svg>
<svg class="a" style="left:658px;top:123px;" width="11.5" height="10.5" viewBox="0 0 11.5 10.5"><path d="M5.75 0.5 L11.2 10 L0.3 10 Z" fill="#f49645" stroke="#f49645" stroke-width="0.8" stroke-linejoin="round"/><rect x="5.15" y="3.4" width="1.2" height="3.5" fill="#fff"/><rect x="5.15" y="7.7" width="1.2" height="1.2" fill="#fff"/></svg>
<div class="t" style="left:679.7px;top:124.00px;font-size:10.3px;font-weight:400;color:#2b6aab;">Over Heating</div>
<svg class="a" style="left:1189px;top:125.5px;" width="9.5" height="6" viewBox="0 0 9.5 6"><path d="M0 0 L9.5 0 L4.75 6 Z" fill="#3e3e3c"/></svg>
<div class="a" style="left:626px;top:143px;width:592px;height:1px;background:#dddbda"></div>
<svg class="a" style="left:644.4px;top:155.4px;" width="5" height="7" viewBox="0 0 5 7"><path d="M0.5 0.5 L4 3.5 L0.5 6.5" fill="none" stroke="#747474" stroke-width="1.1"/></svg>
<svg class="a" style="left:658.5px;top:152.9px;" width="10.5" height="10.5" viewBox="0 0 10.5 10.5"><circle cx="5.25" cy="5.25" r="5.25" fill="#747474"/><rect x="4.65" y="4.4" width="1.2" height="3.6" fill="#fff"/><rect x="4.65" y="2.5" width="1.2" height="1.2" fill="#fff"/></svg>
<div class="t" style="left:679.7px;top:153.00px;font-size:10.3px;font-weight:400;color:#2b6aab;">Noise from Conveyor Belt</div>
<svg class="a" style="left:1189px;top:154.4px;" width="9.5" height="6" viewBox="0 0 9.5 6"><path d="M0 0 L9.5 0 L4.75 6 Z" fill="#3e3e3c"/></svg>
<div class="a" style="left:626px;top:172px;width:592px;height:1px;background:#dddbda"></div>
<svg class="a" style="left:644.4px;top:184.3px;" width="5" height="7" viewBox="0 0 5 7"><path d="M0.5 0.5 L4 3.5 L0.5 6.5" fill="none" stroke="#747474" stroke-width="1.1"/></svg>
<svg class="a" style="left:658px;top:180.8px;" width="11.5" height="10.5" viewBox="0 0 11.5 10.5"><path d="M5.75 0.5 L11.2 10 L0.3 10 Z" fill="#f49645" stroke="#f49645" stroke-width="0.8" stroke-linejoin="round"/><rect x="5.15" y="3.4" width="1.2" height="3.5" fill="#fff"/><rect x="5.15" y="7.7" width="1.2" height="1.2" fill="#fff"/></svg>
<div class="t" style="left:679.7px;top:182.00px;font-size:10.3px;font-weight:400;color:#2b6aab;">Annual inspection pending</div>
<svg class="a" style="left:1189px;top:183.3px;" width="9.5" height="6" viewBox="0 0 9.5 6"><path d="M0 0 L9.5 0 L4.75 6 Z" fill="#3e3e3c"/></svg>
<div class="a" style="left:626px;top:219px;width:592px;height:234px;background:#f3f3f3;border-radius:3px;box-shadow:0 2px 3px rgba(0,0,0,0.13)"></div>
<div class="a" style="left:626px;top:312.5px;width:592px;height:140.5px;background:#fff;border-radius:0 0 3px 3px"></div>
<div class="a" style="left:641px;top:232px;width:19px;height:19px;background:#f2c94c;border-radius:3px;background:#f4ca4f"></div>
<svg class="a" style="left:644.5px;top:236px;" width="12" height="11" viewBox="0 0 12 11"><rect x="0" y="2.8" width="12" height="8.2" rx="0.8" fill="#fff"/><path d="M3.8 2.8 L3.8 0.8 L8.2 0.8 L8.2 2.8" fill="none" stroke="#fff" stroke-width="1"/></svg>
<div class="t" style="left:670.0px;top:234.00px;font-size:13.04px;font-weight:700;color:#181818;">Cases for Parent Account (4)</div>
<div class="t" style="left:640.5px;top:263.00px;font-size:10.23px;font-weight:400;color:#444;">4 items • Sorted by Date Opened • Updated 2 minutes ago</div>
<div class="a" style="left:984.5px;top:232px;width:35px;height:25.5px;background:#fff;border:1px solid #c9c9c9;border-radius:4px;box-sizing:border-box"></div>
<svg class="a" style="left:993.0px;top:240px;" width="10.5" height="10.5" viewBox="0 0 10.5 10.5"><polygon points="10.50,5.25 8.74,6.70 8.96,8.96 6.70,8.74 5.25,10.50 3.80,8.74 1.54,8.96 1.76,6.70 0.00,5.25 1.76,3.80 1.54,1.54 3.80,1.76 5.25,0.00 6.70,1.76 8.96,1.54 8.74,3.80" fill="#747474"/><circle cx="5.25" cy="5.25" r="2.31" fill="#fff"/><circle cx="5.25" cy="5.25" r="1.05" fill="#747474"/></svg>
<svg class="a" style="left:1007.0px;top:244px;" width="5" height="3" viewBox="0 0 5 3"><path d="M0 0 L5 0 L2.5 3 Z" fill="#747474"/></svg>
<div class="a" style="left:1026px;top:232px;width:25.5px;height:25.5px;background:#fff;border:1px solid #c9c9c9;border-radius:4px;box-sizing:border-box"></div>
<svg class="a" style="left:1033.3px;top:239.5px;" width="10.5" height="10.5" viewBox="0 0 10.5 10.5"><path d="M8.86 3.41 A4.25 4.25 0 1 0 9.50 6.39" fill="none" stroke="#747474" stroke-width="1.2"/><path d="M10.0 0.5 L10.0 4.41 L6.09 4.41" fill="none" stroke="#747474" stroke-width="1.2"/></svg>
<div class="a" style="left:1054.5px;top:232px;width:50px;height:25.5px;background:#fff;border:1px solid #c9c9c9;border-radius:4px 0 0 4px;box-sizing:border-box"></div>
<div class="a" style="left:1103.5px;top:232px;width:100px;height:25.5px;background:#fff;border:1px solid #c9c9c9;border-radius:0 4px 4px 0;box-sizing:border-box"></div>
<div class="t" style="left:1068.0px;top:241.00px;font-size:10.8px;font-weight:400;color:#0d60b0;">New</div>
<div class="t" style="left:1117.5px;top:241.00px;font-size:10.59px;font-weight:400;color:#0d60b0;">Change Owner</div>
<div class="a" style="left:626px;top:285px;width:592px;height:1px;background:#dddbda"></div>
<div class="a" style="left:626px;top:312px;width:592px;height:1px;background:#dddbda"></div>
<div class="a" style="left:675.3px;top:293px;width:12.3px;height:12.3px;background:#fff;border:1px solid #c9c9c9;border-radius:2px;box-sizing:border-box"></div>
<div class="t" style="left:701.0px;top:295.00px;font-size:10.46px;font-weight:700;color:#444;">Case</div>
<svg class="a" style="left:770px;top:295px;" width="9" height="6" viewBox="0 0 9 6"><path d="M0.5 0.5 L4.5 5 L8.5 0.5" fill="none" stroke="#747474" stroke-width="1.1"/></svg>
<div class="t" style="left:797.0px;top:294.00px;font-size:10.6px;font-weight:700;color:#444;">Contact N...</div>
<svg class="a" style="left:866px;top:295px;" width="9" height="6" viewBox="0 0 9 6"><path d="M0.5 0.5 L4.5 5 L8.5 0.5" fill="none" stroke="#747474" stroke-width="1.1"/></svg>
<div class="t" style="left:892.9px;top:294.00px;font-size:10.8px;font-weight:700;color:#444;">Subject</div>
<svg class="a" style="left:1082px;top:295px;" width="9" height="6" viewBox="0 0 9 6"><path d="M0.5 0.5 L4.5 5 L8.5 0.5" fill="none" stroke="#747474" stroke-width="1.1"/></svg>
<div class="t" style="left:1108.7px;top:294.00px;font-size:10.85px;font-weight:700;color:#444;">Priority</div>
<svg class="a" style="left:1178px;top:295px;" width="9" height="6" viewBox="0 0 9 6"><path d="M0.5 0.5 L4.5 5 L8.5 0.5" fill="none" stroke="#747474" stroke-width="1.1"/></svg>
<div class="t" style="left:1204.9px;top:294.00px;font-size:10.8px;font-weight:700;color:#444;width:12px;overflow:hidden">Da</div>
<div class="t" style="left:650.0px;top:320.00px;font-size:10.5px;font-weight:400;color:#181818;">1</div>
<div class="a" style="left:675.3px;top:320.2px;width:12.3px;height:12.3px;background:#fff;border:1px solid #c9c9c9;border-radius:2px;box-sizing:border-box"></div>
<div class="t" style="left:702.5px;top:320.00px;font-size:10.81px;font-weight:400;color:#0d60b0;">00001015</div>
<div class="a" style="left:702px;top:331px;width:49px;height:1px;background:repeating-linear-gradient(90deg,#3c4a5a 0 1px,transparent 1px 2px)"></div>
<div class="t" style="left:797.0px;top:320.00px;font-size:10.8px;font-weight:400;color:#0d60b0;">Carole White</div>
<div class="t" style="left:892.9px;top:320.00px;font-size:10.91px;font-weight:400;color:#0d60b0;">Over Heating in factory</div>
<div class="t" style="left:1108.7px;top:320.00px;font-size:10.8px;font-weight:400;color:#181818;">Medium</div>
<div class="t" style="left:1205.0px;top:320.00px;font-size:10.8px;font-weight:400;color:#181818;width:12px;overflow:hidden">11/</div>
<div class="a" style="left:626px;top:340px;width:592px;height:1px;background:#e5e5e5"></div>
<div class="t" style="left:650.0px;top:346.00px;font-size:10.5px;font-weight:400;color:#181818;">2</div>
<div class="a" style="left:675.3px;top:346.4px;width:12.3px;height:12.3px;background:#fff;border:1px solid #c9c9c9;border-radius:2px;box-sizing:border-box"></div>
<div class="t" style="left:702.5px;top:346.00px;font-size:10.81px;font-weight:400;color:#0d60b0;">00001017</div>
<div class="a" style="left:702px;top:357px;width:49px;height:1px;background:repeating-linear-gradient(90deg,#3c4a5a 0 1px,transparent 1px 2px)"></div>
<div class="t" style="left:797.0px;top:346.00px;font-size:10.8px;font-weight:400;color:#0d60b0;">Carole White</div>
<div class="t" style="left:892.9px;top:346.00px;font-size:10.91px;font-weight:400;color:#0d60b0;">Shipping Delays</div>
<div class="t" style="left:1108.7px;top:346.00px;font-size:10.8px;font-weight:400;color:#181818;">High</div>
<div class="t" style="left:1205.0px;top:346.00px;font-size:10.8px;font-weight:400;color:#181818;width:12px;overflow:hidden">11/</div>
<div class="a" style="left:626px;top:366px;width:592px;height:1px;background:#e5e5e5"></div>
<div class="t" style="left:650.0px;top:372.00px;font-size:10.5px;font-weight:400;color:#181818;">3</div>
<div class="a" style="left:675.3px;top:372.59999999999997px;width:12.3px;height:12.3px;background:#fff;border:1px solid #c9c9c9;border-radius:2px;box-sizing:border-box"></div>
<div class="t" style="left:702.5px;top:372.00px;font-size:10.81px;font-weight:400;color:#0d60b0;">00001016</div>
<div class="a" style="left:702px;top:383px;width:49px;height:1px;background:repeating-linear-gradient(90deg,#3c4a5a 0 1px,transparent 1px 2px)"></div>
<div class="t" style="left:797.0px;top:372.00px;font-size:10.8px;font-weight:400;color:#0d60b0;">Carole White</div>
<div class="t" style="left:892.9px;top:372.00px;font-size:10.91px;font-weight:400;color:#0d60b0;">Generator Repair</div>
<div class="t" style="left:1108.7px;top:372.00px;font-size:10.8px;font-weight:400;color:#181818;">Medium</div>
<div class="t" style="left:1205.0px;top:372.00px;font-size:10.8px;font-weight:400;color:#181818;width:12px;overflow:hidden">11/</div>
<div class="a" style="left:626px;top:392px;width:592px;height:1px;background:#e5e5e5"></div>
<div class="t" style="left:650.0px;top:399.00px;font-size:10.5px;font-weight:400;color:#181818;">4</div>
<div class="a" style="left:675.3px;top:398.79999999999995px;width:12.3px;height:12.3px;background:#fff;border:1px solid #c9c9c9;border-radius:2px;box-sizing:border-box"></div>
<div class="t" style="left:702.5px;top:399.00px;font-size:10.81px;font-weight:400;color:#0d60b0;">00001000</div>
<div class="a" style="left:702px;top:410px;width:49px;height:1px;background:repeating-linear-gradient(90deg,#3c4a5a 0 1px,transparent 1px 2px)"></div>
<div class="t" style="left:797.0px;top:399.00px;font-size:10.8px;font-weight:400;color:#0d60b0;">Jon Amos</div>
<div class="t" style="left:892.9px;top:399.00px;font-size:10.91px;font-weight:400;color:#0d60b0;">Our Widgets have not been delivered.</div>
<div class="t" style="left:1108.7px;top:399.00px;font-size:10.8px;font-weight:400;color:#181818;">High</div>
<div class="t" style="left:1205.0px;top:399.00px;font-size:10.8px;font-weight:400;color:#181818;width:12px;overflow:hidden">11/</div>
<div class="a" style="left:626px;top:418px;width:592px;height:1px;background:#e5e5e5"></div>
<div class="t" style="left:903.0px;top:430.00px;font-size:10.8px;font-weight:400;color:#0d60b0;">View All</div>
<div class="a" style="left:626px;top:465px;width:592px;height:404px;background:#f3f3f3;border-radius:3px;box-shadow:0 2px 3px rgba(0,0,0,0.13)"></div>
<div class="a" style="left:626px;top:560px;width:592px;height:309px;background:#fff;border-radius:0 0 3px 3px"></div>
<div class="a" style="left:641px;top:477px;width:19px;height:20px;background:#5a92dc;border-radius:3px"></div>
<svg class="a" style="left:644px;top:480.5px;" width="13" height="13" viewBox="0 0 13 13"><path d="M6.5 1 L12 3.8 L6.5 6.6 L1 3.8 Z" fill="#fff"/><path d="M1.2 6.2 L6.5 8.9 L11.8 6.2" fill="none" stroke="#fff" stroke-width="1.3"/><path d="M1.2 8.8 L6.5 11.5 L11.8 8.8" fill="none" stroke="#fff" stroke-width="1.3"/></svg>
<div class="t" style="left:670.0px;top:480.00px;font-size:13.06px;font-weight:700;color:#181818;">Orders for Parent Account (10+)</div>
<div class="t" style="left:640.5px;top:509.00px;font-size:10.23px;font-weight:400;color:#444;">10+ items • Sorted by Created Date • Updated a minute ago</div>
<div class="a" style="left:1083.3px;top:477px;width:35px;height:25.5px;background:#fff;border:1px solid #c9c9c9;border-radius:4px;box-sizing:border-box"></div>
<svg class="a" style="left:1091.8px;top:485px;" width="10.5" height="10.5" viewBox="0 0 10.5 10.5"><polygon points="10.50,5.25 8.74,6.70 8.96,8.96 6.70,8.74 5.25,10.50 3.80,8.74 1.54,8.96 1.76,6.70 0.00,5.25 1.76,3.80 1.54,1.54 3.80,1.76 5.25,0.00 6.70,1.76 8.96,1.54 8.74,3.80" fill="#747474"/><circle cx="5.25" cy="5.25" r="2.31" fill="#fff"/><circle cx="5.25" cy="5.25" r="1.05" fill="#747474"/></svg>
<svg class="a" style="left:1105.8px;top:489px;" width="5" height="3" viewBox="0 0 5 3"><path d="M0 0 L5 0 L2.5 3 Z" fill="#747474"/></svg>
<div class="a" style="left:1125.3px;top:477px;width:25.5px;height:25.5px;background:#fff;border:1px solid #c9c9c9;border-radius:4px;box-sizing:border-box"></div>
<svg class="a" style="left:1132.6px;top:484.5px;" width="10.5" height="10.5" viewBox="0 0 10.5 10.5"><path d="M8.86 3.41 A4.25 4.25 0 1 0 9.50 6.39" fill="none" stroke="#747474" stroke-width="1.2"/><path d="M10.0 0.5 L10.0 4.41 L6.09 4.41" fill="none" stroke="#747474" stroke-width="1.2"/></svg>
<div class="a" style="left:1154.4px;top:477px;width:49.5px;height:25.5px;background:#fff;border:1px solid #c9c9c9;border-radius:4px;box-sizing:border-box"></div>
<div class="t" style="left:1168.0px;top:485.00px;font-size:10.8px;font-weight:400;color:#0d60b0;">New</div>
<div class="a" style="left:626px;top:534px;width:592px;height:1px;background:#dddbda"></div>
<div class="a" style="left:626px;top:560px;width:592px;height:1px;background:#dddbda"></div>
<div class="a" style="left:775px;top:535px;width:1px;height:25px;background:#dddbda"></div>
<div class="a" style="left:875.4px;top:535px;width:1px;height:25px;background:#dddbda"></div>
<div class="a" style="left:975.6px;top:535px;width:1px;height:25px;background:#dddbda"></div>
<div class="a" style="left:1075.6px;top:535px;width:1px;height:25px;background:#dddbda"></div>
<div class="a" style="left:1175.9px;top:535px;width:1px;height:25px;background:#dddbda"></div>
<div class="t" style="left:682.3px;top:543.00px;font-size:10.6px;font-weight:700;color:#444;">Order Num...</div>
<svg class="a" style="left:759.5px;top:544px;" width="9" height="6" viewBox="0 0 9 6"><path d="M0.5 0.5 L4.5 5 L8.5 0.5" fill="none" stroke="#747474" stroke-width="1.1"/></svg>
<div class="t" style="left:782.0px;top:543.00px;font-size:10.6px;font-weight:700;color:#444;">Status</div>
<svg class="a" style="left:859.5px;top:544px;" width="9" height="6" viewBox="0 0 9 6"><path d="M0.5 0.5 L4.5 5 L8.5 0.5" fill="none" stroke="#747474" stroke-width="1.1"/></svg>
<div class="t" style="left:882.0px;top:543.00px;font-size:10.6px;font-weight:700;color:#444;">Order Start ...</div>
<svg class="a" style="left:959.5px;top:544px;" width="9" height="6" viewBox="0 0 9 6"><path d="M0.5 0.5 L4.5 5 L8.5 0.5" fill="none" stroke="#747474" stroke-width="1.1"/></svg>
<div class="t" style="left:982.0px;top:543.00px;font-size:10.6px;font-weight:700;color:#444;">Contract Nu...</div>
<svg class="a" style="left:1059.5px;top:544px;" width="9" height="6" viewBox="0 0 9 6"><path d="M0.5 0.5 L4.5 5 L8.5 0.5" fill="none" stroke="#747474" stroke-width="1.1"/></svg>
<div class="t" style="left:1082.3px;top:543.00px;font-size:10.6px;font-weight:700;color:#444;">Order Amou...</div>
<svg class="a" style="left:1159.5px;top:544px;" width="9" height="6" viewBox="0 0 9 6"><path d="M0.5 0.5 L4.5 5 L8.5 0.5" fill="none" stroke="#747474" stroke-width="1.1"/></svg>
<div class="t" style="left:647.0px;top:570.00px;font-size:10.5px;font-weight:400;color:#181818;">1</div>
<div class="t" style="left:683.5px;top:568.00px;font-size:10.81px;font-weight:400;color:#0d60b0;">00000417</div>
<div class="a" style="left:683px;top:582px;width:50px;height:1px;background:repeating-linear-gradient(90deg,#3c4a5a 0 1px,transparent 1px 2px)"></div>
<div class="t" style="left:782.0px;top:569.00px;font-size:10.75px;font-weight:400;color:#181818;">Activated</div>
<div class="t" style="left:882.0px;top:569.00px;font-size:10.75px;font-weight:400;color:#181818;">11/4/2022</div>
<div class="t" style="left:1082.3px;top:569.00px;font-size:10.73px;font-weight:400;color:#181818;">USD 28,000.00</div>
<div class="a" style="left:1182px;top:568.4px;width:16px;height:15px;background:#fff;border:1px solid #c9c9c9;border-radius:3px;box-sizing:border-box"></div>
<svg class="a" style="left:1186.0px;top:574.15px;" width="8" height="4.5" viewBox="0 0 8 4.5"><path d="M0 0 L8 0 L4.0 4.5 Z" fill="#747474"/></svg>
<div class="a" style="left:626px;top:587px;width:592px;height:1px;background:#e5e5e5"></div>
<div class="t" style="left:647.0px;top:597.00px;font-size:10.5px;font-weight:400;color:#181818;">2</div>
<div class="t" style="left:683.5px;top:595.00px;font-size:10.81px;font-weight:400;color:#0d60b0;">00000418</div>
<div class="a" style="left:683px;top:610px;width:50px;height:1px;background:repeating-linear-gradient(90deg,#3c4a5a 0 1px,transparent 1px 2px)"></div>
<div class="t" style="left:782.0px;top:596.00px;font-size:10.75px;font-weight:400;color:#181818;">Draft</div>
<div class="t" style="left:882.0px;top:596.00px;font-size:10.75px;font-weight:400;color:#181818;">1/15/2023</div>
<div class="t" style="left:1082.3px;top:596.00px;font-size:10.73px;font-weight:400;color:#181818;">USD 2,650.00</div>
<div class="a" style="left:1182px;top:595.56px;width:16px;height:15px;background:#fff;border:1px solid #c9c9c9;border-radius:3px;box-sizing:border-box"></div>
<svg class="a" style="left:1186.0px;top:601.31px;" width="8" height="4.5" viewBox="0 0 8 4.5"><path d="M0 0 L8 0 L4.0 4.5 Z" fill="#747474"/></svg>
<div class="a" style="left:626px;top:614px;width:592px;height:1px;background:#e5e5e5"></div>
<div class="t" style="left:647.0px;top:625.00px;font-size:10.5px;font-weight:400;color:#181818;">3</div>
<div class="t" style="left:683.5px;top:623.00px;font-size:10.81px;font-weight:400;color:#0d60b0;">00000419</div>
<div class="a" style="left:683px;top:637px;width:50px;height:1px;background:repeating-linear-gradient(90deg,#3c4a5a 0 1px,transparent 1px 2px)"></div>
<div class="t" style="left:782.0px;top:624.00px;font-size:10.75px;font-weight:400;color:#181818;">Draft</div>
<div class="t" style="left:882.0px;top:624.00px;font-size:10.75px;font-weight:400;color:#181818;">9/10/2022</div>
<div class="t" style="left:1082.3px;top:624.00px;font-size:10.73px;font-weight:400;color:#181818;">USD 125.00</div>
<div class="a" style="left:1182px;top:622.72px;width:16px;height:15px;background:#fff;border:1px solid #c9c9c9;border-radius:3px;box-sizing:border-box"></div>
<svg class="a" style="left:1186.0px;top:628.47px;" width="8" height="4.5" viewBox="0 0 8 4.5"><path d="M0 0 L8 0 L4.0 4.5 Z" fill="#747474"/></svg>
<div class="a" style="left:626px;top:641px;width:592px;height:1px;background:#e5e5e5"></div>
<div class="t" style="left:647.0px;top:652.00px;font-size:10.5px;font-weight:400;color:#181818;">4</div>
<div class="t" style="left:683.5px;top:650.00px;font-size:10.81px;font-weight:400;color:#0d60b0;">00000420</div>
<div class="a" style="left:683px;top:664px;width:50px;height:1px;background:repeating-linear-gradient(90deg,#3c4a5a 0 1px,transparent 1px 2px)"></div>
<div class="t" style="left:782.0px;top:651.00px;font-size:10.75px;font-weight:400;color:#181818;">Activated</div>
<div class="t" style="left:882.0px;top:651.00px;font-size:10.75px;font-weight:400;color:#181818;">7/9/2022</div>
<div class="t" style="left:1082.3px;top:651.00px;font-size:10.73px;font-weight:400;color:#181818;">USD 52,000.00</div>
<div class="a" style="left:1182px;top:649.88px;width:16px;height:15px;background:#fff;border:1px solid #c9c9c9;border-radius:3px;box-sizing:border-box"></div>
<svg class="a" style="left:1186.0px;top:655.63px;" width="8" height="4.5" viewBox="0 0 8 4.5"><path d="M0 0 L8 0 L4.0 4.5 Z" fill="#747474"/></svg>
<div class="a" style="left:626px;top:668px;width:592px;height:1px;background:#e5e5e5"></div>
<div class="t" style="left:647.0px;top:679.00px;font-size:10.5px;font-weight:400;color:#181818;">5</div>
<div class="t" style="left:683.5px;top:677.00px;font-size:10.81px;font-weight:400;color:#0d60b0;">00000421</div>
<div class="a" style="left:683px;top:691px;width:50px;height:1px;background:repeating-linear-gradient(90deg,#3c4a5a 0 1px,transparent 1px 2px)"></div>
<div class="t" style="left:782.0px;top:678.00px;font-size:10.75px;font-weight:400;color:#181818;">Draft</div>
<div class="t" style="left:882.0px;top:678.00px;font-size:10.75px;font-weight:400;color:#181818;">4/15/2023</div>
<div class="t" style="left:1082.3px;top:678.00px;font-size:10.73px;font-weight:400;color:#181818;">USD 50,300.00</div>
<div class="a" style="left:1182px;top:677.04px;width:16px;height:15px;background:#fff;border:1px solid #c9c9c9;border-radius:3px;box-sizing:border-box"></div>
<svg class="a" style="left:1186.0px;top:682.79px;" width="8" height="4.5" viewBox="0 0 8 4.5"><path d="M0 0 L8 0 L4.0 4.5 Z" fill="#747474"/></svg>
<div class="a" style="left:626px;top:695px;width:592px;height:1px;background:#e5e5e5"></div>
<div class="t" style="left:647.0px;top:706.00px;font-size:10.5px;font-weight:400;color:#181818;">6</div>
<div class="t" style="left:683.5px;top:704.00px;font-size:10.81px;font-weight:400;color:#0d60b0;">00000422</div>
<div class="a" style="left:683px;top:718px;width:50px;height:1px;background:repeating-linear-gradient(90deg,#3c4a5a 0 1px,transparent 1px 2px)"></div>
<div class="t" style="left:782.0px;top:705.00px;font-size:10.75px;font-weight:400;color:#181818;">Activated</div>
<div class="t" style="left:882.0px;top:705.00px;font-size:10.75px;font-weight:400;color:#181818;">2/14/2022</div>
<div class="t" style="left:1082.3px;top:705.00px;font-size:10.73px;font-weight:400;color:#181818;">USD 52,000.00</div>
<div class="a" style="left:1182px;top:704.2px;width:16px;height:15px;background:#fff;border:1px solid #c9c9c9;border-radius:3px;box-sizing:border-box"></div>
<svg class="a" style="left:1186.0px;top:709.95px;" width="8" height="4.5" viewBox="0 0 8 4.5"><path d="M0 0 L8 0 L4.0 4.5 Z" fill="#747474"/></svg>
<div class="a" style="left:626px;top:722px;width:592px;height:1px;background:#e5e5e5"></div>
<div class="t" style="left:647.0px;top:733.00px;font-size:10.5px;font-weight:400;color:#181818;">7</div>
<div class="t" style="left:683.5px;top:731.00px;font-size:10.81px;font-weight:400;color:#0d60b0;">00000423</div>
<div class="a" style="left:683px;top:745px;width:50px;height:1px;background:repeating-linear-gradient(90deg,#3c4a5a 0 1px,transparent 1px 2px)"></div>
<div class="t" style="left:782.0px;top:732.00px;font-size:10.75px;font-weight:400;color:#181818;">Activated</div>
<div class="t" style="left:882.0px;top:732.00px;font-size:10.75px;font-weight:400;color:#181818;">1/11/2022</div>
<div class="t" style="left:1082.3px;top:732.00px;font-size:10.73px;font-weight:400;color:#181818;">USD 52,000.00</div>
<div class="a" style="left:1182px;top:731.36px;width:16px;height:15px;background:#fff;border:1px solid #c9c9c9;border-radius:3px;box-sizing:border-box"></div>
<svg class="a" style="left:1186.0px;top:737.11px;" width="8" height="4.5" viewBox="0 0 8 4.5"><path d="M0 0 L8 0 L4.0 4.5 Z" fill="#747474"/></svg>
<div class="a" style="left:626px;top:750px;width:592px;height:1px;background:#e5e5e5"></div>
<div class="t" style="left:647.0px;top:760.00px;font-size:10.5px;font-weight:400;color:#181818;">8</div>
<div class="t" style="left:683.5px;top:758.00px;font-size:10.81px;font-weight:400;color:#0d60b0;">00000424</div>
<div class="a" style="left:683px;top:773px;width:50px;height:1px;background:repeating-linear-gradient(90deg,#3c4a5a 0 1px,transparent 1px 2px)"></div>
<div class="t" style="left:782.0px;top:759.00px;font-size:10.75px;font-weight:400;color:#181818;">Activated</div>
<div class="t" style="left:882.0px;top:759.00px;font-size:10.75px;font-weight:400;color:#181818;">5/17/2019</div>
<div class="t" style="left:1082.3px;top:759.00px;font-size:10.73px;font-weight:400;color:#181818;">USD 52,000.00</div>
<div class="a" style="left:1182px;top:758.52px;width:16px;height:15px;background:#fff;border:1px solid #c9c9c9;border-radius:3px;box-sizing:border-box"></div>
<svg class="a" style="left:1186.0px;top:764.27px;" width="8" height="4.5" viewBox="0 0 8 4.5"><path d="M0 0 L8 0 L4.0 4.5 Z" fill="#747474"/></svg>
<div class="a" style="left:626px;top:777px;width:592px;height:1px;background:#e5e5e5"></div>
<div class="t" style="left:647.0px;top:788.00px;font-size:10.5px;font-weight:400;color:#181818;">9</div>
<div class="t" style="left:683.5px;top:786.00px;font-size:10.81px;font-weight:400;color:#0d60b0;">00000425</div>
<div class="a" style="left:683px;top:800px;width:50px;height:1px;background:repeating-linear-gradient(90deg,#3c4a5a 0 1px,transparent 1px 2px)"></div>
<div class="t" style="left:782.0px;top:787.00px;font-size:10.75px;font-weight:400;color:#181818;">Activated</div>
<div class="t" style="left:882.0px;top:787.00px;font-size:10.75px;font-weight:400;color:#181818;">7/17/2021</div>
<div class="t" style="left:1082.3px;top:787.00px;font-size:10.73px;font-weight:400;color:#181818;">USD 52,000.00</div>
<div class="a" style="left:1182px;top:785.68px;width:16px;height:15px;background:#fff;border:1px solid #c9c9c9;border-radius:3px;box-sizing:border-box"></div>
<svg class="a" style="left:1186.0px;top:791.43px;" width="8" height="4.5" viewBox="0 0 8 4.5"><path d="M0 0 L8 0 L4.0 4.5 Z" fill="#747474"/></svg>
<div class="a" style="left:626px;top:804px;width:592px;height:1px;background:#e5e5e5"></div>
<div class="t" style="left:647.0px;top:815.00px;font-size:10.5px;font-weight:400;color:#181818;">10</div>
<div class="t" style="left:683.5px;top:813.00px;font-size:10.81px;font-weight:400;color:#0d60b0;">00000426</div>
<div class="a" style="left:683px;top:827px;width:50px;height:1px;background:repeating-linear-gradient(90deg,#3c4a5a 0 1px,transparent 1px 2px)"></div>
<div class="t" style="left:782.0px;top:814.00px;font-size:10.75px;font-weight:400;color:#181818;">Activated</div>
<div class="t" style="left:882.0px;top:814.00px;font-size:10.75px;font-weight:400;color:#181818;">6/15/2020</div>
<div class="t" style="left:1082.3px;top:814.00px;font-size:10.73px;font-weight:400;color:#181818;">USD 52,000.00</div>
<div class="a" style="left:1182px;top:812.8399999999999px;width:16px;height:15px;background:#fff;border:1px solid #c9c9c9;border-radius:3px;box-sizing:border-box"></div>
<svg class="a" style="left:1186.0px;top:818.5899999999999px;" width="8" height="4.5" viewBox="0 0 8 4.5"><path d="M0 0 L8 0 L4.0 4.5 Z" fill="#747474"/></svg>
<div class="a" style="left:626px;top:832px;width:592px;height:1px;background:#e5e5e5"></div>
<div class="t" style="left:903.0px;top:845.00px;font-size:10.8px;font-weight:400;color:#0d60b0;">View All</div>
<div class="a" style="left:626px;top:880px;width:592px;height:160px;background:#f3f3f3;border-radius:3px"></div>
<div class="a" style="left:626px;top:973px;width:592px;height:60px;background:#fff"></div>
<div class="a" style="left:641px;top:892px;width:19px;height:19px;background:#2a7f9e;border-radius:3px"></div>
<svg class="a" style="left:644.5px;top:895.5px;" width="12" height="12" viewBox="0 0 12 12"><rect x="0.5" y="0.5" width="11" height="9" rx="1" fill="#fff"/><rect x="2.3" y="2.3" width="7.4" height="4.5" fill="#8fb8ca"/><rect x="2" y="9.5" width="2" height="2" fill="#fff"/><rect x="8" y="9.5" width="2" height="2" fill="#fff"/></svg>
<div class="t" style="left:670.1px;top:895.00px;font-size:13.02px;font-weight:700;color:#181818;">Assets for Parent Account (3)</div>
<div class="t" style="left:640.5px;top:923.00px;font-size:10.23px;font-weight:400;color:#444;">3 items • Updated 2 minutes ago</div>
<div class="a" style="left:1083.3px;top:892px;width:35px;height:25.5px;background:#fff;border:1px solid #c9c9c9;border-radius:4px;box-sizing:border-box"></div>
<svg class="a" style="left:1091.8px;top:900px;" width="10.5" height="10.5" viewBox="0 0 10.5 10.5"><polygon points="10.50,5.25 8.74,6.70 8.96,8.96 6.70,8.74 5.25,10.50 3.80,8.74 1.54,8.96 1.76,6.70 0.00,5.25 1.76,3.80 1.54,1.54 3.80,1.76 5.25,0.00 6.70,1.76 8.96,1.54 8.74,3.80" fill="#747474"/><circle cx="5.25" cy="5.25" r="2.31" fill="#fff"/><circle cx="5.25" cy="5.25" r="1.05" fill="#747474"/></svg>
<svg class="a" style="left:1105.8px;top:904px;" width="5" height="3" viewBox="0 0 5 3"><path d="M0 0 L5 0 L2.5 3 Z" fill="#747474"/></svg>
<div class="a" style="left:1125.3px;top:892px;width:25.5px;height:25.5px;background:#fff;border:1px solid #c9c9c9;border-radius:4px;box-sizing:border-box"></div>
<svg class="a" style="left:1132.6px;top:899.5px;" width="10.5" height="10.5" viewBox="0 0 10.5 10.5"><path d="M8.86 3.41 A4.25 4.25 0 1 0 9.50 6.39" fill="none" stroke="#747474" stroke-width="1.2"/><path d="M10.0 0.5 L10.0 4.41 L6.09 4.41" fill="none" stroke="#747474" stroke-width="1.2"/></svg>
<div class="a" style="left:1154.4px;top:892px;width:49.5px;height:25.5px;background:#fff;border:1px solid #c9c9c9;border-radius:4px;box-sizing:border-box"></div>
<div class="t" style="left:1168.0px;top:900.00px;font-size:10.8px;font-weight:400;color:#0d60b0;">New</div>
<div class="a" style="left:626px;top:945px;width:592px;height:1px;background:#dddbda"></div>
<div class="a" style="left:626px;top:973px;width:592px;height:1px;background:#dddbda"></div>
<div class="a" style="left:899px;top:946px;width:1px;height:27px;background:#dddbda"></div>
<div class="a" style="left:675.3px;top:953.5px;width:12.3px;height:12.3px;background:#fff;border:1px solid #c9c9c9;border-radius:2px;box-sizing:border-box"></div>
<div class="t" style="left:701.2px;top:954.00px;font-size:10.6px;font-weight:700;color:#444;">Asset Name</div>
<svg class="a" style="left:879px;top:956px;" width="9" height="6" viewBox="0 0 9 6"><path d="M0.5 0.5 L4.5 5 L8.5 0.5" fill="none" stroke="#747474" stroke-width="1.1"/></svg>
<div class="t" style="left:906.7px;top:954.00px;font-size:10.6px;font-weight:700;color:#444;">Serial Num...</div>
<svg class="a" style="left:978.5px;top:956px;" width="9" height="6" viewBox="0 0 9 6"><path d="M0.5 0.5 L4.5 5 L8.5 0.5" fill="none" stroke="#747474" stroke-width="1.1"/></svg>
<div class="t" style="left:1005.7px;top:954.00px;font-size:10.6px;font-weight:700;color:#444;">Install Date</div>
<svg class="a" style="left:1074.5px;top:956px;" width="9" height="6" viewBox="0 0 9 6"><path d="M0.5 0.5 L4.5 5 L8.5 0.5" fill="none" stroke="#747474" stroke-width="1.1"/></svg>
<div class="t" style="left:1101.7px;top:954.00px;font-size:10.6px;font-weight:700;color:#444;">Status</div>
<svg class="a" style="left:1213px;top:956px;overflow:hidden" width="5" height="6" viewBox="0 0 5 6"><path d="M0.5 0.5 L4.5 5 L8.5 0.5" fill="none" stroke="#747474" stroke-width="1.1"/></svg>
<div class="t" style="left:650.0px;top:981.00px;font-size:10.5px;font-weight:400;color:#181818;">1</div>
<div class="a" style="left:675.3px;top:981.3px;width:12.3px;height:12.3px;background:#fff;border:1px solid #c9c9c9;border-radius:2px;box-sizing:border-box"></div>
<div class="t" style="left:702.5px;top:981.00px;font-size:10.8px;font-weight:400;color:#0d60b0;">Transformer</div>
<div class="a" style="left:702px;top:993px;width:60px;height:1px;background:repeating-linear-gradient(90deg,#3c4a5a 0 1px,transparent 1px 2px)"></div>
<div class="t" style="left:906.7px;top:981.00px;font-size:10.8px;font-weight:400;color:#0d60b0;">02821</div>
<div class="t" style="left:1101.7px;top:981.00px;font-size:10.8px;font-weight:400;color:#181818;">Installed</div>
<div class="a" style="left:626px;top:999px;width:592px;height:1px;background:#e5e5e5"></div>
<div class="t" style="left:650.0px;top:1007.00px;font-size:10.5px;font-weight:400;color:#181818;">2</div>
<div class="a" style="left:675.3px;top:1007.5px;width:12.3px;height:12.3px;background:#fff;border:1px solid #c9c9c9;border-radius:2px;box-sizing:border-box"></div>
<div class="t" style="left:702.5px;top:1007.00px;font-size:10.8px;font-weight:400;color:#0d60b0;">Delivery Vehicles</div>
<div class="a" style="left:702px;top:1019px;width:83px;height:1px;background:repeating-linear-gradient(90deg,#3c4a5a 0 1px,transparent 1px 2px)"></div>
<div class="t" style="left:1101.7px;top:1007.00px;font-size:10.8px;font-weight:400;color:#181818;">Purchased</div>
<div class="a" style="left:1227px;top:76px;width:286px;height:367px;background:#fff;border-radius:3px;box-shadow:0 2px 3px rgba(0,0,0,0.13)"></div>
<div class="a" style="left:1241px;top:86px;width:19px;height:19px;background:#5a78a8;border-radius:3px;background:#5f7fb3"></div>
<svg class="a" style="left:1244px;top:89.5px;" width="13" height="12" viewBox="0 0 13 12"><rect x="5" y="1" width="7" height="1.8" fill="#fff"/><rect x="5" y="5.1" width="7" height="1.8" fill="#fff"/><rect x="5" y="9.2" width="7" height="1.8" fill="#fff"/><circle cx="2" cy="6" r="1.2" fill="none" stroke="#fff" stroke-width="0.8"/><rect x="1.6" y="1" width="0.8" height="2.5" fill="#fff"/><rect x="1.6" y="8.5" width="0.8" height="2.5" fill="#fff"/></svg>
<div class="t" style="left:1270.5px;top:89.00px;font-size:12.74px;font-weight:700;color:#181818;">Actions &amp; Recommendations</div>
<div class="t" style="left:1251.5px;top:128.00px;font-size:10.39px;font-weight:700;color:#181818;">Actions</div>
<div class="t" style="left:1309.5px;top:127.00px;font-size:10.5px;font-weight:400;color:#444;">History</div>
<div class="a" style="left:1241px;top:146px;width:259px;height:1px;background:#e5e5e5"></div>
<div class="a" style="left:1241px;top:145px;width:58px;height:2px;background:#3a7bd5"></div>
<div class="a" style="left:1241px;top:157px;width:259px;height:26px;background:#0176d3;border:1px solid #0b5cab;border-radius:4px;box-sizing:border-box"></div>
<div class="t" style="left:1170.5px;width:400px;text-align:center;top:166.00px;font-size:9.9px;font-weight:700;color:#fff;">Add</div>
<div class="a" style="left:1241px;top:192.5px;width:259px;height:34px;background:#fff;border:1px solid #e5e5e5;border-radius:4px;box-sizing:border-box"></div>
<div class="t" style="left:1250.0px;top:207.00px;font-size:10.4px;font-weight:400;color:#181818;">Create a Case</div>
<svg class="a" style="left:1456.5px;top:203.0px;" width="12.5" height="12.5" viewBox="0 0 12.5 12.5"><g transform="scale(1.042) rotate(45 6 6)"><rect x="3.9" y="-0.5" width="4.2" height="5" rx="0.4" fill="#747474"/><path d="M1.8 6.6 L10.2 6.6 L8.4 4.3 L3.6 4.3 Z" fill="#747474"/><rect x="5.35" y="6.4" width="1.3" height="6.2" fill="#747474"/></g></svg>
<div class="a" style="left:1474.3px;top:200.5px;width:18.5px;height:19px;background:#fff;border:1px solid #c9c9c9;border-radius:3px;box-sizing:border-box"></div>
<svg class="a" style="left:1479.05px;top:208.0px;" width="9" height="5" viewBox="0 0 9 5"><path d="M0 0 L9 0 L4.5 5 Z" fill="#747474"/></svg>
<div class="a" style="left:1241px;top:236.5px;width:259px;height:34px;background:#fff;border:1px solid #e5e5e5;border-radius:4px;box-sizing:border-box"></div>
<div class="t" style="left:1250.0px;top:251.00px;font-size:10.4px;font-weight:400;color:#181818;">Verify Identity</div>
<svg class="a" style="left:1456.5px;top:247.0px;" width="12.5" height="12.5" viewBox="0 0 12.5 12.5"><g transform="scale(1.042) rotate(45 6 6)"><rect x="3.9" y="-0.5" width="4.2" height="5" rx="0.4" fill="#747474"/><path d="M1.8 6.6 L10.2 6.6 L8.4 4.3 L3.6 4.3 Z" fill="#747474"/><rect x="5.35" y="6.4" width="1.3" height="6.2" fill="#747474"/></g></svg>
<div class="a" style="left:1474.3px;top:244.5px;width:18.5px;height:19px;background:#fff;border:1px solid #c9c9c9;border-radius:3px;box-sizing:border-box"></div>
<svg class="a" style="left:1479.05px;top:252.0px;" width="9" height="5" viewBox="0 0 9 5"><path d="M0 0 L9 0 L4.5 5 Z" fill="#747474"/></svg>
<div class="a" style="left:1241px;top:280px;width:259px;height:152.5px;background:#fff;border:1px solid #2466a8;border-radius:4px;box-sizing:border-box"></div>
<div class="a" style="left:1249.5px;top:304.8px;width:2.2px;height:2.2px;background:#555;border-radius:50%"></div>
<div class="a" style="left:1254px;top:304.8px;width:2.2px;height:2.2px;background:#555;border-radius:50%"></div>
<div class="a" style="left:1258.5px;top:304.8px;width:2.2px;height:2.2px;background:#555;border-radius:50%"></div>
<div class="t" style="left:1267.3px;top:292.00px;font-size:10.52px;font-weight:700;color:#181818;">Reset Password</div>
<div class="t" style="left:1267.3px;top:307.00px;font-size:10.2px;font-weight:400;color:#444;">(In Progress)</div>
<svg class="a" style="left:1456.5px;top:290.5px;" width="12.5" height="12.5" viewBox="0 0 12.5 12.5"><g transform="scale(1.042) rotate(45 6 6)"><rect x="3.9" y="-0.5" width="4.2" height="5" rx="0.4" fill="#747474"/><path d="M1.8 6.6 L10.2 6.6 L8.4 4.3 L3.6 4.3 Z" fill="#747474"/><rect x="5.35" y="6.4" width="1.3" height="6.2" fill="#747474"/></g></svg>
<div class="a" style="left:1474.3px;top:288px;width:18.5px;height:19.5px;background:#fff;border:1px solid #c9c9c9;border-radius:3px;box-sizing:border-box"></div>
<svg class="a" style="left:1479.05px;top:295.75px;" width="9" height="5" viewBox="0 0 9 5"><path d="M0 0 L9 0 L4.5 5 Z" fill="#747474"/></svg>
<div class="a" style="left:1264px;top:335.7px;width:13px;height:13px;border:3px solid #1b8ae8;border-radius:50%;box-sizing:border-box;background:#fff"></div>
<div class="a" style="left:1270px;top:352px;width:2px;height:19px;background:#c9c9c9"></div>
<div class="a" style="left:1267px;top:373.5px;width:7px;height:7px;background:#c9c9c9;border-radius:50%"></div>
<div class="a" style="left:1270px;top:383.5px;width:2px;height:21.5px;background:#c9c9c9"></div>
<div class="a" style="left:1267px;top:408px;width:7px;height:7px;background:#c9c9c9;border-radius:50%"></div>
<div class="t" style="left:1290.4px;top:336.00px;font-size:11.1px;font-weight:400;color:#181818;">Verify Identity</div>
<div class="t" style="left:1290.4px;top:371.00px;font-size:11.1px;font-weight:400;color:#181818;">Verify Email</div>
<div class="t" style="left:1290.4px;top:406.00px;font-size:11.1px;font-weight:400;color:#181818;">Email Sent</div>
<div class="a" style="left:1227px;top:454.5px;width:286px;height:215px;background:#fff;border-radius:3px;box-shadow:0 2px 3px rgba(0,0,0,0.13)"></div>
<div class="t" style="left:1241.5px;top:471.00px;font-size:12.84px;font-weight:700;color:#181818;">Knowledge</div>
<div class="a" style="left:1416px;top:464.5px;width:84px;height:25px;background:#fff;border:1px solid #c9c9c9;border-radius:4px;box-sizing:border-box"></div>
<div class="t" style="left:1430.3px;top:472.00px;font-size:11.08px;font-weight:400;color:#0d60b0;">New Article</div>
<div class="a" style="left:1241.5px;top:500px;width:258.5px;height:31px;background:#fff;border:1px solid #e5e5e5;border-radius:4px;box-sizing:border-box"></div>
<svg class="a" style="left:1258.5px;top:510.5px;" width="10.5" height="10.5" viewBox="0 0 10.5 10.5"><circle cx="4.41" cy="4.41" r="3.36" fill="none" stroke="#939393" stroke-width="1.2"/><path d="M6.93 6.93 L9.9 9.9" stroke="#939393" stroke-width="1.56" stroke-linecap="round"/></svg>
<div class="t" style="left:1280.7px;top:511.00px;font-size:10.72px;font-weight:400;color:#181818;">overheating</div>
<div class="a" style="left:1241.5px;top:550px;width:258.5px;height:1px;background:#e5e5e5"></div>
<div class="t" style="left:1241.5px;top:570.00px;font-size:9.96px;font-weight:400;color:#444;">1 Result</div>
<div class="a" style="left:1246px;top:604px;width:59.5px;height:12.5px;background:#fff03c"></div>
<div class="t" style="left:1246.5px;top:605.00px;font-size:10.7px;font-weight:400;color:#181818;">Overheating</div>
<div class="t" style="left:1308.8px;top:605.00px;font-size:10.7px;font-weight:400;color:#0d60b0;">engine</div>
<div class="a" style="left:1246px;top:616px;width:95px;height:1px;background:repeating-linear-gradient(90deg,#3c4a5a 0 1px,transparent 1px 2px)"></div>
<div class="a" style="left:1482.4px;top:605.4px;width:15.5px;height:15.5px;background:#fff;border:1px solid #c9c9c9;border-radius:3px;box-sizing:border-box"></div>
<svg class="a" style="left:1486.15px;top:611.4px;" width="8" height="4.5" viewBox="0 0 8 4.5"><path d="M0 0 L8 0 L4.0 4.5 Z" fill="#747474"/></svg>
<div class="t" style="left:1244.5px;top:624.00px;font-size:9.96px;font-weight:400;color:#444;">000001007</div>
<div class="a" style="left:1302.5px;top:627px;width:2.3px;height:2.3px;background:#444;border-radius:50%"></div>
<div class="t" style="left:1244.5px;top:638.00px;font-size:9.96px;font-weight:400;color:#444;">Last Published</div>
<div class="t" style="left:1316.3px;top:638.00px;font-size:9.96px;font-weight:400;color:#444;">Nov 24, 2022, 11:27 PM</div>
<div class="a" style="left:1241.5px;top:658px;width:258.5px;height:1px;background:#e5e5e5"></div>
</div>
<div class="a" style="left:0;top:1026px;width:1520px;height:1px;background:#000"></div>
</body></html>
